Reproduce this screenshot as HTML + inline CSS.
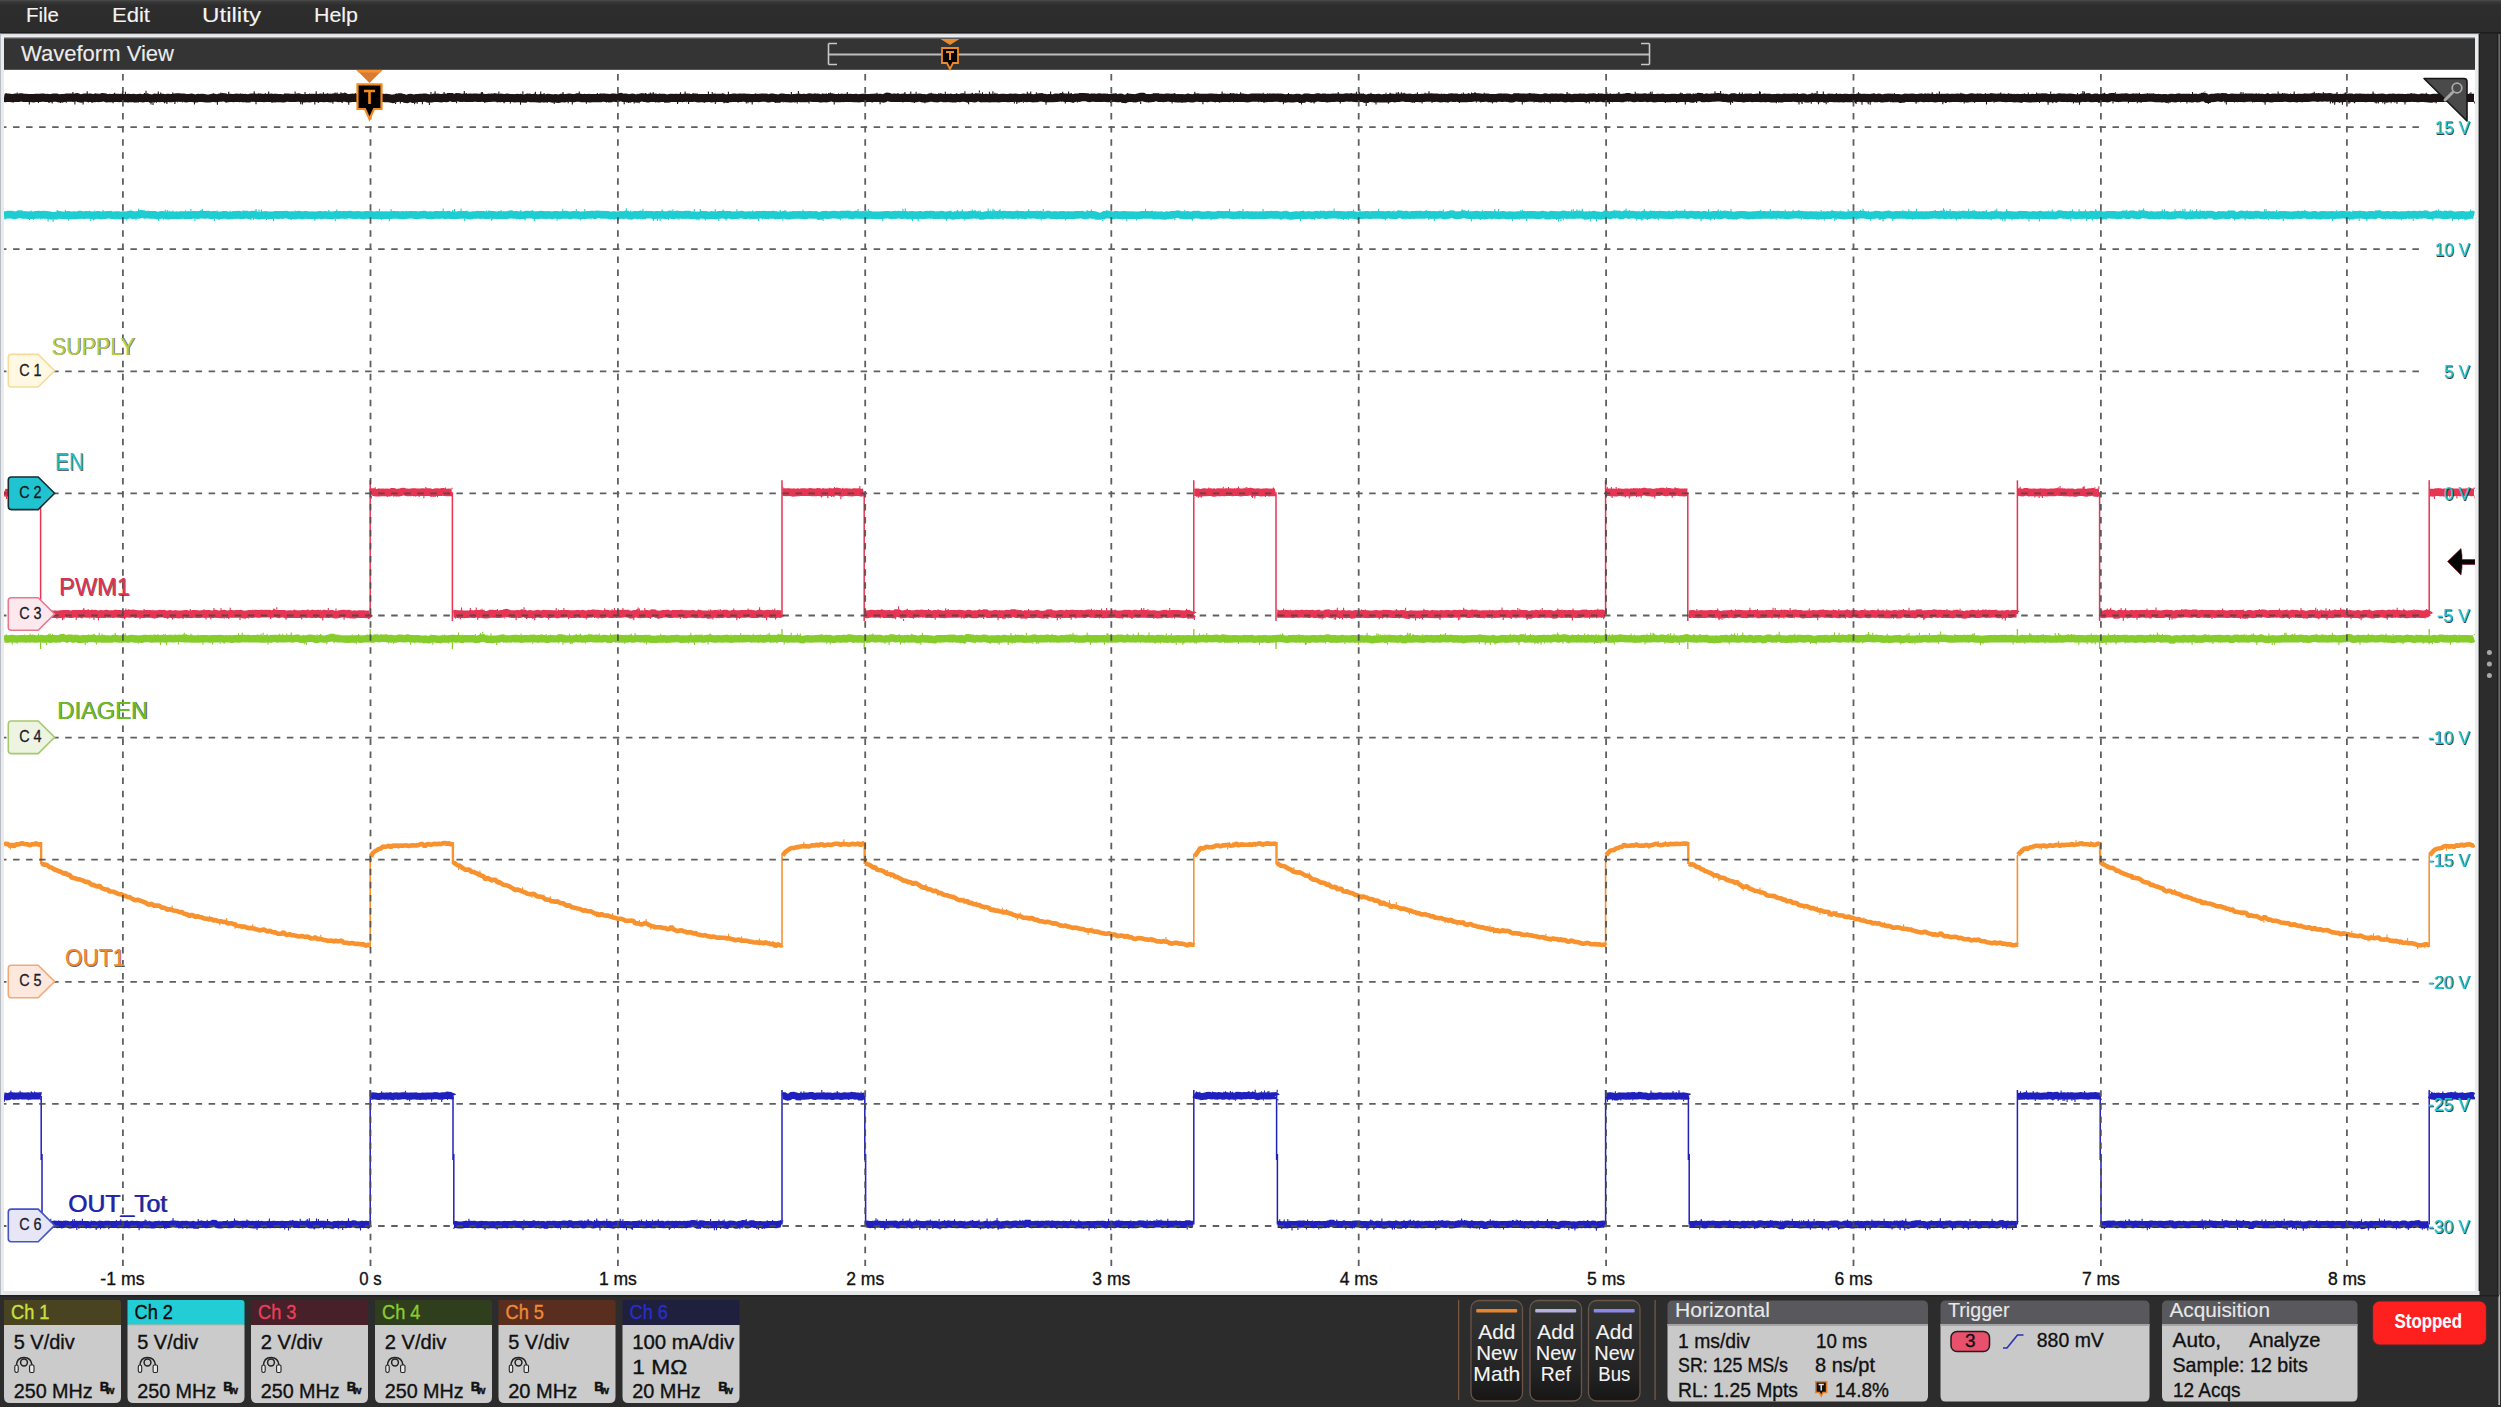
<!DOCTYPE html>
<html><head><meta charset="utf-8"><title>Waveform View</title>
<style>
*{margin:0;padding:0}
html,body{width:2501px;height:1407px;overflow:hidden;background:#2c2c2c}
svg{position:absolute;left:0;top:0;display:block}
</style></head><body>
<svg width="2501" height="1407" viewBox="0 0 2501 1407" font-family="'Liberation Sans', sans-serif">
<defs><clipPath id="pc"><rect x="4" y="70" width="2471" height="1221"/></clipPath></defs>
<defs><linearGradient id="mg" x1="0" y1="0" x2="0" y2="1"><stop offset="0" stop-color="#525252"/><stop offset="0.03" stop-color="#3c3c3c"/><stop offset="0.16" stop-color="#2d2d2d"/><stop offset="1" stop-color="#2c2c2c"/></linearGradient><linearGradient id="lg" x1="0" y1="0" x2="0" y2="1"><stop offset="0" stop-color="#d6d9dc"/><stop offset="1" stop-color="#f6f7fa"/></linearGradient></defs><rect x="0" y="0" width="2501" height="34" fill="url(#mg)"/><rect x="0" y="32" width="2501" height="1.6" fill="#1e1e1e"/><text x="26" y="22" font-size="20.9" fill="#f4f4f4" textLength="33" lengthAdjust="spacingAndGlyphs" stroke="#f4f4f4" stroke-width="0.12">File</text><text x="112" y="22" font-size="20.9" fill="#f4f4f4" textLength="38" lengthAdjust="spacingAndGlyphs" stroke="#f4f4f4" stroke-width="0.12">Edit</text><text x="202" y="22" font-size="20.9" fill="#f4f4f4" textLength="59" lengthAdjust="spacingAndGlyphs" stroke="#f4f4f4" stroke-width="0.12">Utility</text><text x="314" y="22" font-size="20.9" fill="#f4f4f4" textLength="44" lengthAdjust="spacingAndGlyphs" stroke="#f4f4f4" stroke-width="0.12">Help</text><rect x="0" y="34" width="2479.5" height="1261" fill="#e9ebed"/><rect x="0" y="34" width="1" height="1261" fill="#b8bcc4"/><rect x="0" y="33.6" width="2479.5" height="4" fill="url(#lg)"/><rect x="0" y="33.6" width="1" height="1261.4" fill="#b8bcc4"/><rect x="4" y="37.6" width="2471" height="1" fill="#262626"/><rect x="4" y="38.6" width="2471" height="31.2" fill="#343434"/><text x="21" y="60.6" font-size="22.2" fill="#ececec" textLength="153" lengthAdjust="spacingAndGlyphs" stroke="#ececec" stroke-width="0.12">Waveform View</text><rect x="4" y="70" width="2471" height="1221" fill="#ffffff"/><rect x="2478.6" y="34" width="1.4" height="1261" fill="#1e1e1e"/><rect x="2497.2" y="34" width="1.3" height="1261" fill="#202020"/><rect x="2498.5" y="34" width="1.3" height="1261" fill="#7a7c80"/><rect x="2498.5" y="1295" width="1.3" height="110" fill="#d8d8d0"/><circle cx="2489.4" cy="652.6" r="2.5" fill="#a8a8a8"/><circle cx="2489.4" cy="664" r="2.5" fill="#a8a8a8"/><circle cx="2489.4" cy="675.5" r="2.5" fill="#a8a8a8"/><path d="M828.5 43.5 V64.5 M828.5 43.5 H837 M828.5 64.5 H837 M1649.5 43.5 V64.5 M1649.5 43.5 H1641 M1649.5 64.5 H1641" stroke="#c8c8c8" stroke-width="1.6" fill="none"/><path d="M829 54.5 H1649" stroke="#bdbdbd" stroke-width="2" fill="none"/><path d="M940.5 39 H959.5 L950 45 Z" fill="#e88a2e"/><path d="M942 48 H958 V63 H953 L950 69 L947 63 H942 Z" fill="#050505" stroke="#f08a22" stroke-width="1.8"/><path d="M946 52 H954 M950 52 V60" stroke="#f08a22" stroke-width="2" fill="none"/><rect x="4" y="1291" width="2475.5" height="4" fill="#e4e6e8"/><rect x="0" y="1295" width="2499" height="1.5" fill="#202020"/>
<g clip-path="url(#pc)">
<path d="M4 97.8L6 98.1L8 97.6L10 97.8L12 98.2L14 98L16 97.4L18 98.2L20 97.4L22 97.4L24 98L26 97.9L28 98L30 98L32 98.1L34 98.3L36 97.8L38 97.9L40 97.8L42 97.6L44 97.7L46 98L48 97.9L50 98.3L52 97.9L54 97.7L56 97.5L58 98.1L60 98.3L62 98L64 98.1L66 97.7L68 97.6L70 97.7L72 97.5L74 98L76 97.3L78 97.1L80 99.1L82 98.2L84 97.6L86 97.7L88 97.9L90 97.6L92 98.1L94 98.2L96 97.6L98 98.1L100 97.8L102 97.6L104 96.7L106 98.3L108 98.2L110 97.9L112 98.3L114 97.8L116 97.9L118 97.8L120 98.3L122 97.5L124 98.2L126 98.2L128 97.9L130 98.1L132 98.1L134 97.9L136 98.5L138 98L140 97.9L142 98.2L144 98.5L146 97.1L148 98L150 98L152 99.5L154 97.7L156 97.8L158 97.9L160 98.2L162 97.5L164 98.2L166 98.3L168 97.8L170 98.1L172 98.2L174 97.5L176 98L178 96.8L180 98L182 97.6L184 97.6L186 98.4L188 98L190 97.9L192 97.7L194 98.2L196 98.6L198 97.9L200 98L202 97.8L204 98.1L206 98.5L208 98.5L210 98.3L212 97.9L214 97.8L216 98.3L218 98L220 97.6L222 97.6L224 96.6L226 98.2L228 98.2L230 97.8L232 98L234 98.1L236 97.7L238 97.8L240 98.1L242 97.7L244 98.2L246 97.7L248 99L250 97.8L252 97.5L254 97.6L256 97.8L258 97.8L260 97.6L262 97.8L264 98.1L266 98L268 97.8L270 97.9L272 97.5L274 98.6L276 97.8L278 98.3L280 97.9L282 98.3L284 98.5L286 97.6L288 97.6L290 98L292 97.7L294 98L296 98L298 97.2L300 97.9L302 98.1L304 98.4L306 98.2L308 98L310 98.4L312 97.7L314 98L316 97.7L318 98.2L320 97.7L322 97.9L324 98.1L326 97.8L328 97.8L330 98.5L332 98.1L334 97.4L336 97.6L338 98.1L340 97.8L342 98.1L344 96.6L346 97.8L348 98.4L350 98.2L352 97.6L354 98L356 97.9L358 98.1L360 98L362 98L364 97.8L366 98.1L368 97.7L370 99.4L372 98L374 97.9L376 97.7L378 97.9L380 97.6L382 97.5L384 98.2L386 97.9L388 98.1L390 98.5L392 98.7L394 99.3L396 97.8L398 97.9L400 97.1L402 97.9L404 98.1L406 99.5L408 98.7L410 97.7L412 98.2L414 99.3L416 98.1L418 98L420 97.9L422 97.8L424 97.6L426 97.7L428 98.6L430 98.3L432 98.3L434 97.6L436 97.8L438 97.6L440 98.2L442 98.3L444 97.5L446 98.1L448 97.9L450 96L452 98L454 97.9L456 97.7L458 96.6L460 97.9L462 97.9L464 97.5L466 97.9L468 97.9L470 97.7L472 97.9L474 97.7L476 97.6L478 97.9L480 97.9L482 97.5L484 98L486 98.1L488 97.9L490 97.9L492 97.7L494 97.5L496 97.6L498 97.9L500 98.1L502 97.8L504 98.2L506 97.9L508 97.7L510 98L512 98L514 98.3L516 98.1L518 97.9L520 98.3L522 97.6L524 99.3L526 97.9L528 97.5L530 98.2L532 98.1L534 98.1L536 97.3L538 99.8L540 97.9L542 98L544 98.5L546 98.2L548 97.9L550 98L552 98.4L554 98.5L556 98L558 98.9L560 98.5L562 97.5L564 98.4L566 98L568 97.7L570 97.7L572 98.1L574 98.1L576 97.8L578 97.1L580 97.8L582 98.3L584 98L586 98.1L588 98L590 98.5L592 98L594 98.1L596 98.1L598 98L600 98.3L602 97.6L604 97.6L606 97.9L608 97.8L610 98.7L612 97.5L614 97.5L616 97.9L618 98.2L620 96.8L622 97.4L624 97.9L626 97.4L628 98.5L630 98.2L632 97.6L634 98L636 98.4L638 98.6L640 97.7L642 97.3L644 97.9L646 97.9L648 98.4L650 98L652 97.6L654 97.8L656 97.7L658 98.6L660 97.9L662 97.9L664 97.9L666 98.2L668 99L670 97.8L672 97.9L674 98L676 97.7L678 98L680 97.9L682 98L684 97.8L686 97.7L688 97.7L690 97.9L692 98L694 97.7L696 97.7L698 98.6L700 98L702 98.2L704 98.1L706 98.1L708 98L710 98L712 98.4L714 97.5L716 98.1L718 97.8L720 97.9L722 97.8L724 97.7L726 99.6L728 98.2L730 98.1L732 97.9L734 97.6L736 97.9L738 97.8L740 97.6L742 97.8L744 97.5L746 98L748 97.7L750 98.1L752 98.1L754 98L756 97.7L758 98.1L760 97.9L762 97.4L764 97.8L766 97.5L768 98.4L770 98.1L772 97.4L774 98L776 98L778 99.3L780 98.1L782 97.4L784 97.8L786 98.2L788 98.1L790 98.4L792 98.3L794 98L796 98.6L798 97.3L800 98.2L802 98.1L804 97.9L806 98.2L808 97.9L810 97.3L812 98L814 97.7L816 97.9L818 97.7L820 98.3L822 98.4L824 97.2L826 98.5L828 98.1L830 97.5L832 97.4L834 98L836 98.1L838 98L840 98.3L842 97.8L844 98.1L846 97.7L848 98L850 97.9L852 98L854 98.2L856 97.9L858 98.3L860 98.2L862 97.9L864 97.8L866 98.1L868 98L870 98L872 97.8L874 97.8L876 97.7L878 98L880 97.8L882 98.3L884 98.6L886 97.1L888 96.4L890 97.7L892 98L894 97.6L896 97.9L898 97.9L900 98L902 97.8L904 97.7L906 97.9L908 98L910 97.8L912 98.1L914 97.9L916 98.2L918 97.8L920 97.4L922 98.3L924 98.2L926 98.3L928 98.2L930 97.4L932 97.6L934 98.1L936 97.9L938 98.4L940 97.4L942 97.7L944 98.2L946 98.2L948 97.8L950 98.2L952 97.7L954 99.1L956 97.6L958 98L960 98.2L962 97.4L964 97.7L966 98.1L968 97.9L970 97.8L972 97.7L974 98.3L976 98.2L978 96.1L980 98.4L982 97.9L984 98.2L986 97.9L988 98.2L990 98.4L992 97.6L994 98.3L996 97.8L998 98.4L1000 98.1L1002 97.8L1004 97.9L1006 98L1008 98.3L1010 97.7L1012 97.9L1014 97.8L1016 97.5L1018 98.4L1020 98L1022 97.8L1024 97.5L1026 98.2L1028 97.6L1030 97.8L1032 98.1L1034 98.3L1036 97.9L1038 98.3L1040 96.3L1042 97.7L1044 97.8L1046 98.3L1048 98.2L1050 98L1052 98.3L1054 98L1056 97.6L1058 97.8L1060 97.5L1062 96.8L1064 97.8L1066 97.6L1068 97.8L1070 97.7L1072 98.4L1074 98.1L1076 97.5L1078 97.7L1080 97.9L1082 96.4L1084 97.9L1086 96.5L1088 98L1090 98.1L1092 97.6L1094 97.5L1096 97.9L1098 98L1100 97.9L1102 97.9L1104 97.4L1106 98L1108 98.1L1110 98L1112 97.9L1114 97.4L1116 97.9L1118 98.3L1120 97.7L1122 97.9L1124 99.5L1126 98.5L1128 98L1130 97.7L1132 98L1134 98.2L1136 98.3L1138 97.4L1140 97.6L1142 96.3L1144 97.5L1146 98.1L1148 98L1150 98.3L1152 97.9L1154 98L1156 96.3L1158 98L1160 97.8L1162 97.8L1164 98.2L1166 97.5L1168 97.5L1170 97.8L1172 97.8L1174 97.6L1176 98.6L1178 98.1L1180 98.3L1182 98.2L1184 98.3L1186 98.3L1188 97.8L1190 98.1L1192 98.4L1194 98.1L1196 97.6L1198 97.7L1200 97.9L1202 97.8L1204 97.8L1206 97.9L1208 98.1L1210 97.6L1212 97.7L1214 97.9L1216 97.8L1218 98L1220 98.3L1222 97.8L1224 97.7L1226 97.8L1228 97.9L1230 98.1L1232 97L1234 98L1236 97.8L1238 98L1240 97.9L1242 97.6L1244 97.8L1246 98.2L1248 98.3L1250 97.9L1252 97.5L1254 97.6L1256 97.6L1258 97.7L1260 97.6L1262 97.8L1264 97.9L1266 98.1L1268 97.8L1270 97.6L1272 98.1L1274 97.5L1276 97.8L1278 97.5L1280 98.1L1282 97.8L1284 98.1L1286 98.3L1288 98.1L1290 98.1L1292 98.4L1294 98.3L1296 97.9L1298 97.9L1300 98L1302 100.2L1304 97.7L1306 97.7L1308 97.5L1310 98.1L1312 98L1314 98.4L1316 97.7L1318 97.3L1320 97.7L1322 98L1324 97.4L1326 98.2L1328 97.9L1330 98.2L1332 97.5L1334 98.1L1336 97.6L1338 97.5L1340 98L1342 97.9L1344 98L1346 97.2L1348 97.6L1350 97.7L1352 97.5L1354 97.5L1356 98.1L1358 97.8L1360 97.9L1362 97.7L1364 98.1L1366 99.5L1368 98.3L1370 97.7L1372 98.1L1374 98.1L1376 98.8L1378 97.7L1380 98.3L1382 98.5L1384 98.1L1386 98.3L1388 98.2L1390 98.3L1392 97L1394 98.4L1396 98L1398 97.6L1400 97.8L1402 97.5L1404 97.4L1406 98L1408 97.8L1410 97.7L1412 98.4L1414 98.2L1416 97.8L1418 98L1420 98.2L1422 97.8L1424 97.8L1426 97.7L1428 97.6L1430 97.7L1432 97.4L1434 98.1L1436 97.5L1438 97.8L1440 98.4L1442 98.2L1444 97.8L1446 98.2L1448 98.1L1450 97.5L1452 97.4L1454 98.2L1456 97.3L1458 98L1460 98.1L1462 98.2L1464 97.7L1466 98.3L1468 97.6L1470 98L1472 98L1474 96.7L1476 97.6L1478 97.3L1480 97.6L1482 97.9L1484 97.8L1486 97.5L1488 97.7L1490 98.2L1492 98L1494 98.2L1496 98L1498 97.7L1500 97.7L1502 97.9L1504 97.6L1506 97.5L1508 97.8L1510 98.3L1512 98.4L1514 98L1516 96.6L1518 98L1520 97.4L1522 98L1524 97.6L1526 97.8L1528 97.7L1530 97.3L1532 97.6L1534 97.6L1536 98.1L1538 97.7L1540 98.5L1542 98L1544 97.8L1546 97.3L1548 98.3L1550 97.9L1552 97.5L1554 97.9L1556 97.5L1558 98.1L1560 97.7L1562 97.5L1564 98.2L1566 98.3L1568 97.3L1570 98L1572 98.3L1574 97.9L1576 97.9L1578 98L1580 97.6L1582 97.8L1584 97.6L1586 98.3L1588 97.9L1590 97.7L1592 97.6L1594 97.3L1596 98L1598 97.9L1600 97.7L1602 97.7L1604 98.4L1606 97.8L1608 98.4L1610 97.7L1612 98L1614 97.9L1616 98L1618 97.6L1620 97.8L1622 98.4L1624 97.6L1626 97.6L1628 96.7L1630 97.5L1632 97.8L1634 98.2L1636 97.7L1638 97.5L1640 97.9L1642 97.9L1644 97.4L1646 97.6L1648 98.2L1650 97.4L1652 97.8L1654 98.5L1656 98.1L1658 97.8L1660 98L1662 97.7L1664 97.9L1666 98.3L1668 98L1670 98.1L1672 97.8L1674 97.9L1676 97.9L1678 98.3L1680 97.6L1682 97.9L1684 98L1686 98.1L1688 97.6L1690 97.8L1692 98.9L1694 98.2L1696 97.5L1698 97.5L1700 96.2L1702 98.2L1704 98.2L1706 97.6L1708 98.1L1710 97.8L1712 97.6L1714 97.7L1716 97.4L1718 97.2L1720 97.3L1722 97.7L1724 98L1726 97.8L1728 98.5L1730 98.4L1732 97.4L1734 97.3L1736 97.7L1738 98L1740 97.9L1742 98L1744 98.4L1746 97.5L1748 98L1750 97.4L1752 98.1L1754 98L1756 97.8L1758 97.7L1760 98.1L1762 98.1L1764 97.7L1766 97.9L1768 97.9L1770 97.9L1772 98.6L1774 98.1L1776 98.3L1778 97.4L1780 98.5L1782 98.3L1784 97.6L1786 98L1788 97.8L1790 97.8L1792 97.8L1794 97.5L1796 97.9L1798 98.2L1800 98L1802 97.7L1804 97.6L1806 98.5L1808 98.5L1810 98.1L1812 97.7L1814 97.9L1816 97.3L1818 98.6L1820 98.1L1822 98L1824 97.9L1826 99.2L1828 97.6L1830 97.9L1832 97.8L1834 98.2L1836 97.9L1838 98.1L1840 97.9L1842 98.1L1844 98.3L1846 97.6L1848 98.2L1850 98.2L1852 97.9L1854 97.9L1856 98.3L1858 97.3L1860 97.8L1862 98.3L1864 97.5L1866 98.2L1868 97.9L1870 98.3L1872 97.8L1874 97.5L1876 98.6L1878 97.6L1880 97.9L1882 98.5L1884 98.2L1886 97.6L1888 98.3L1890 96.7L1892 98.7L1894 98L1896 98.1L1898 98L1900 98.3L1902 99.7L1904 97.4L1906 97.8L1908 97.9L1910 97.8L1912 97.7L1914 97.9L1916 98.2L1918 98.2L1920 97.5L1922 97.7L1924 98.2L1926 97.8L1928 97.6L1930 97.9L1932 97.8L1934 98.1L1936 98.4L1938 97.8L1940 98L1942 97.8L1944 98.1L1946 97.8L1948 97.7L1950 98.2L1952 97.8L1954 97.9L1956 98L1958 97.2L1960 98.4L1962 97.5L1964 97.9L1966 98.3L1968 98.3L1970 97.7L1972 97.2L1974 98.2L1976 97.8L1978 97.8L1980 97.7L1982 97.9L1984 98L1986 98L1988 97.7L1990 98L1992 97.4L1994 97.7L1996 97.8L1998 97.7L2000 97.5L2002 97.8L2004 97.9L2006 98.1L2008 97.9L2010 97.9L2012 97.9L2014 98.3L2016 98.2L2018 97.9L2020 98.5L2022 98.1L2024 97.7L2026 98.1L2028 98L2030 98.6L2032 97.8L2034 98.1L2036 98.2L2038 97.4L2040 97.9L2042 97.4L2044 97.7L2046 97.3L2048 98.4L2050 97.9L2052 98.3L2054 97.8L2056 98.2L2058 97.6L2060 97.4L2062 98L2064 97.6L2066 97.8L2068 98.1L2070 97.6L2072 97.8L2074 98.1L2076 98.5L2078 98.3L2080 98.3L2082 97.3L2084 97.9L2086 97.9L2088 97.2L2090 97.9L2092 98.3L2094 97.9L2096 97.7L2098 98.1L2100 98.3L2102 97.8L2104 97.7L2106 98.1L2108 98.5L2110 97.4L2112 97.2L2114 97.2L2116 98L2118 97.7L2120 98.1L2122 97.6L2124 97.7L2126 97.4L2128 97.7L2130 98L2132 97.7L2134 97.9L2136 97.7L2138 97.7L2140 98.2L2142 98L2144 97.9L2146 97.9L2148 97.5L2150 97.7L2152 97.7L2154 97.8L2156 98.3L2158 97.9L2160 98.2L2162 98.3L2164 98.1L2166 98.2L2168 99.4L2170 97.8L2172 97.9L2174 98.1L2176 98.4L2178 97.3L2180 97.9L2182 97.9L2184 97.9L2186 97.8L2188 97.9L2190 98.1L2192 98.5L2194 97.9L2196 97.9L2198 98.5L2200 97.7L2202 97.5L2204 96L2206 98.2L2208 99.5L2210 98.2L2212 97.7L2214 98.1L2216 97.5L2218 97.3L2220 97.6L2222 97.8L2224 96.2L2226 98L2228 98L2230 98L2232 97.6L2234 97.8L2236 97.8L2238 98.1L2240 97.7L2242 97.8L2244 98.2L2246 97.6L2248 97.6L2250 97.7L2252 97.6L2254 98.1L2256 97.8L2258 97.8L2260 97.9L2262 97.8L2264 98.4L2266 97.9L2268 97.9L2270 98.1L2272 98.4L2274 97.6L2276 97.9L2278 97.8L2280 97.7L2282 98.1L2284 97.6L2286 97.6L2288 98L2290 98.2L2292 98L2294 97.9L2296 98.2L2298 97.9L2300 97.8L2302 98.1L2304 97.8L2306 97.6L2308 97.9L2310 97.7L2312 97.4L2314 97.4L2316 97.5L2318 97.9L2320 97.3L2322 97.6L2324 97.5L2326 97.4L2328 97.6L2330 97.1L2332 97.7L2334 98.4L2336 97.5L2338 98.1L2340 98L2342 98.3L2344 97.6L2346 98L2348 98.1L2350 97.5L2352 98L2354 98.3L2356 97.7L2358 97.9L2360 97.7L2362 97.8L2364 97.9L2366 98.1L2368 97.8L2370 98L2372 97.8L2374 97.6L2376 98.4L2378 97.9L2380 97.8L2382 97.7L2384 97.9L2386 98.3L2388 98.3L2390 97.7L2392 98.1L2394 97.6L2396 98.2L2398 97.9L2400 97.9L2402 98L2404 98.1L2406 98.2L2408 97.8L2410 97.9L2412 97.4L2414 97.9L2416 97.9L2418 98.3L2420 98L2422 97.6L2424 97.8L2426 98.3L2428 97.8L2430 99.3L2432 98L2434 97.7L2436 98.3L2438 97.3L2440 98.1L2442 97.5L2444 98L2446 97.7L2448 97.5L2450 98.3L2452 97.5L2454 97.7L2456 98.5L2458 97.5L2460 98L2462 98.1L2464 97.8L2466 97.7L2468 98L2470 97.9L2472 97.9L2474 97.9" fill="none" stroke="#1c1414" stroke-width="8.2" stroke-linejoin="bevel" /><path d="M6.1 94.5v-1.4M13.2 101.8v0.6M17.2 93.8v-1.4M29.3 101.6v2.8M38.4 101.5v1.4M49 101.5v1.4M52.2 101.5v2M60.6 101.9v1M62.3 101.6v1M66.3 101.3v1.4M72.9 93.9v-2M74.9 101.6v2.8M83.1 101.8v2.8M87.2 94.1v-2.8M88.3 101.5v1M92.1 101.7v1.4M95.1 94.6v-1.4M101.3 94.2v-1M113.1 101.9v1.4M114.6 94.2v-1.4M122.5 93.9v-2.8M125.4 94.6v-2.8M128 101.5v1M132.1 94.5v-0.6M134.4 101.5v1M138.4 101.6v1M144.5 94.9v-2M146 93.5v-2.8M151 101.6v2.8M153 103.1v2M154.9 101.3v1M156.5 101.4v1.4M158.3 94.3v-2.8M160.7 94.6v-2M164.5 101.8v1.4M166.9 101.9v2M172.8 94.6v-2M174.9 101.1v2.8M177.4 101.6v0.6M178.9 100.4v1M182.4 101.2v1.4M187.1 94.8v-0.6M194.5 101.8v2.8M213.3 94.3v-1M217.4 101.9v2.8M220.9 94v-1.4M226.1 101.8v1M228.7 94.6v-2.8M240.4 94.5v-1M242.4 101.3v1M244.3 94.6v-0.6M252.9 101.1v0.6M254.2 94v-2.8M256 101.4v2.8M258.5 94.2v-0.6M265.3 94.5v-1.4M268.7 94.2v-2.8M272 101.1v2M274.9 95v-1.4M278.3 94.7v-0.6M284.8 94.9v-1.4M295.1 94.4v-2.8M300.7 101.5v2.8M302.4 101.7v2.8M305 94.8v-2.8M309.5 94.4v-1M314.8 101.6v2.8M316.2 94.1v-2.8M318.5 101.8v1M323.4 94.3v-2M327.4 94.2v-1M329 94.2v-0.6M330.8 94.9v-1.4M332.9 101.7v2M335.1 93.8v-1.4M337.1 94v-1.4M340.9 94.2v-2M342.2 101.7v1.4M344.7 93v-0.6M348.7 102v2.8M355.2 94.4v-1.4M357.5 101.5v2M358.2 101.7v0.6M363.1 94.4v-1.4M364.6 94.2v-1M367.5 101.7v2M368.9 94.1v-1M370.3 103v1M372.1 101.6v0.6M376.7 94.1v-0.6M378.3 94.3v-2M395.5 102.9v1M396.3 94.2v-0.6M398.3 101.5v0.6M400.4 100.7v2.8M402.8 101.5v0.6M414.6 102.9v1.4M417.2 101.7v2M422.4 101.4v2.8M427 101.3v1M429.4 102.2v2.8M431 94.7v-2.8M435.1 94v-2.8M444.1 93.9v-2M449.2 94.3v-1.4M456.5 101.3v2M464.3 93.9v-2.8M466.3 94.3v-1.4M481.3 94.3v-2M482.4 93.9v-2M484.8 101.6v1.4M486.4 94.5v-0.6M488.7 94.3v-0.6M494.8 93.9v-1M497.2 101.2v1.4M498.9 94.3v-2.8M500.8 94.5v-1M504.1 101.8v1.4M510.4 101.6v2M518.4 101.5v0.6M520.5 101.9v2.8M522.9 94v-2.8M530.1 94.6v-1M535.4 94.5v-2.8M540.7 94.3v-2.8M544.1 94.9v-2M547.2 101.8v1M552.4 102v0.6M554.2 102.1v2M556 101.6v0.6M563 93.9v-2M568.2 101.3v2M570.2 101.3v0.6M572.3 101.7v2.8M579.3 93.5v-2M584.4 94.4v-0.6M586.4 101.7v2M589 94.4v-0.6M597.4 94.5v-1.4M600.1 94.7v-1.4M606.4 101.5v1M618.7 94.6v-1M622.7 101v0.6M624.2 101.5v2.8M626.8 101v1.4M628.7 102.1v1M630.6 101.8v0.6M634.2 101.6v2M637.3 94.8v-1M639.2 102.2v1M645.3 94.3v-1.4M646 94.3v-1M648.8 94.8v-1.4M650.3 94.4v-2M653.2 94v-2M655.4 101.4v1M659.2 95v-1.4M664.9 101.5v1.4M669.2 95.4v-1M677.5 101.3v2.8M678.1 101.6v1M680.5 94.3v-2M682.4 101.6v0.6M685.1 94.2v-2.8M686.7 101.3v1M688.6 101.3v2.8M693.1 94.4v-1.4M697.3 94.1v-0.6M702.4 94.6v-0.6M704.2 101.7v1.4M708.4 94.4v-2.8M712.2 94.8v-2.8M715.3 101.1v2.8M717.2 94.5v-0.6M722.4 94.2v-1M724.2 101.3v2M728.4 94.6v-2.8M738.1 101.4v1.4M746.3 101.6v2M748 101.3v2M752.2 101.7v2.8M755.4 94.4v-1M760.7 101.5v0.6M773.2 101v0.6M775.2 101.6v1.4M783.1 101v1.4M791.4 94.8v-2.8M797.3 102.2v1.4M798.4 93.7v-2.8M809 101.5v2M815 94.1v-0.6M822.7 94.8v-1.4M824.7 100.8v0.6M826.5 94.9v-1.4M828.7 94.5v-1.4M830.4 93.9v-1.4M834.2 101.6v2.8M838.5 94.4v-1M841.3 94.7v-1M847.3 94.1v-2M856.3 94.3v-0.6M865.5 101.4v1.4M872.1 101.4v1.4M877 94.1v-1.4M880.1 101.4v2.8M888.7 100v0.6M898 94.3v-1.4M902.9 101.4v1M904.9 94.1v-2M910.8 94.2v-2.8M913 101.7v0.6M914.4 101.5v1.4M916.1 94.6v-2.8M923.1 94.7v-0.6M924.9 101.8v1.4M931.3 93.8v-1M938.5 94.8v-1.4M945.3 94.6v-2.8M950.8 94.6v-1M956.5 94v-0.6M963.2 93.8v-0.6M964.9 94.1v-2.8M967.3 101.7v1M968.6 101.5v2.8M972.3 94.1v-1.4M979.4 92.5v-2M982.5 94.3v-2M989.4 94.6v-2.8M990.1 94.8v-1M992.9 94v-2.8M994.9 94.7v-2M997 94.2v-1M1014.4 101.4v2M1016.8 101.1v2.8M1023.5 101.4v1.4M1027.3 94.6v-2.8M1029.1 94v-0.6M1030.7 94.2v-2.8M1036.3 94.3v-2M1040.3 99.9v1.4M1046 101.9v2.8M1050.6 94.4v-2.8M1054.6 101.6v0.6M1061.4 101.1v0.6M1062.7 93.2v-1.4M1065.3 101.4v2M1068.6 94.2v-2.8M1071.3 94.1v-1M1073.1 102v1M1077.4 101.1v1.4M1085.3 94.3v-1M1098.1 94.4v-1.4M1100 94.3v-1.4M1107.3 94.4v-1M1110.7 101.6v1.4M1114.4 101v0.6M1116 94.3v-1.4M1127.3 94.9v-2M1128.3 94.4v-1M1133.5 101.6v0.6M1134.9 94.6v-0.6M1140.7 101.2v2.8M1144.5 93.9v-1M1148.7 101.6v1M1166.7 101.1v1M1172.1 101.4v2M1174.8 94v-1M1179.4 94.5v-0.6M1180.1 94.7v-0.6M1182.1 101.8v1M1188 94.2v-0.6M1193.2 94.8v-0.6M1194.8 94.5v-2.8M1198 94.1v-0.6M1202.9 101.4v2.8M1206.9 101.5v0.6M1215.2 101.5v1M1219.5 101.6v1M1222.1 94.2v-2.8M1230.5 94.5v-1.4M1233.5 100.6v2M1237 94.2v-0.6M1240.6 94.3v-2M1258.6 101.3v1M1263.1 94.2v-1.4M1264 101.5v1.4M1267.5 94.5v-1M1280.8 94.5v-1M1283.4 101.4v2.8M1285.2 101.7v1M1288.5 94.5v-1.4M1290.2 101.7v0.6M1301.5 101.6v2.8M1303.1 96.6v-1M1308.3 101.1v0.6M1311.1 101.7v1M1314.1 102v1.4M1327 101.8v0.6M1328.8 101.5v0.6M1330.2 94.6v-0.6M1338.2 93.9v-2M1340.3 101.6v2M1351.2 94.1v-1M1353 101.1v1M1354.1 101.1v0.6M1356.4 94.5v-2.8M1359.5 94.2v-2M1360.3 101.5v0.6M1363.4 94.1v-0.6M1366.2 103.1v2.8M1371 94.1v-1.4M1376 102.4v2M1386 94.7v-2M1388.4 101.8v2M1390.2 94.7v-2M1396.3 94.4v-2M1398.3 94v-2M1401.4 94.2v-2M1404.3 93.8v-1M1412.8 102v0.6M1414.5 101.8v1M1417.4 94.2v-2M1422.1 101.4v2M1425.1 94.2v-1.4M1429 94v-2.8M1432 101v2M1441.2 94.8v-1.4M1448 101.7v1M1455.5 94.6v-0.6M1459.4 101.6v1.4M1461.4 94.5v-1M1463.3 94.6v-2M1468.7 94v-1M1471.5 94.4v-2M1475 93.1v-1M1476.4 101.2v1.4M1480.7 101.2v1.4M1484.2 94.2v-1.4M1488.2 101.3v1M1490.6 94.6v-0.6M1492.4 101.6v2M1496.4 101.6v1M1501.2 94.1v-0.6M1506.6 101.1v1M1518.8 94.4v-1M1522.3 101.6v2.8M1524.3 101.2v1.4M1529.4 94.1v-1M1530.1 100.9v0.6M1534 101.2v1.4M1544.3 101.4v1.4M1546.6 100.9v1M1549.1 94.7v-1M1550.2 101.5v2M1552.2 101.1v1M1567.1 94.7v-2.8M1569 100.9v1M1575.2 101.5v0.6M1586.2 101.9v1.4M1589.3 101.5v2M1592.6 101.2v0.6M1596.1 101.6v0.6M1598.4 94.3v-1M1604.1 94.8v-0.6M1606.8 94.2v-2M1609.3 102v2M1610.4 94.1v-0.6M1612.4 101.6v0.6M1618.9 94v-2M1628.3 100.3v1.4M1635.2 94.6v-2.8M1648.9 94.6v-0.6M1650.4 93.8v-2M1652.1 94.2v-2.8M1654.4 94.9v-0.6M1665.3 101.5v1.4M1667.2 94.7v-0.6M1676.5 101.5v1.4M1680.8 94v-1.4M1682.3 94.3v-1M1685.3 101.6v2.8M1690.1 94.2v-0.6M1693.2 95.3v-2M1696.6 101.1v2M1706.7 94v-0.6M1711.4 101.4v0.6M1715 94.1v-2.8M1720.6 93.7v-2.8M1723.4 94.1v-0.6M1730.6 102v2.8M1732.6 101v2M1734.7 100.9v0.6M1739.4 94.4v-2M1742.3 94.4v-2M1759.5 94.1v-2.8M1760.3 94.5v-2.8M1764.1 101.3v1M1766 101.5v1M1776.4 101.9v1.4M1778.6 101v1.4M1781 94.9v-1M1795.2 101.1v1M1797.3 94.3v-1.4M1799 101.8v2.8M1801.3 101.6v1M1802.1 101.3v2.8M1811.3 101.7v2M1812.1 94.1v-1.4M1814 101.5v0.6M1817.1 93.7v-2.8M1818.5 102.2v2M1823.3 94.4v-2.8M1826.2 102.8v1.4M1836.5 94.3v-1M1838.9 101.7v0.6M1844.1 94.7v-1M1852.9 101.5v1M1855.5 101.5v1.4M1856.1 101.9v2M1858.5 93.7v-1.4M1862 101.9v2.8M1868.2 101.5v2.8M1870.2 101.9v2.8M1874 93.9v-0.6M1890.6 100.3v2M1894.3 94.4v-1.4M1899.4 101.6v0.6M1900.3 101.9v1M1904.3 101v1M1916.1 101.8v2M1921.3 101.1v0.6M1925 94.6v-1.4M1928.3 101.2v1M1932.2 94.2v-2M1934.9 94.5v-0.6M1936.7 94.8v-1.4M1939.4 94.2v-2.8M1942.8 101.4v2.8M1945.5 101.7v1.4M1946.5 101.4v1.4M1960.9 94.8v-2M1964.2 101.5v2M1971 101.3v1M1973 100.8v1.4M1974.6 101.8v1M1977.4 94.2v-0.6M1985.3 94.4v-1.4M1986.5 101.6v2.8M1990.9 94.4v-1.4M1994.1 101.3v1.4M2000.7 93.9v-1.4M2004.1 94.3v-0.6M2008.7 94.3v-1M2010.8 101.5v0.6M2014.3 94.7v-1M2021.1 102.1v0.6M2022.1 101.7v1M2024.5 94.1v-0.6M2028.3 94.4v-2M2036.6 94.6v-2M2039.5 101v2M2043.2 101v1M2048.1 102v2.8M2050.7 94.3v-2.8M2052.8 101.9v1.4M2054.8 101.4v0.6M2056.2 101.8v1M2071.1 101.2v1M2073.4 101.4v2M2077.5 94.9v-2M2079.5 101.9v2.8M2082.9 93.7v-2.8M2084.4 94.3v-2.8M2089.1 93.6v-0.6M2097.2 94.1v-0.6M2098.9 101.7v1.4M2100.7 94.7v-1.4M2103.1 94.2v-0.6M2104.6 94.1v-1.4M2113 100.8v2.8M2115.4 93.6v-1.4M2118.4 101.3v1M2128.4 101.3v2M2133.3 94.1v-0.6M2137.3 101.3v2M2139.4 94.1v-1.4M2141.1 101.8v1M2147.4 94.3v-1M2153.4 94.1v-0.6M2166.7 94.6v-0.6M2168.3 103v0.6M2178.6 100.9v0.6M2180.7 101.5v1M2186.9 101.4v2M2189.4 94.3v-0.6M2192.5 94.9v-2.8M2196.7 94.3v-0.6M2203.4 93.9v-1.4M2204.9 92.4v-1M2206.9 101.8v1M2208.3 103.1v1M2213 101.3v1M2222.1 101.4v0.6M2224.8 99.8v2.8M2226.3 101.6v2.8M2234.4 101.4v1M2241 94.1v-2M2243.1 94.2v-2M2245.3 94.6v-1M2247.5 101.2v0.6M2252.5 101.2v1.4M2256.2 94.2v-1M2258.8 94.2v-0.6M2265.1 102v2.8M2267.1 94.3v-1M2268.1 94.3v-1.4M2272.1 94.8v-1.4M2278.1 94.2v-2.8M2282.5 94.5v-1.4M2284.5 94v-0.6M2290.6 94.6v-1M2294.2 94.3v-2.8M2297.1 101.8v0.6M2304.2 94.2v-0.6M2313 93.8v-1M2314.3 93.8v-2M2316.8 93.9v-1M2318.4 94.3v-1.4M2323.3 94v-2M2324.8 93.9v-0.6M2330.4 100.7v2.8M2332.7 101.3v2M2334.7 102v2.8M2337 93.9v-2M2339.5 101.7v1M2340.5 94.4v-0.6M2342.4 101.9v2.8M2345.2 94v-1.4M2346 94.4v-2M2349 101.7v2M2350.2 101.1v1.4M2352.1 94.4v-1M2354.5 101.9v1.4M2373.1 94.2v-2.8M2374.9 101.2v1.4M2376.2 102v1.4M2378.3 101.5v2M2382.8 101.3v2M2384.8 101.5v2.8M2386.7 101.9v0.6M2391.1 101.3v2M2394.3 101.2v1.4M2397 101.8v2M2402.6 94.4v-0.6M2405 101.7v2.8M2411.1 94.3v-1.4M2414.4 94.3v-0.6M2426.2 94.7v-2M2433.3 101.6v0.6M2434.6 101.3v1M2436.2 101.9v1.4M2438.9 93.7v-2.8M2440.3 94.5v-0.6M2447 94.1v-1.4M2450.9 101.9v0.6M2453.3 93.9v-0.6M2457.3 102.1v2.8M2459 93.9v-2.8M2465.5 94.2v-1M2469.5 94.4v-1M2470.9 94.3v-2M2472.8 101.5v0.6M2474.7 101.5v2" stroke="#1c1414" stroke-width="1.1" fill="none"/><path d="M4 215.1L6 215L8 214.6L10 214.6L12 214.6L14 215.4L16 215L18 214.7L20 213.3L22 215L24 215L26 215L28 215.2L30 214.9L32 215.3L34 215.2L36 214.8L38 214.9L40 214.7L42 214.8L44 214.6L46 214.7L48 215.4L50 215L52 216.6L54 215.1L56 216.1L58 215L60 214.9L62 215.2L64 215.3L66 215.6L68 214.6L70 215.4L72 215.4L74 215.1L76 215.2L78 215.1L80 214.5L82 215L84 215.2L86 214.8L88 215L90 214.9L92 215.2L94 215.8L96 215.2L98 214.6L100 215.4L102 215.4L104 215.1L106 215.1L108 214.7L110 214.7L112 215.3L114 215.4L116 215.1L118 215L120 215.5L122 215.3L124 215.1L126 215.2L128 215.2L130 213.7L132 215.4L134 215.1L136 215L138 214.9L140 214.4L142 213L144 215L146 214.8L148 214.6L150 214.9L152 214.9L154 214.7L156 215.2L158 215.7L160 215.1L162 214.8L164 215L166 215.2L168 216.1L170 215L172 215.2L174 215.3L176 215.3L178 215.4L180 215.2L182 215L184 215L186 215.4L188 214.9L190 215.1L192 215.1L194 214.8L196 214.8L198 215.5L200 214.4L202 214.8L204 214.9L206 214.9L208 214.4L210 215.1L212 215.1L214 214.9L216 214.8L218 215.4L220 215.4L222 215.3L224 214.8L226 214.9L228 215.7L230 215.5L232 215.3L234 214.7L236 215.5L238 214.3L240 215.2L242 214.9L244 215.3L246 214.2L248 215L250 215.5L252 214.4L254 214.7L256 215L258 215.6L260 215.7L262 215L264 215.2L266 214.8L268 215.4L270 215.3L272 215.2L274 215L276 214.7L278 215.3L280 214.6L282 215.2L284 214.8L286 214.6L288 214.9L290 215.6L292 215L294 215.1L296 215.8L298 214.4L300 214.7L302 215.9L304 214.7L306 214.7L308 215.2L310 215.2L312 215.1L314 215.4L316 215.3L318 215L320 214.9L322 215.1L324 215.1L326 214.8L328 215.4L330 215.3L332 215.5L334 215.1L336 214.7L338 215.2L340 214.7L342 215L344 214.8L346 215.1L348 214.7L350 214.5L352 215L354 215.1L356 215.1L358 214.9L360 215L362 215.2L364 215.6L366 214.8L368 214.9L370 215L372 214.9L374 215.4L376 215.1L378 214.9L380 215.3L382 215L384 215.2L386 215L388 215.2L390 215.1L392 215.1L394 214.7L396 215L398 214.9L400 215.3L402 214.9L404 215.1L406 215.1L408 215L410 214.8L412 214.8L414 215.1L416 214.9L418 215.4L420 214.8L422 215L424 214.5L426 215L428 215.2L430 214.9L432 215.7L434 215L436 214.8L438 214.9L440 215.1L442 214.6L444 215.1L446 215.2L448 214.5L450 215.1L452 215.3L454 215.2L456 215.2L458 215.1L460 214.7L462 215.1L464 214.8L466 214.8L468 215.3L470 215.7L472 215.3L474 215L476 215L478 214.5L480 215.2L482 214.8L484 214.9L486 215.3L488 215.3L490 214.6L492 214.8L494 214.9L496 215.3L498 215.4L500 214.7L502 215.5L504 215L506 215L508 215.6L510 213.5L512 214.8L514 215.1L516 214.6L518 215.2L520 215L522 215.1L524 215.3L526 214.6L528 214.5L530 214.7L532 214.5L534 215.4L536 215.1L538 215.1L540 214.9L542 214.8L544 214.9L546 215.4L548 214.9L550 215L552 215.2L554 214.9L556 214.7L558 215L560 215.4L562 214.8L564 215L566 214.5L568 215.1L570 215.4L572 215L574 214.7L576 215L578 214.9L580 215.6L582 215.1L584 215.2L586 215.1L588 214.8L590 215.1L592 214.1L594 215.2L596 215.2L598 213.5L600 215.3L602 214.5L604 214.7L606 215L608 214.7L610 215.7L612 215.3L614 214.9L616 215.4L618 215.3L620 214.9L622 215L624 215.1L626 214.4L628 214.6L630 216.7L632 215.2L634 214.9L636 214.9L638 215.5L640 214.3L642 214.8L644 215.6L646 214.6L648 214.7L650 214.7L652 214.8L654 215.6L656 214.9L658 214.9L660 215L662 214.8L664 215L666 215.5L668 214.8L670 214.2L672 215.3L674 215.4L676 214.4L678 215.2L680 214.5L682 215.2L684 214.7L686 215.3L688 213.9L690 215.4L692 215.3L694 215.1L696 215.6L698 215.2L700 215L702 214.7L704 215.1L706 214.9L708 215.6L710 215.2L712 215.1L714 215.3L716 215.8L718 214.9L720 214.9L722 214.7L724 214.5L726 215.2L728 214.8L730 214.8L732 215.6L734 215.1L736 215.3L738 215L740 214.8L742 214.5L744 215.3L746 215.2L748 215L750 215L752 215.2L754 215.2L756 214.9L758 214.9L760 214.7L762 214.8L764 214.6L766 215.4L768 214.8L770 215.1L772 214.8L774 215.1L776 214.9L778 215.4L780 215.3L782 215.1L784 214.8L786 215.1L788 216.3L790 215L792 215.3L794 214.9L796 215L798 214.9L800 214.9L802 215.1L804 214.9L806 215.6L808 214.7L810 214.7L812 214.9L814 215L816 214.9L818 215.4L820 216.7L822 214.8L824 214.9L826 214.6L828 215.3L830 215L832 214.8L834 214.6L836 214.8L838 215.1L840 215L842 214.5L844 214.6L846 214.8L848 214.1L850 215L852 215.5L854 215L856 214.6L858 215L860 215L862 215.1L864 214.8L866 215.6L868 215L870 214.8L872 215.2L874 215.3L876 215.2L878 215.2L880 215.2L882 215.1L884 215L886 214.7L888 214.8L890 215L892 215.4L894 214.7L896 215.2L898 214.5L900 214.8L902 215.2L904 214.7L906 214.9L908 215.5L910 215L912 214.8L914 215.3L916 215.1L918 215.4L920 214.7L922 215.4L924 215.3L926 214.7L928 214.9L930 214.6L932 214.6L934 215.2L936 215.3L938 215L940 215.1L942 214.5L944 215.3L946 215.4L948 215.1L950 214.8L952 215.7L954 216L956 214.7L958 215.4L960 215L962 214.9L964 215.2L966 215.1L968 215.5L970 214.5L972 214.9L974 214.6L976 215L978 215L980 215.1L982 216.8L984 214.9L986 215.4L988 214.7L990 215.3L992 214.9L994 215.1L996 214.8L998 215.3L1000 214.6L1002 215.2L1004 214.3L1006 215L1008 214.9L1010 214.8L1012 215.1L1014 215.3L1016 214.4L1018 215L1020 214.9L1022 214.8L1024 215.3L1026 215.1L1028 214.6L1030 215L1032 214.8L1034 214.7L1036 214.9L1038 215.4L1040 214.5L1042 215.1L1044 215.3L1046 215L1048 214.2L1050 215L1052 215.2L1054 215L1056 215.1L1058 215.2L1060 214.9L1062 215.1L1064 214.9L1066 215.4L1068 215L1070 215.3L1072 215.1L1074 215.2L1076 214.8L1078 214.9L1080 214.8L1082 214.7L1084 215.3L1086 215.3L1088 214.9L1090 214.8L1092 214.7L1094 214.9L1096 215.2L1098 217.1L1100 215.2L1102 216.7L1104 214.9L1106 214.7L1108 214.5L1110 214.7L1112 215.3L1114 215.4L1116 214.5L1118 215.3L1120 215L1122 215.1L1124 214.9L1126 215.1L1128 215.1L1130 215.3L1132 215L1134 215.2L1136 215.3L1138 215.2L1140 215.1L1142 214.9L1144 214.9L1146 214.9L1148 214.9L1150 215L1152 214.7L1154 215.6L1156 215.4L1158 215.3L1160 215.4L1162 214.9L1164 216.7L1166 215.1L1168 215.2L1170 215.2L1172 214.7L1174 214.9L1176 214.4L1178 214.1L1180 214.7L1182 215.2L1184 215L1186 215.1L1188 214.9L1190 215.3L1192 215.4L1194 214.6L1196 214.8L1198 214.5L1200 215.1L1202 215.5L1204 215.3L1206 215.3L1208 214.8L1210 215L1212 215.5L1214 215.2L1216 215.5L1218 214.6L1220 214.7L1222 214.8L1224 215L1226 214.8L1228 214.8L1230 214.9L1232 215.2L1234 215.4L1236 215.3L1238 214.9L1240 214.6L1242 215.2L1244 215.2L1246 215L1248 214.9L1250 215.4L1252 215L1254 215.4L1256 215.1L1258 215.2L1260 215.1L1262 215.2L1264 214.9L1266 215.3L1268 214.7L1270 215L1272 214.4L1274 215.3L1276 214.6L1278 214.9L1280 215.4L1282 215.5L1284 214.6L1286 215.1L1288 214.8L1290 216.9L1292 215.3L1294 215.7L1296 214.9L1298 215.3L1300 215.2L1302 214.5L1304 215.5L1306 215.2L1308 214.9L1310 215L1312 215.4L1314 215.2L1316 214.6L1318 215L1320 215.1L1322 214.8L1324 214.6L1326 215.3L1328 214.9L1330 214.5L1332 214.6L1334 214.7L1336 214.8L1338 214.9L1340 214.7L1342 215.3L1344 214.9L1346 215.4L1348 214.8L1350 215L1352 214.9L1354 215L1356 215.5L1358 215.6L1360 215.1L1362 215.2L1364 215L1366 214.9L1368 214.8L1370 215.5L1372 214.8L1374 215L1376 214.8L1378 214.9L1380 214.8L1382 215.1L1384 214.9L1386 215.2L1388 214.6L1390 214.9L1392 215.4L1394 215.3L1396 215.3L1398 214.7L1400 213.2L1402 215.5L1404 214.9L1406 214.5L1408 214.9L1410 215.2L1412 214.8L1414 215.2L1416 214.5L1418 215.1L1420 214.5L1422 215L1424 214.9L1426 214.7L1428 214.7L1430 214.9L1432 215.1L1434 214.8L1436 215.1L1438 215L1440 214.6L1442 214.9L1444 215.6L1446 215.4L1448 214.8L1450 214.6L1452 213.6L1454 215L1456 215.3L1458 214.9L1460 215.4L1462 214.5L1464 214L1466 214.9L1468 214.8L1470 215.5L1472 214.6L1474 215.5L1476 214.5L1478 214.8L1480 215.6L1482 215L1484 215.1L1486 214.9L1488 215.1L1490 214.7L1492 215.1L1494 215L1496 214.9L1498 215.2L1500 215.5L1502 214.7L1504 214.9L1506 215.4L1508 215.5L1510 214.9L1512 215.2L1514 215.2L1516 215.6L1518 215L1520 215L1522 215.1L1524 214.8L1526 215L1528 214.8L1530 214.9L1532 214.9L1534 214.7L1536 215.3L1538 215.1L1540 215.4L1542 214.5L1544 214.8L1546 215L1548 216.6L1550 215L1552 214.6L1554 215.3L1556 214.8L1558 215.4L1560 215L1562 214.9L1564 214.2L1566 215.2L1568 215L1570 215L1572 215L1574 215.3L1576 214.5L1578 214.9L1580 214.6L1582 214.8L1584 215.4L1586 216.2L1588 215L1590 215.3L1592 214.9L1594 214.6L1596 215.4L1598 215.2L1600 215.9L1602 215.5L1604 215.2L1606 214.2L1608 214.9L1610 215.4L1612 214.7L1614 214.5L1616 215.1L1618 213.3L1620 215.4L1622 215.5L1624 214.7L1626 213.7L1628 215.2L1630 214.7L1632 214.6L1634 214.8L1636 215.1L1638 215L1640 215.2L1642 215.1L1644 214.3L1646 215.2L1648 215L1650 215.1L1652 214.1L1654 215.4L1656 214.8L1658 215L1660 214.6L1662 214.9L1664 214.9L1666 215L1668 215.1L1670 214.9L1672 215.3L1674 215L1676 214.3L1678 215L1680 214.5L1682 214.6L1684 214.5L1686 214.7L1688 215.2L1690 214.5L1692 214.5L1694 214.9L1696 215.1L1698 214.8L1700 215.1L1702 215.3L1704 214.7L1706 215.1L1708 215.3L1710 215.8L1712 215L1714 214.7L1716 214.9L1718 214.8L1720 215.6L1722 214.6L1724 215.1L1726 213.4L1728 215.8L1730 215.1L1732 215L1734 216.2L1736 215.1L1738 215.1L1740 214.8L1742 214.8L1744 214.9L1746 215L1748 215.8L1750 215.3L1752 215.3L1754 215L1756 215.2L1758 214.5L1760 215.1L1762 215L1764 214.8L1766 215L1768 215L1770 215L1772 215.1L1774 214.5L1776 215.1L1778 214.3L1780 215L1782 214.8L1784 215.1L1786 215L1788 215.4L1790 215L1792 215L1794 214.7L1796 214.8L1798 214.4L1800 215L1802 214.6L1804 215.1L1806 215.1L1808 215.5L1810 215.1L1812 215.1L1814 215.5L1816 215.1L1818 215.4L1820 215.4L1822 215.5L1824 215.1L1826 215.2L1828 214.9L1830 215.4L1832 214.6L1834 214.8L1836 215L1838 215L1840 215.1L1842 215.1L1844 215L1846 216.5L1848 214.6L1850 215.4L1852 214.8L1854 214.5L1856 214.9L1858 215.1L1860 214.6L1862 214.8L1864 214.6L1866 215.1L1868 215.5L1870 215.5L1872 215.2L1874 215L1876 214.6L1878 214.7L1880 215.1L1882 215.4L1884 215.1L1886 214.9L1888 214.3L1890 214.7L1892 215L1894 215.2L1896 214.8L1898 215.1L1900 214.8L1902 215L1904 214.9L1906 214.9L1908 215.3L1910 215L1912 215.1L1914 215.3L1916 214.8L1918 215.4L1920 215.1L1922 215L1924 215.5L1926 214.9L1928 215.3L1930 214.9L1932 215L1934 214.6L1936 214.9L1938 214.8L1940 215.2L1942 214.3L1944 215.1L1946 215.2L1948 214.7L1950 215.1L1952 215.1L1954 214.7L1956 215.3L1958 214.9L1960 215.3L1962 214.7L1964 214.6L1966 215L1968 214.9L1970 215.3L1972 214.3L1974 215.3L1976 214.8L1978 215.4L1980 215.2L1982 215.1L1984 214.9L1986 215.3L1988 215.5L1990 215.6L1992 214.9L1994 215.1L1996 214.9L1998 215L2000 215L2002 215.5L2004 215.4L2006 215L2008 214.7L2010 215.2L2012 215.1L2014 215.3L2016 215.2L2018 215.4L2020 214.4L2022 215.1L2024 214.9L2026 214.8L2028 215.3L2030 215.2L2032 215.2L2034 214.8L2036 215.4L2038 215.4L2040 214.6L2042 215L2044 215.3L2046 215L2048 215.1L2050 215.6L2052 214.8L2054 215.6L2056 215.4L2058 214.8L2060 213.7L2062 215L2064 214.7L2066 214.9L2068 215.8L2070 214.6L2072 214.8L2074 215.1L2076 215.2L2078 215.3L2080 214.9L2082 215L2084 215L2086 214.8L2088 215.4L2090 215L2092 214.4L2094 215.3L2096 215L2098 215.1L2100 214.4L2102 215.5L2104 215.4L2106 215.1L2108 214.7L2110 214.8L2112 214.9L2114 214.9L2116 215L2118 215.4L2120 215.1L2122 214.9L2124 214L2126 215.2L2128 215L2130 215.2L2132 213.5L2134 215L2136 214.9L2138 215.6L2140 215.3L2142 213.3L2144 214.6L2146 214.7L2148 215.1L2150 215.4L2152 215L2154 215.5L2156 215.4L2158 214.9L2160 215.2L2162 214.8L2164 215.4L2166 215L2168 214.9L2170 216.8L2172 214.8L2174 215.4L2176 214.8L2178 214.8L2180 214.8L2182 215L2184 214.9L2186 215.2L2188 215.2L2190 214.9L2192 215.6L2194 215.1L2196 214.6L2198 215.2L2200 215.1L2202 214.6L2204 215L2206 215.2L2208 214.4L2210 214.7L2212 214.6L2214 215.1L2216 216.8L2218 214.9L2220 215.1L2222 215L2224 215L2226 215.2L2228 214.9L2230 215.1L2232 213.2L2234 215.2L2236 215.5L2238 215.5L2240 214.8L2242 214.3L2244 215L2246 214.9L2248 214.9L2250 215.1L2252 215.1L2254 215L2256 214.5L2258 214.6L2260 215.1L2262 215.2L2264 215.4L2266 215.1L2268 215L2270 214.9L2272 215.3L2274 214.9L2276 215.4L2278 215.8L2280 214.7L2282 215L2284 214.8L2286 215.1L2288 215L2290 215.2L2292 215.2L2294 215.1L2296 215L2298 214.7L2300 215.4L2302 214.6L2304 214.8L2306 214.8L2308 215.2L2310 215.4L2312 215.2L2314 214.7L2316 214.7L2318 216.5L2320 214.8L2322 215.2L2324 214.8L2326 215.3L2328 215.1L2330 215.1L2332 214.8L2334 215.5L2336 215L2338 215L2340 215L2342 214.6L2344 214.7L2346 215L2348 215.1L2350 215.1L2352 216.5L2354 214.9L2356 214.9L2358 215L2360 214.2L2362 215L2364 214.9L2366 215.7L2368 215.1L2370 214.9L2372 214.8L2374 215.2L2376 215.4L2378 213L2380 214.8L2382 215L2384 215.1L2386 215L2388 214.8L2390 215.3L2392 215.2L2394 214.8L2396 214.9L2398 215.2L2400 215.5L2402 214.9L2404 215.3L2406 215.1L2408 214.6L2410 215L2412 214.9L2414 214.6L2416 214.9L2418 215.1L2420 214.5L2422 214.8L2424 214.6L2426 213.9L2428 215.3L2430 215.2L2432 215.5L2434 214.7L2436 214.4L2438 214.8L2440 214.5L2442 215.1L2444 215.1L2446 214.9L2448 215.1L2450 214.3L2452 214.7L2454 215.5L2456 215.2L2458 214.9L2460 215.3L2462 214.8L2464 215.1L2466 215.4L2468 215.3L2470 214.9L2472 214.8L2474 215.3" fill="none" stroke="#1ecdd2" stroke-width="7.6" stroke-linejoin="bevel" /><path d="M5.3 218.4v1M14.6 218.7v0.6M20.7 216.6v0.6M25.2 211.7v-0.6M29.5 218.5v1.4M31.3 211.6v-1M33.3 218.6v1.4M38.6 211.6v-1M40.7 218v1.4M42.7 218.1v1M44.9 217.9v1.4M48.1 218.7v2.8M50.5 218.3v1M53.1 219.9v2M57.2 212.8v-2.8M58.1 211.7v-1M65.5 212v-2M68.6 217.9v2.8M75 218.4v1M80.2 217.8v1M89.4 211.7v-1M90.8 218.2v2.8M93.5 218.5v2M94.2 212.5v-2M103 212.1v-2M111.3 211.4v-0.6M119.4 218.3v0.6M121.3 218.8v0.6M126.8 218.5v2M130.9 210.4v-0.6M134.3 218.4v0.6M136 218.3v2M138.6 211.6v-2.8M140.2 217.7v1M150.8 218.2v0.6M158.7 219v2M163.5 218.1v1.4M165.3 211.7v-2M167.3 211.9v-2M169 212.8v-2M172.8 211.9v-1.4M176.5 212v-0.6M180.4 211.9v-1M185.5 211.7v-1.4M190.9 211.8v-2.8M194.9 218.1v2.8M201.1 211.1v-1M202.4 211.5v-2.8M214.4 218.2v2.8M217.3 211.5v-1M219.1 218.7v1.4M229.1 212.4v-0.6M230.2 212.2v-1.4M232.2 218.6v0.6M235.4 211.4v-0.6M238.8 217.6v0.6M243.1 211.6v-1.4M245.2 212v-0.6M250.9 218.8v1.4M253.4 217.7v2M255.1 211.4v-1M256.1 211.7v-2.8M259.1 212.3v-2.8M261.4 212.4v-2.8M266.5 218.1v2M273.5 218.5v2.8M291.3 218.9v1M293.3 218.3v0.6M295.2 211.8v-1.4M314.8 218.7v2M321 218.2v1.4M328.7 212.1v-2M330.4 212v-0.6M335.3 218.4v2.8M336.7 211.4v-2M344.6 218.1v0.6M347 218.4v1M361 218.3v0.6M363.2 218.5v1M364.4 212.3v-1M369 211.6v-0.6M371.1 211.7v-1M379.5 211.6v-2.8M381.3 218.6v1.4M389.3 218.5v2.8M391.1 211.8v-2.8M393.3 211.8v-0.6M398.9 218.2v1M403 218.2v1.4M406.5 211.8v-1M416.3 218.2v0.6M435.3 218.3v0.6M443.2 211.3v-2.8M444.5 211.8v-0.6M446.6 218.5v0.6M452.7 212v-2M454.5 211.9v-2.8M461.1 211.4v-2.8M464.7 218.1v2.8M466.8 211.5v-1M486.4 212v-1.4M488.4 212v-1.4M491.4 217.9v2.8M492.6 218.1v1.4M498.9 212.1v-1M501.1 211.4v-1.4M508.1 212.3v-1.4M510.7 216.8v1M516.5 217.9v1.4M519.3 218.5v1M520.6 211.7v-1.4M522.1 218.4v0.6M525.1 218.6v2M532.4 211.2v-1M534.3 218.7v2.8M539.5 211.8v-0.6M540.9 211.6v-1M543.2 218.1v0.6M544.8 211.6v-0.6M547 212.1v-1M552.1 218.5v1M557 218v2.8M558.5 211.7v-0.6M562.8 211.5v-2.8M576.3 211.7v-2.8M580.3 218.9v1.4M584.8 211.9v-2.8M591.1 218.4v1M594.3 211.9v-0.6M598.9 216.8v1M602.9 217.8v1M605.2 211.4v-0.6M614.1 218.2v2M618.1 218.6v1.4M620.1 218.2v0.6M626.3 211.1v-2.8M628.2 217.9v1M630.6 213.4v-2.8M636.2 211.6v-0.6M640.5 217.6v1.4M643 211.5v-2.8M645.1 218.9v0.6M653.4 218.1v2.8M657.4 218.2v2.8M658.4 218.2v0.6M660.1 218.3v2.8M662.2 211.5v-2M668.6 218.1v2M672.9 212v-2.8M677.3 211.1v-0.6M678.9 218.5v1.4M685.2 211.4v-0.6M690.6 212.1v-0.6M694.3 211.8v-2.8M697 218.9v1.4M698.9 218.5v2M700.3 211.7v-2.8M705.3 218.4v2M711.3 211.9v-1M713.4 211.8v-0.6M715.3 212v-2.8M718.8 218.2v2.8M723.1 211.4v-2M724.8 217.8v1.4M726.1 218.5v2M736.9 212v-2.8M738 218.3v1.4M746.6 218.5v0.6M750.3 218.3v1.4M752.7 211.9v-1.4M757 218.2v1M758.6 218.2v2.8M762.3 218.1v1.4M766.6 212.1v-1M768.5 218.1v1.4M773 211.5v-1M775.3 218.4v1M780.3 212v-2M782.9 218.4v2M785.1 211.5v-1.4M790.3 218.3v1M792.7 212v-1M799 211.6v-0.6M802.9 211.8v-2M805 218.2v0.6M816.5 211.6v-0.6M823.1 218.1v2.8M826.4 217.9v0.6M830.4 211.7v-0.6M840.3 218.3v2M842.4 217.8v0.6M846.4 211.5v-0.6M849.1 217.4v2M850.2 211.7v-1M858.1 211.7v-2.8M866.2 212.3v-2M868.3 211.7v-2.8M882.8 218.4v2.8M895.4 211.4v-0.6M902.9 211.9v-2.8M905.3 211.4v-2.8M911.4 218.3v1.4M912.6 218.1v2.8M918.2 218.7v2.8M927 211.4v-0.6M930.7 217.9v1M933.4 217.9v1M934.4 211.9v-1M946.5 218.7v2M949 211.8v-0.6M950.7 211.5v-1M954.3 212.7v-1M957.4 211.4v-1.4M958.1 212.1v-1.4M962.3 211.6v-2M964.9 218.5v2M972.2 211.6v-2M975.1 211.3v-1.4M978.2 211.7v-1M980.2 211.8v-1.4M988.2 211.4v-2.8M990.4 212v-1.4M992.9 211.6v-2.8M994.3 211.8v-2M999.2 212v-2M1000.1 211.3v-2M1003.1 218.5v1.4M1012.5 211.8v-0.6M1017.4 211.1v-0.6M1018 218.3v1.4M1022.9 211.5v-0.6M1028.7 211.3v-2M1037 211.6v-1M1038.5 212.1v-0.6M1041.1 217.8v2.8M1043.3 211.8v-2.8M1054.8 211.7v-0.6M1056.7 218.4v1M1065.5 218.2v2M1068.9 211.7v-0.6M1075.2 211.9v-1M1082 211.4v-0.6M1085.3 218.6v1M1087.1 212v-2M1091.4 211.5v-2M1092.1 218v1M1102.6 220v1M1106.8 211.4v-1.4M1120.5 218.3v0.6M1122.3 218.4v1.4M1126.8 218.4v2.8M1136.6 218.6v2M1145.5 211.6v-2.8M1152.1 211.4v-1M1155.3 212.3v-1.4M1160.5 218.7v0.6M1164.7 213.4v-0.6M1166.5 211.8v-0.6M1168.2 218.5v1M1171.3 218.5v0.6M1174.8 218.2v2M1180.8 218v1.4M1184.6 211.7v-1.4M1187.1 218.4v1.4M1191.2 218.6v0.6M1192.4 218.7v2M1211.1 218.3v2M1229.5 211.5v-2.8M1237.4 218.6v0.6M1239.4 218.2v1.4M1243 211.9v-2.8M1248.5 218.2v0.6M1263 211.9v-2.8M1266.2 212v-1M1281 218.7v1.4M1283.3 212.2v-0.6M1286 211.8v-1.4M1290 220.2v0.6M1300.5 218.5v2.8M1303.3 211.2v-0.6M1314.7 218.5v1.4M1320.4 211.8v-1.4M1327.5 212v-1M1330.4 217.8v0.6M1334.1 211.4v-2.8M1338.4 218.2v1M1343.4 218.6v1.4M1347 218.7v0.6M1348.3 218.1v2M1351.3 211.7v-0.6M1353.5 211.6v-2M1357.4 218.8v1M1360 211.8v-2.8M1377.3 211.5v-0.6M1378.7 211.6v-2.8M1385.4 218.2v2M1392.6 212.1v-1M1394 212v-1.4M1396.8 212v-0.6M1405.1 218.2v0.6M1406.2 217.8v2M1426.2 211.4v-1.4M1428.8 218v2M1433.4 211.8v-0.6M1434.3 218.1v2.8M1443.3 211.6v-2M1448.8 218.1v0.6M1462.1 211.2v-2M1468.4 211.5v-1.4M1471.3 218.8v2.8M1476.7 217.8v1M1479.1 218.1v0.6M1480.9 218.9v1M1482.6 211.7v-1.4M1484.3 218.4v1.4M1491.4 218v1.4M1494.8 211.7v-2.8M1498.6 211.9v-2.8M1512.4 218.5v2.8M1519.3 218.3v1.4M1520.5 211.7v-1.4M1522.3 211.8v-2M1524.3 218.1v1M1526.7 218.3v2.8M1544.6 218.1v0.6M1556.4 218.1v2M1558.5 218.7v2.8M1560.9 218.3v2.8M1563.4 218.2v2M1565.3 217.5v0.6M1566.5 211.9v-0.6M1568.3 211.7v-0.6M1571.5 211.7v-2M1573.3 211.7v-2.8M1576.9 211.2v-2M1579.1 211.6v-1.4M1582.3 211.5v-2.8M1586.1 212.9v-2M1589.4 211.7v-1M1590.3 218.6v2.8M1594.5 217.9v1.4M1596.5 218.7v2.8M1604.5 211.9v-1.4M1614.1 211.2v-1.4M1619.1 216.6v2.8M1622.3 212.2v-0.6M1626 210.4v-2M1629.3 211.9v-2M1636.7 218.4v2M1638.9 211.7v-1M1641.3 218.5v2M1642.9 218.4v2M1644.3 211v-2M1647.4 218.5v1.4M1648.9 218.3v0.6M1650.6 211.8v-1.4M1654.5 212.1v-1.4M1658.2 218.3v2M1663 211.6v-0.6M1664.5 218.2v0.6M1668.9 211.8v-1.4M1672.5 212v-1M1676.7 211v-1M1684.8 211.2v-2M1697.1 211.8v-0.6M1701 218.4v2.8M1707 218.4v0.6M1708.6 212v-2.8M1710.7 219.1v1.4M1714.6 218v2M1718.2 211.5v-2M1720.7 212.3v-2M1722.7 217.9v0.6M1731 211.8v-2.8M1736.7 218.4v1.4M1738.4 218.4v0.6M1744.1 218.2v0.6M1752.5 218.6v0.6M1759 217.8v0.6M1760.7 211.8v-2M1769.1 211.7v-1M1770.4 211.7v-2.8M1776.3 218.4v1.4M1780.6 218.3v0.6M1785.2 211.8v-2M1788.2 212.1v-1M1793.1 211.7v-2M1798.9 211.1v-1M1801.4 218.3v1.4M1811.1 211.8v-0.6M1816.6 218.4v1.4M1818.7 218.7v1.4M1821.2 212.1v-2M1824.3 218.4v2M1827.4 211.9v-1M1831 212.1v-1M1832 211.3v-1.4M1834.8 218.1v2.8M1836.4 218.3v1.4M1840.3 211.8v-1.4M1848.2 211.3v-2M1856.2 218.2v2M1860.5 211.3v-1.4M1863.1 211.5v-2.8M1868.5 212.2v-1.4M1870.7 218.8v2M1874.8 218.3v1M1879.3 218v2M1880.5 218.4v1.4M1883.1 218.7v2.8M1892.8 218.3v2.8M1902.8 211.7v-1.4M1906.4 218.2v1M1908.8 212v-2.8M1911 211.7v-1M1912.6 218.4v1.4M1916.5 211.5v-2.8M1920.8 218.4v0.6M1926.6 218.2v1M1935.4 211.3v-1.4M1938.3 218.1v1M1941.1 211.9v-1.4M1943.5 211v-2.8M1944.3 211.8v-2M1946.4 211.9v-1.4M1950.1 211.8v-2.8M1956.3 218.6v2M1959.1 211.6v-1M1962.9 211.4v-0.6M1964.3 217.9v1M1968.7 211.6v-2.8M1970.7 212v-1M1972.4 211v-0.6M1974.2 212v-2M1979.3 212.1v-1M1983.1 218.4v1M1986.3 212v-2M1991.3 218.9v1.4M1995.1 211.8v-2M1996.8 211.6v-2.8M2000.4 218.3v1.4M2002.6 218.8v2M2005 218.7v2.8M2006.7 211.7v-2.8M2010.9 211.9v-0.6M2012.1 218.4v2M2016.6 218.5v0.6M2027.2 218.1v1.4M2028.9 218.6v2.8M2034.2 218.1v1M2039.4 218.7v2.8M2040.9 217.9v0.6M2042.6 218.3v1M2048.8 211.8v-1.4M2052.2 211.5v-2M2063.2 211.7v-0.6M2070.9 217.9v2.8M2072.5 211.5v-2M2074.2 211.8v-0.6M2079.1 212v-2.8M2081.3 218.2v1.4M2082.7 218.3v1M2085.4 211.7v-2M2086.7 218.1v2.8M2091.4 218.3v1M2092.3 217.7v2.8M2095.5 212v-2.8M2096.4 211.7v-1.4M2100.5 217.7v0.6M2102.7 218.8v0.6M2105.4 212.1v-0.6M2106.4 218.4v1.4M2110.2 211.5v-0.6M2117.3 218.3v1M2126.7 211.9v-2M2133.2 216.8v2M2139.1 212.3v-2.8M2141.4 212v-1M2143.5 210v-1.4M2150.9 212.1v-1.4M2159 218.2v1.4M2162.3 211.5v-2M2164.5 212.1v-2.8M2166.6 211.7v-0.6M2175 212.1v-2.8M2180.1 211.5v-1M2182.9 211.7v-2.8M2184.9 211.6v-2.8M2186.2 218.5v1.4M2190.3 211.6v-2M2192.4 212.3v-2M2196.5 211.3v-2M2200.1 211.8v-2M2202.9 217.9v0.6M2204.4 211.7v-1M2211.1 211.4v-0.6M2222.9 211.7v-0.6M2228.4 211.6v-1.4M2234.7 218.5v2M2245.2 218.3v2M2247 211.6v-1.4M2250.7 211.8v-1M2254.1 218.3v1M2256.6 217.8v0.6M2262.8 218.5v0.6M2264.4 212.1v-2.8M2266.1 211.8v-2.8M2268.6 218.3v2M2272.6 212v-0.6M2276.6 212.1v-2M2280.4 218v1M2283.3 218.3v2.8M2292.6 218.5v1M2294.5 211.8v-0.6M2298.2 211.4v-1M2304.8 211.5v-1.4M2306.7 218.1v1.4M2320.4 218.1v1.4M2323.2 211.9v-1M2325.2 218.1v1.4M2332.5 218.1v2.8M2336.4 211.7v-1.4M2346.2 218.3v2M2349.3 218.4v2M2352.9 213.2v-2.8M2356.6 211.6v-0.6M2359.2 218.3v2.8M2366.9 219v2M2376.4 212.1v-1M2382.8 218.3v1M2385.5 218.4v1.4M2394.8 218.1v1.4M2396.8 218.2v1.4M2399.1 218.5v1M2401.4 218.8v1.4M2402.1 211.6v-0.6M2409 217.9v1.4M2413.2 218.2v2.8M2416.5 218.2v0.6M2421.4 217.8v1M2432.9 218.8v2M2436.2 211.1v-1M2438.6 211.5v-2M2444.6 211.8v-1.4M2446.3 211.6v-1M2452.5 218v2.8M2458.7 218.2v2M2462.6 218.1v1M2465 218.4v2M2466.7 218.7v1.4M2470.7 211.6v-2M2473 211.5v-1" stroke="#1ecdd2" stroke-width="1.1" fill="none"/><path d="M4 639.1L6 638.8L8 639L10 638.8L12 638.5L14 638.7L16 639.1L18 638.9L20 638.8L22 638.8L24 638.7L26 639.1L28 638.7L30 639L32 638.5L34 638.7L36 639L38 638.9L40 638.9L42 638.4L44 639.1L46 639L48 638.4L50 639.4L52 638.7L54 638.7L56 639.2L58 638.7L60 638.7L62 637.2L64 638.1L66 638.6L68 639.1L70 637.3L72 639.1L74 639L76 638.5L78 638.4L80 640.3L82 638.4L84 639L86 638.8L88 638.6L90 638.5L92 638.5L94 638.3L96 639.2L98 638.8L100 638.9L102 639L104 638.8L106 639L108 638.9L110 639.1L112 639L114 638.2L116 638.8L118 638.8L120 639.1L122 639.1L124 638.5L126 638.9L128 639.1L130 638.7L132 638.4L134 639L136 638.8L138 639.2L140 638.9L142 639.4L144 638.4L146 638.5L148 638.6L150 638.6L152 639.1L154 638.8L156 638.8L158 638.6L160 638.9L162 638.8L164 638.5L166 639.2L168 638.6L170 638.3L172 638.9L174 638.8L176 638.6L178 638.4L180 638.3L182 638.6L184 638.7L186 638.5L188 638.7L190 638.9L192 639L194 639L196 639L198 639L200 639L202 638.7L204 638.6L206 638.7L208 638.9L210 639.2L212 638.6L214 638.7L216 638.8L218 638.6L220 638.5L222 638.6L224 639.1L226 638.8L228 638.9L230 638.8L232 639.4L234 638.7L236 638.7L238 639.2L240 638.5L242 638.8L244 638.2L246 638.9L248 638.4L250 638.9L252 638.9L254 638.6L256 638.9L258 638.5L260 639L262 638.8L264 639.2L266 638.5L268 639.2L270 638.8L272 638.7L274 638.5L276 638.5L278 638.9L280 638.5L282 638.9L284 638.8L286 638.8L288 638.6L290 638.4L292 639L294 638.7L296 638.3L298 638.3L300 639.1L302 639.4L304 639L306 639L308 638.5L310 638.3L312 638.4L314 638.7L316 639.5L318 639.1L320 638.7L322 638.9L324 639.1L326 639L328 638.4L330 638.1L332 637.1L334 638.1L336 638.3L338 638.8L340 638.9L342 638.9L344 639.1L346 638.8L348 639.3L350 638.9L352 639.1L354 639L356 639L358 638.7L360 639.2L362 639L364 638.9L366 638.7L368 638.5L370 638.9L372 639L374 639L376 637.3L378 638.6L380 638.7L382 638.4L384 638.2L386 638.3L388 638.8L390 638.5L392 638.5L394 639L396 639.1L398 638.4L400 638.5L402 638.3L404 639L406 638.4L408 638L410 638.7L412 638.7L414 639L416 638.8L418 638.6L420 639.1L422 639.1L424 639.2L426 639L428 640.1L430 639.2L432 638.8L434 638.7L436 639L438 639.4L440 639.2L442 639L444 639L446 638.9L448 639L450 638.8L452 638.5L454 638.5L456 639.1L458 638.6L460 638.8L462 639.6L464 638.7L466 638.8L468 638.8L470 638.9L472 638.8L474 638.6L476 639.6L478 639L480 639.1L482 637L484 638.5L486 639L488 639.2L490 639.2L492 639.7L494 639.1L496 639.1L498 638.8L500 639.2L502 637.5L504 638.7L506 639.1L508 638.9L510 638.9L512 638.6L514 638.4L516 638.8L518 638.8L520 638.8L522 639.3L524 638.7L526 638.6L528 638.9L530 638.8L532 638.5L534 638.3L536 639L538 638.5L540 638.8L542 638.9L544 638.7L546 639.2L548 639.2L550 638.4L552 638.8L554 638.9L556 638.9L558 638.8L560 637.4L562 638.7L564 638.5L566 639.2L568 638.9L570 638.9L572 639L574 638.9L576 638.4L578 638.8L580 638.3L582 639.1L584 638.9L586 638.4L588 639L590 637.8L592 638.3L594 639L596 638.2L598 638.7L600 638.9L602 639L604 638.3L606 638.6L608 638.9L610 639.4L612 638.8L614 638.2L616 638.3L618 639.1L620 638.5L622 638.8L624 638.6L626 639.1L628 638.9L630 638.3L632 639L634 639.1L636 638.4L638 638.6L640 638.8L642 638.8L644 638.7L646 638.4L648 638.8L650 639L652 639.4L654 639.3L656 639.4L658 639L660 638.9L662 639L664 638.7L666 639.2L668 639L670 639.1L672 638.7L674 638.9L676 638.5L678 638.5L680 639L682 639.4L684 638.8L686 639.1L688 638.9L690 638.7L692 638.8L694 639.1L696 638.3L698 639.1L700 638.3L702 639L704 639.1L706 638.5L708 638.6L710 638.1L712 638.7L714 639L716 639L718 638.6L720 638.9L722 639L724 638.5L726 638.9L728 638.6L730 639.1L732 639.2L734 638.6L736 638.7L738 638.8L740 638.9L742 638.6L744 638.5L746 638.7L748 638.4L750 638.6L752 638.9L754 638.6L756 638.9L758 638.5L760 638.8L762 638.8L764 638.8L766 638.8L768 638L770 638.6L772 638.7L774 638.5L776 638.9L778 638.4L780 638.4L782 638.3L784 638.6L786 638.8L788 639L790 638.7L792 638.9L794 639L796 638.7L798 638.6L800 638.8L802 640.4L804 639.1L806 638.9L808 638.7L810 639.1L812 639L814 638.9L816 638.7L818 638.9L820 638.3L822 638.8L824 638.9L826 638.5L828 638.7L830 638.5L832 639.1L834 639.4L836 638.9L838 638.6L840 638.8L842 639.2L844 638.1L846 639.1L848 638.7L850 637.1L852 639L854 638.7L856 638.9L858 639L860 638.6L862 639.1L864 639L866 638.6L868 639.2L870 638.6L872 638.1L874 638.8L876 638.9L878 638.5L880 638.5L882 638.9L884 639.1L886 638.8L888 638.9L890 638.6L892 637.5L894 638.4L896 638.9L898 638.6L900 638.6L902 639L904 639L906 638.6L908 638.5L910 639L912 638.8L914 638.8L916 638.8L918 640.1L920 638.7L922 638.7L924 638.7L926 639.2L928 638.7L930 639.4L932 638.7L934 640.5L936 639.2L938 638.7L940 638.8L942 638.6L944 638.7L946 638.6L948 638.5L950 638.9L952 638.5L954 638.2L956 638.8L958 639.2L960 638.4L962 639.4L964 639.6L966 638.4L968 637.3L970 638.7L972 638.4L974 639.4L976 638.5L978 638.6L980 638.9L982 638.8L984 638.1L986 638.6L988 639.1L990 639.3L992 638.8L994 639.2L996 639L998 638.8L1000 639L1002 639.1L1004 638.3L1006 638.9L1008 638.9L1010 639.1L1012 638.6L1014 639.4L1016 638.7L1018 638.5L1020 638.9L1022 638.4L1024 639.3L1026 638.8L1028 639.1L1030 638.9L1032 639.2L1034 637.7L1036 638.6L1038 638.7L1040 639.1L1042 638.1L1044 639.4L1046 638.2L1048 638.2L1050 638.8L1052 638.7L1054 638.8L1056 638.8L1058 639.1L1060 638.9L1062 638.6L1064 638.9L1066 638.6L1068 638.7L1070 637.7L1072 638.7L1074 638.4L1076 638.7L1078 638.9L1080 639.2L1082 638.9L1084 639L1086 638.6L1088 638.4L1090 638.8L1092 638.9L1094 638.6L1096 638.8L1098 638.7L1100 638.9L1102 638.7L1104 638.8L1106 638.9L1108 639L1110 638.6L1112 639.2L1114 638.7L1116 639L1118 638.3L1120 638.5L1122 638.3L1124 639.2L1126 638.9L1128 638.4L1130 638.9L1132 638.9L1134 638.6L1136 639.1L1138 638.4L1140 638.6L1142 638.5L1144 638.9L1146 639.1L1148 638.6L1150 639.2L1152 638.5L1154 639.1L1156 638.9L1158 638.5L1160 638.9L1162 638.4L1164 639.2L1166 638.8L1168 639.3L1170 638.6L1172 639.4L1174 638.9L1176 639.1L1178 638.4L1180 639.2L1182 638.8L1184 639L1186 638.9L1188 638.7L1190 638.9L1192 638.9L1194 638.6L1196 639.1L1198 638.8L1200 638.7L1202 638.6L1204 638.4L1206 639.1L1208 638.5L1210 638.6L1212 638.7L1214 638.6L1216 638.3L1218 638.5L1220 639.2L1222 638.5L1224 637.3L1226 639.4L1228 638.8L1230 639L1232 639L1234 638.7L1236 638.7L1238 638.9L1240 638.9L1242 639L1244 638.5L1246 638.8L1248 638.7L1250 638.9L1252 638.5L1254 639.2L1256 639.1L1258 638.9L1260 638.8L1262 639.1L1264 638.6L1266 638.8L1268 639.3L1270 638.8L1272 639.2L1274 638.6L1276 638.7L1278 638.5L1280 638.4L1282 638.5L1284 638.9L1286 639.2L1288 639.2L1290 638.6L1292 638.8L1294 638.5L1296 639.2L1298 638.5L1300 639.1L1302 638.5L1304 639.1L1306 639L1308 638.9L1310 639.4L1312 638.6L1314 638.7L1316 639L1318 639L1320 638.5L1322 638.8L1324 639L1326 638.4L1328 637.5L1330 638.8L1332 639.3L1334 638L1336 639.3L1338 638.9L1340 639.2L1342 638.5L1344 638.9L1346 638.9L1348 638.9L1350 639.1L1352 638.7L1354 638.6L1356 639L1358 638.7L1360 639L1362 638.7L1364 639.3L1366 638.7L1368 639L1370 639L1372 640L1374 639.3L1376 639.3L1378 639L1380 639.1L1382 638.8L1384 638.9L1386 639.3L1388 638.5L1390 638.4L1392 638.8L1394 638.7L1396 639.1L1398 639L1400 638.5L1402 638.7L1404 640.7L1406 638.8L1408 638.6L1410 639.1L1412 639.1L1414 638.6L1416 638.7L1418 638.8L1420 639.1L1422 638.8L1424 639.3L1426 638.4L1428 638.7L1430 638.8L1432 638.5L1434 639L1436 638.7L1438 638.7L1440 639.1L1442 638.5L1444 638.3L1446 638.9L1448 638.8L1450 638.4L1452 638.5L1454 639.2L1456 638.6L1458 639L1460 638.9L1462 639.2L1464 640.1L1466 638.5L1468 639L1470 638.9L1472 638.8L1474 638.7L1476 638.8L1478 638.8L1480 638.1L1482 638.8L1484 638.7L1486 639L1488 639L1490 639.1L1492 638.8L1494 638.5L1496 640.4L1498 639.1L1500 639.1L1502 638.5L1504 638.8L1506 638.8L1508 639L1510 638.7L1512 639L1514 638.4L1516 638.7L1518 639L1520 638.7L1522 637.5L1524 638.6L1526 639.2L1528 638.9L1530 638.6L1532 639.2L1534 638.7L1536 639.3L1538 638.8L1540 638.7L1542 638.8L1544 638.2L1546 638.8L1548 638.5L1550 638.8L1552 638.6L1554 637.9L1556 638.4L1558 639.1L1560 638.5L1562 638.5L1564 637.8L1566 638.1L1568 639.2L1570 639L1572 638.9L1574 638.6L1576 638.8L1578 638.7L1580 638.7L1582 638.9L1584 638.6L1586 639.4L1588 638.4L1590 638.8L1592 638.5L1594 638.7L1596 639.3L1598 638.8L1600 639L1602 638.9L1604 638.7L1606 638.1L1608 639.1L1610 638.9L1612 639.1L1614 638.6L1616 638.5L1618 638.8L1620 638L1622 638.4L1624 638.5L1626 638.7L1628 638.9L1630 638.7L1632 638.9L1634 639.2L1636 639L1638 639L1640 639.1L1642 638.7L1644 638.4L1646 639L1648 638.7L1650 638.7L1652 638.7L1654 638.4L1656 638.6L1658 638.9L1660 638.6L1662 638L1664 638.6L1666 638.8L1668 639L1670 639L1672 639.4L1674 638.9L1676 638.9L1678 639.1L1680 638.9L1682 638.7L1684 639L1686 637.6L1688 638.2L1690 638.6L1692 638.9L1694 638.7L1696 639L1698 638.9L1700 638.9L1702 638.7L1704 638.6L1706 638.5L1708 638.9L1710 639.7L1712 638.8L1714 639.8L1716 638.9L1718 639.4L1720 639.2L1722 638.5L1724 639L1726 638.4L1728 639L1730 638.9L1732 638.7L1734 638.5L1736 638.8L1738 639.1L1740 639.1L1742 638.4L1744 638.6L1746 639.1L1748 639.1L1750 638.3L1752 638.9L1754 639.3L1756 639.1L1758 638.7L1760 638.7L1762 639.1L1764 640.2L1766 638.4L1768 638.4L1770 638.3L1772 639.1L1774 638.9L1776 638.7L1778 637.7L1780 638.7L1782 639L1784 638.9L1786 639.3L1788 639.3L1790 638.4L1792 638.8L1794 638.4L1796 639.5L1798 638.5L1800 638.5L1802 638.7L1804 638.7L1806 638.7L1808 638.3L1810 638.7L1812 639.2L1814 639.4L1816 639.2L1818 638.9L1820 638.6L1822 639L1824 638.5L1826 638.8L1828 638.9L1830 639L1832 638.5L1834 638.4L1836 638.6L1838 638.7L1840 639.2L1842 638.2L1844 638.6L1846 638.7L1848 638.7L1850 637.6L1852 639L1854 638.9L1856 638.6L1858 639L1860 638.6L1862 638.6L1864 638.9L1866 638.4L1868 638L1870 638.2L1872 638.8L1874 638.9L1876 638.3L1878 638.6L1880 638.6L1882 639.1L1884 639.3L1886 638.9L1888 639L1890 639.4L1892 639.1L1894 638.9L1896 638.8L1898 638.7L1900 638.5L1902 640.1L1904 638.9L1906 638.9L1908 639L1910 639.3L1912 639.1L1914 639.1L1916 639L1918 638.8L1920 639.2L1922 638.8L1924 638.6L1926 638.4L1928 639.1L1930 638.9L1932 638.8L1934 638.6L1936 638.7L1938 638.9L1940 637.4L1942 638.9L1944 638.1L1946 638.5L1948 638.7L1950 639.2L1952 638.8L1954 639.1L1956 638.6L1958 638.7L1960 638.8L1962 638.8L1964 638.4L1966 638.9L1968 638.5L1970 638.6L1972 638.3L1974 638.9L1976 639L1978 638.9L1980 639.2L1982 639.4L1984 639.1L1986 638.9L1988 639.1L1990 638.5L1992 639L1994 638.5L1996 638.8L1998 638.7L2000 638.7L2002 638.5L2004 638.7L2006 638.8L2008 638.6L2010 638.7L2012 638.5L2014 638.9L2016 638.9L2018 639.2L2020 638.9L2022 638.5L2024 638.9L2026 638.7L2028 639.2L2030 638.3L2032 639.1L2034 638.7L2036 639.3L2038 638.5L2040 639L2042 638.4L2044 639L2046 638.6L2048 638.9L2050 639L2052 639.1L2054 639.1L2056 638.9L2058 639L2060 638.5L2062 639.1L2064 638.9L2066 638.6L2068 638.4L2070 638.7L2072 638.5L2074 638.3L2076 639L2078 638.7L2080 638.8L2082 638.8L2084 638.9L2086 639.1L2088 638.4L2090 638.7L2092 639.2L2094 638.5L2096 638.8L2098 638.9L2100 638.6L2102 639.4L2104 638.9L2106 639L2108 638.9L2110 638.6L2112 638.7L2114 638.7L2116 639L2118 638.8L2120 638.7L2122 638.6L2124 638.3L2126 638.8L2128 639L2130 638.9L2132 638.8L2134 638.9L2136 639.3L2138 638.4L2140 638.9L2142 638.2L2144 639.3L2146 638.8L2148 638.9L2150 638.5L2152 638.8L2154 638.8L2156 638.6L2158 638.2L2160 638.7L2162 638.7L2164 638.8L2166 638.5L2168 638.7L2170 639L2172 640.8L2174 639.2L2176 638.8L2178 638.9L2180 639.1L2182 638.8L2184 638.5L2186 638.9L2188 639L2190 638.6L2192 638.7L2194 638.1L2196 639.3L2198 639L2200 638.9L2202 639.3L2204 638.5L2206 638.3L2208 638.6L2210 638.9L2212 638.9L2214 638.6L2216 638.6L2218 638.5L2220 638.5L2222 638.8L2224 638.9L2226 638.8L2228 638.2L2230 639.2L2232 639.1L2234 639.4L2236 637L2238 639.1L2240 638.7L2242 638.5L2244 638.9L2246 638.9L2248 639L2250 638.6L2252 638.5L2254 638.4L2256 639L2258 638.9L2260 638.4L2262 638.4L2264 639.1L2266 639.2L2268 639.5L2270 639.1L2272 638.9L2274 638.8L2276 639.1L2278 638.9L2280 639.1L2282 638.5L2284 638.7L2286 638.7L2288 638.8L2290 638.9L2292 638.5L2294 638.8L2296 638.6L2298 638.9L2300 638.3L2302 638.4L2304 639.2L2306 638.7L2308 639.2L2310 639.1L2312 638.7L2314 638.4L2316 638.3L2318 638.8L2320 638.9L2322 638.8L2324 638.5L2326 638.7L2328 639.2L2330 638.3L2332 638.8L2334 638.4L2336 638.9L2338 638.9L2340 638.6L2342 638.9L2344 638.5L2346 638.6L2348 638L2350 637.5L2352 639L2354 639.2L2356 639L2358 638.5L2360 638.8L2362 638.9L2364 638.4L2366 639.3L2368 638.4L2370 638.8L2372 638.4L2374 638.7L2376 638.9L2378 638.7L2380 638.6L2382 638L2384 639L2386 638.7L2388 639L2390 638.9L2392 639.3L2394 639.6L2396 638.8L2398 638.7L2400 638.6L2402 639.1L2404 639L2406 638.7L2408 638.4L2410 638.6L2412 638.8L2414 639.3L2416 639.1L2418 638.4L2420 638.9L2422 638.5L2424 639.5L2426 638.6L2428 639L2430 639.2L2432 639.1L2434 638.4L2436 639L2438 639.2L2440 638.1L2442 638.1L2444 639.2L2446 638.3L2448 639.1L2450 638.7L2452 638.8L2454 638.5L2456 638.6L2458 639.1L2460 638.9L2462 638.6L2464 638.7L2466 638.6L2468 638.8L2470 639L2472 639.2L2474 638.5" fill="none" stroke="#86cc2a" stroke-width="7.4" stroke-linejoin="bevel" /><path d="M6.2 635.6v-1.4M12.3 641.7v2.8M14.3 635.5v-0.6M17.2 642.3v1.4M20.6 635.6v-0.6M24.7 635.5v-1M30.2 635.8v-2M32.9 635.3v-0.6M34.3 641.9v0.6M38.5 635.7v-2M42.6 641.6v1M46.6 642.2v2.8M48.8 635.2v-1.4M50.3 636.2v-2.8M52.5 635.5v-1.4M55.2 635.5v-0.6M60.5 641.9v0.6M67.4 641.8v0.6M74.7 635.8v-1.4M77 641.7v0.6M78.4 641.6v1.4M85.3 642.2v2.8M87.4 642v1M88.5 635.4v-1M94.1 635.1v-1.4M96.4 642.4v2M99.3 635.6v-2.8M102.1 635.8v-2M115.2 635v-2M120.7 635.9v-0.6M123.4 635.9v-2.8M125.2 635.3v-2M136.1 635.6v-0.6M138.3 642.4v1.4M150.8 635.4v-1M153.3 635.9v-1.4M155.1 635.6v-1.4M158 635.4v-1.4M160.4 642.1v2.8M163.4 635.6v-1.4M165.3 635.3v-1.4M166.5 642.4v2.8M171.1 641.5v0.6M172.6 635.7v-1M175 635.6v-1.4M178.4 641.6v2.8M182.9 635.4v-1.4M184.3 635.5v-2.8M186.1 635.3v-1.4M190.9 635.7v-2M192 635.8v-1M198.2 635.8v-1.4M202.9 641.9v2.8M208 635.7v-0.6M212.6 641.8v2.8M218 641.8v0.6M220.2 641.7v2M224.2 642.3v1.4M238.5 636v-2.8M240.8 641.7v0.6M242.2 635.6v-2.8M244.5 641.4v0.6M248.9 641.6v0.6M252.2 635.7v-0.6M257.3 635.7v-1M258.8 635.3v-0.6M261.1 635.8v-2M263.2 635.6v-2.8M267.2 635.3v-1.4M268.1 642.4v2M271.1 642v1M277.3 641.7v1M279.3 635.7v-2M282.7 635.7v-2M286.8 635.6v-2M291.3 635.2v-2.8M292.1 635.8v-1M303.1 636.2v-1.4M304.3 642.2v2M306.3 642.2v2.8M317.1 636.3v-2M320.6 635.5v-1.4M326.8 642.2v2M333.4 640.3v1.4M334.1 641.3v2M338 635.6v-1M340.1 635.7v-1M345 642.3v1M350.4 642.1v0.6M352.2 635.9v-1.4M354.1 642.2v1M356.3 642.2v2M358.6 635.5v-1.4M367.3 635.5v-1M374 635.8v-1.4M381 635.5v-1.4M386.8 635.1v-1M388.7 642v1.4M391 641.7v1.4M393.4 641.7v2M397.5 635.9v-1M399 635.2v-1M406.8 641.6v1M410.6 641.9v2.8M414.6 642.2v1M424 642.4v1.4M426.8 642.2v0.6M431 636v-1.4M432.8 642v2.8M441.1 642.4v1.4M442.6 635.8v-1M444.7 635.8v-1.4M448.4 642.2v1.4M451.4 635.6v-0.6M458.6 635.4v-2.8M462.2 636.4v-2M470.1 635.7v-1M472.1 635.6v-0.6M475.4 635.4v-1.4M479.1 642.2v1M480.5 635.9v-2.8M482.7 633.8v-2M487 635.8v-1M488.1 642.4v0.6M491 636v-2.8M496.7 642.3v2.8M503.4 640.7v2M506.6 635.9v-1M511 642.1v0.6M514.4 641.6v1M516.4 635.6v-1M521.1 635.6v-2M522.7 636.1v-1M525.2 635.5v-0.6M530.3 635.6v-1M532.8 641.7v2M538 641.7v1.4M540.8 635.6v-1.4M542.2 635.7v-1.4M546.2 636v-2M549.1 636v-0.6M558.8 642v1.4M563 641.9v2.8M564.9 635.3v-0.6M569.5 635.7v-2M570.4 642.1v2M572 642.2v2M576.2 635.2v-1M580.4 635.1v-1.4M585.4 642.1v1.4M588.8 635.8v-2M590.9 641v1M596.6 641.4v1.4M599.3 635.5v-2M607.2 641.8v1.4M610.6 636.2v-2.8M615.4 641.4v1.4M621.1 641.7v0.6M622.2 642v0.6M624.4 641.8v2M626 635.9v-1.4M631.3 635.1v-1.4M635.1 635.9v-2.8M644.8 641.9v1.4M646.5 641.6v2.8M649.1 635.6v-1M660.7 635.7v-2M663 642.2v0.6M681.2 642.2v1M688.4 642.1v1.4M690.8 635.5v-2.8M694.5 642.3v2.8M702.2 635.8v-1.4M708.1 641.8v2.8M710.2 634.9v-1.4M722.8 642.2v0.6M726.8 635.7v-1.4M731.2 635.9v-1.4M734.9 635.4v-0.6M740.7 635.7v-2.8M742.6 641.8v1M751.5 641.8v1M753.2 635.7v-2M758.4 641.7v1.4M760.3 635.6v-1.4M763.2 642v1M765 642v0.6M769.2 634.8v-2M770.7 641.8v1.4M777 642.1v1.4M778.3 635.2v-1.4M780.2 635.2v-1M784.2 641.8v2.8M789.1 642.2v0.6M791.2 635.5v-2.8M797.4 635.5v-2M800.3 635.6v-2M803.4 637.2v-0.6M821 635.1v-0.6M822.2 635.6v-1.4M826.8 641.7v2M830.3 641.7v2.8M833.2 642.3v0.6M840.1 642v1M853.1 642.2v0.6M854.1 641.9v1M857.1 635.7v-0.6M865.2 635.8v-1M869.5 636v-1.4M872.9 634.9v-1.4M875.4 635.6v-1M885.1 642.3v1.4M886.2 635.6v-0.6M889.1 642.1v2.8M890.2 635.4v-0.6M899.2 635.4v-1.4M900.5 641.8v2.8M904.7 642.2v1M908.1 641.7v1M911.3 635.8v-2M912.8 635.6v-1.4M920.8 641.9v2.8M922.4 635.5v-2.8M932.7 641.9v0.6M940.3 642v1M950.1 635.7v-1.4M952.3 641.7v1.4M954.1 641.4v1M960.2 641.6v2M962.6 636.2v-1.4M964.9 642.8v1.4M969 640.5v1.4M971 635.5v-1M973.2 635.2v-1M974.8 642.6v1M987.3 635.4v-0.6M990.2 642.5v1.4M997.3 642.2v1.4M999.2 642v2.8M1008.2 642.1v2.8M1010.9 635.9v-2.8M1012.2 641.8v2M1015.4 636.2v-2M1026.4 635.6v-2.8M1030.3 635.7v-0.6M1032.8 642.4v1.4M1036.3 641.8v2M1038.1 641.9v2M1044.2 636.2v-0.6M1047.1 641.4v1.4M1050.1 642v0.6M1052 635.5v-1.4M1066.3 635.4v-1M1069.2 641.9v1M1070.8 640.9v1M1073 635.5v-2.8M1075.1 641.6v2M1077.1 635.5v-1M1078.4 642.1v0.6M1087.1 635.4v-2.8M1090.5 642v2.8M1092 642.1v0.6M1094.6 641.8v0.6M1096.1 642v1M1104.4 642v2.8M1107 635.7v-2.8M1108 635.8v-2M1116.7 635.8v-1M1118.1 641.5v1M1125.2 636v-1M1127.3 635.7v-2M1133.3 635.7v-2M1138.4 635.2v-2.8M1140.4 641.8v1.4M1149 635.4v-2.8M1155.1 642.3v1.4M1156.2 642.1v1M1158.6 641.7v1M1160.4 642.1v1.4M1166.4 635.6v-2M1168.8 636.1v-0.6M1171.4 635.4v-2M1176.2 642.3v2.8M1181 642.4v0.6M1182.8 642v2.8M1184 642.2v1.4M1190.2 642.1v1M1194.4 641.8v1.4M1196.3 642.3v1.4M1199.5 635.6v-2M1203.4 635.4v-1M1204.5 641.6v0.6M1206.7 635.9v-2.8M1214.2 635.4v-1M1224.3 640.5v2.8M1238.5 642.1v2M1247.2 642v0.6M1259.4 642.1v2.8M1262.3 642.3v0.6M1280.5 635.2v-0.6M1282.7 635.3v-2M1288.6 636v-1M1299 635.3v-1.4M1305.4 642.3v2.8M1306.5 642.2v2M1315.5 641.9v0.6M1325.5 642.2v1.4M1344.9 642.1v2M1354.5 641.8v0.6M1358.4 641.9v2.8M1367.1 635.5v-2.8M1368.4 642.2v0.6M1371.2 642.2v1.4M1376.9 636.1v-2.8M1378.6 635.8v-2M1380.5 635.9v-1.4M1385 635.7v-1.4M1387.5 642.5v2M1390.4 641.6v1M1398.2 642.2v1.4M1407.4 635.6v-2.8M1409 635.4v-2M1410.3 635.9v-2.8M1413.1 635.9v-2M1422.7 635.6v-1.4M1428.9 635.5v-0.6M1430.3 635.6v-0.6M1433.2 641.7v1.4M1436.5 635.5v-0.6M1440.5 635.9v-2M1445.4 635.1v-2M1446.8 635.7v-0.6M1455.2 636v-0.6M1461.4 635.7v-0.6M1462.6 636v-1M1464.9 636.9v-0.6M1469.5 635.8v-0.6M1479.4 642v2M1480 641.3v0.6M1485.3 641.9v2.8M1490.4 642.3v2.8M1495.1 641.7v2.8M1505.1 642v1.4M1507.1 642v1M1510.3 635.5v-1.4M1514.3 635.2v-0.6M1519 642.2v2.8M1520.2 635.5v-0.6M1525.4 635.4v-2M1527.4 636v-0.6M1530.5 635.4v-1.4M1534.8 641.9v2M1538 642v2M1541 641.9v2.8M1544.5 641.4v2M1550.9 642v1.4M1553.2 641.8v0.6M1554.9 641.1v1M1557.4 635.2v-2.8M1558.4 635.9v-2M1563 641.7v2M1564.7 634.6v-0.6M1568.1 642.4v1M1572.3 635.7v-1.4M1577 642v0.6M1578.3 635.5v-1.4M1580.6 641.9v0.6M1584.6 635.4v-2M1588.2 635.2v-1M1594.4 641.9v2M1596.1 636.1v-2M1598.5 635.6v-1M1600.6 642.2v1.4M1605.4 635.5v-2M1609.5 635.9v-1.4M1612.3 635.9v-2M1614.3 641.8v2.8M1620 641.2v0.6M1631.1 635.5v-2M1634.4 636v-1.4M1636.3 642.2v0.6M1645 641.6v2.8M1646.9 635.8v-2M1650.8 635.5v-2.8M1653.1 635.5v-2.8M1654.2 635.2v-1.4M1656.3 635.4v-0.6M1664.9 641.8v2M1667.4 635.6v-1.4M1668.8 635.8v-2M1670.7 635.8v-2.8M1674.2 635.7v-2M1679.4 642.3v2.8M1694 635.5v-1.4M1697 642.2v0.6M1699.4 635.7v-1.4M1700.2 635.7v-1.4M1705.1 641.8v1M1707.3 635.3v-0.6M1714 643v0.6M1729.3 642.2v2M1731.4 635.7v-2M1734.5 635.3v-2M1737.5 635.6v-2M1742.7 635.2v-2.8M1755.3 636.1v-1M1768 635.2v-1M1776.2 641.9v1M1779.2 634.5v-2.8M1781.4 641.9v1M1791.1 641.6v2M1792.4 642v0.6M1794.8 635.2v-1.4M1797.2 636.3v-0.6M1798.2 635.3v-0.6M1804.2 641.9v1M1810.5 641.9v2M1816.1 642.4v2M1823.4 635.8v-0.6M1824 641.7v1.4M1827.1 635.6v-1M1828.3 642.1v0.6M1834.5 635.2v-2.8M1839.1 635.5v-2.8M1840.7 642.4v0.6M1843.1 641.4v0.6M1848.8 641.9v1M1854.1 635.7v-2M1862.6 641.8v1.4M1868.6 634.8v-2.8M1872.8 635.6v-2.8M1876.8 635.1v-0.6M1882.4 635.9v-1M1887.3 635.7v-2M1893.5 642.3v0.6M1900.8 641.7v2.8M1906.9 635.7v-2M1909 635.8v-2.8M1912.1 642.3v1.4M1914.9 642.3v2M1919.4 635.6v-2.8M1921.2 642.4v0.6M1929.4 635.9v-2.8M1938.7 642.1v2M1940.6 634.2v-2.8M1951.2 636v-0.6M1954.9 635.9v-2M1969 641.7v1.4M1972.8 635.1v-1.4M1974.3 635.7v-2.8M1980.5 642.4v2.8M1982.9 642.6v1.4M2005.2 635.5v-1M2013.1 641.7v2.8M2016.7 642.1v1M2020.3 642.1v1M2022.8 641.7v1M2024.9 642.1v2M2029.4 636v-2.8M2030.9 635.1v-1.4M2038.2 641.7v1.4M2043.5 635.2v-1M2045.2 642.2v1.4M2049.3 635.7v-1M2050.1 642.2v0.6M2055.2 635.9v-2.8M2058.6 635.8v-2.8M2060.1 635.3v-1M2063.1 635.9v-1M2066.9 635.4v-0.6M2068.4 635.2v-1M2071.3 635.5v-1.4M2074.9 641.5v1M2078.8 641.9v2.8M2083.1 635.6v-0.6M2087.2 642.3v2M2088.8 641.6v1M2091.2 635.5v-2M2092.2 642.4v1.4M2095.2 641.7v2.8M2096.2 635.6v-1M2099.3 635.7v-0.6M2100.3 641.8v1M2106.1 642.2v2.8M2108.4 635.7v-2M2110.6 641.8v1M2114.7 635.5v-1.4M2116.1 642.2v2M2118.4 635.6v-0.6M2125.2 641.5v2M2126.9 635.6v-1M2150.6 635.3v-1M2153.5 635.6v-1.4M2154.2 642v1M2157.4 635.4v-2.8M2161 641.9v1M2162.5 635.5v-1.4M2183 642v1.4M2192.1 641.9v2.8M2202.5 636.1v-0.6M2204.9 635.3v-1M2206.8 641.5v0.6M2208.6 635.4v-1M2212.9 642.1v2M2218.6 641.7v1M2220.7 641.7v1M2237.2 640.2v2M2244.2 635.7v-1.4M2246.2 635.7v-1.4M2251.3 635.4v-1M2253.3 635.3v-2M2256.8 642.2v2.8M2260.4 635.2v-1M2262.1 635.2v-1M2268.9 636.3v-2.8M2272.2 642.1v2.8M2274.4 642v2.8M2284.7 635.5v-2.8M2286.1 635.5v-2.8M2291.5 635.7v-1M2292.7 635.3v-1.4M2294.8 635.6v-2M2306.9 641.9v1M2311 635.9v-1M2312.7 635.5v-0.6M2316.8 635.1v-1.4M2321.1 635.7v-1M2322.3 635.6v-1.4M2332.4 635.6v-2.8M2338.9 642.1v2.8M2340.8 641.8v1M2348 641.2v0.6M2351.4 640.7v0.6M2357.3 635.8v-1M2360 642v2.8M2368.3 635.2v-1.4M2382.5 641.2v1M2386 635.5v-2M2393.1 636.1v-2M2401 641.8v0.6M2403 642.3v2M2406.7 635.5v-1M2416.1 635.9v-1.4M2423.1 641.7v2M2429.2 642.2v2M2432.4 642.3v2M2435.1 641.6v1.4M2447.2 641.5v0.6M2450.5 641.9v2.8M2455.1 635.3v-0.6M2459.2 635.9v-1.4M2474.2 635.3v-1.4" stroke="#86cc2a" stroke-width="1.1" fill="none"/><path d="M4 492L6 493L8 492.7L10 492.2L12 492.1L14 492.4L16 493L18 492L20 492.8L22 492.3L24 491.7L26 492.1L28 492.1L30 492.4L32 492.1L34 492L36 492.1L38 490.4L40 492.4L40.6 492.3" fill="none" stroke="#e63452" stroke-width="7.6" stroke-linejoin="bevel" /><path d="M6.5 496.3v2.8M9.3 489.4v-1M12.9 495.4v1M17 489.7v-1M28.9 488.8v-1M30.5 489.1v-2.8M34.8 495.3v2M37.3 488.8v-0.6M38.6 493.7v1M40.8 495.7v2.8" stroke="#e63452" stroke-width="1.1" fill="none"/><path d="M41.6 613.9L43.6 613.9L45.6 614.3L47.6 614L49.6 613.4L51.6 614.2L53.6 614.2L55.6 614.2L57.6 614.5L59.6 614.3L61.6 614.1L63.6 613.9L65.6 613.8L67.6 613.8L69.6 614.1L71.6 614.2L73.6 613.8L75.6 613.8L77.6 613.9L79.6 613.8L81.6 614.2L83.6 613.3L85.6 614L87.6 613.8L89.6 614.1L91.6 613.7L93.6 614L95.6 613.6L97.6 614.3L99.6 614.3L101.6 613.4L103.6 614.7L105.6 613.5L107.6 613.8L109.6 614L111.6 614L113.6 614.1L115.6 613.5L117.6 613.9L119.6 613.8L121.6 614.3L123.6 614.5L125.6 613.8L127.6 613.6L129.6 614L131.6 613.6L133.6 613.4L135.6 613.7L137.6 614L139.6 614L141.6 614.1L143.6 614.3L145.6 613.7L147.6 613.9L149.6 613.8L151.6 614L153.6 614.4L155.6 614L157.6 614.1L159.6 613.6L161.6 613.7L163.6 613.7L165.6 614.2L167.6 614.4L169.6 613.8L171.6 614.2L173.6 614.6L175.6 614L177.6 614.4L179.6 614.4L181.6 614.3L183.6 614.1L185.6 613.6L187.6 614.2L189.6 614.2L191.6 614.3L193.6 613.8L195.6 613.9L197.6 614.3L199.6 614.2L201.6 614L203.6 613.9L205.6 614.1L207.6 613.7L209.6 613.9L211.6 614.2L213.6 614.1L215.6 613.5L217.6 614.3L219.6 614.2L221.6 614.5L223.6 613.5L225.6 614L227.6 614.3L229.6 613.9L231.6 613.9L233.6 614L235.6 613.9L237.6 613.7L239.6 613.9L241.6 613.5L243.6 615.3L245.6 614.2L247.6 614.1L249.6 613.8L251.6 614.1L253.6 613.9L255.6 613.6L257.6 613.9L259.6 613.9L261.6 613.5L263.6 613.7L265.6 613.6L267.6 613.8L269.6 613.6L271.6 614.1L273.6 613.7L275.6 612.5L277.6 614.7L279.6 613.9L281.6 613.7L283.6 613.7L285.6 614.4L287.6 614.3L289.6 613.9L291.6 614.3L293.6 614.1L295.6 613.9L297.6 614.2L299.6 613.9L301.6 614.2L303.6 613.6L305.6 614.1L307.6 613.9L309.6 614L311.6 614.2L313.6 613.7L315.6 614.3L317.6 613.6L319.6 614L321.6 614.5L323.6 613.6L325.6 613.9L327.6 614.1L329.6 614.1L331.6 613.8L333.6 614.3L335.6 614.7L337.6 614.4L339.6 614L341.6 613.7L343.6 613.6L345.6 614L347.6 614L349.6 613.6L351.6 615.5L353.6 614.1L355.6 614.5L357.6 614.3L359.6 614.1L361.6 614.2L363.6 614.2L365.6 614.2L367.6 614.6L369.6 614.2L369.7 614" fill="none" stroke="#e63452" stroke-width="7.6" stroke-linejoin="bevel" /><path d="M44.8 610.6v-1M56.8 617.5v1M59.9 611v-0.6M62.5 617.4v2.8M63.9 617.2v2M67 617.1v1M68.6 610.5v-0.6M76.2 617.1v2.8M81.9 617.5v1M83.8 610v-2M88.1 610.5v-1.4M89.7 617.4v1M92 610.4v-1M94 617.3v2.8M98.4 617.6v2.8M107.9 617.1v0.6M121.7 611v-0.6M124.6 617.8v1.4M125.8 610.5v-2M128.9 610.3v-1.4M134.8 616.7v1.4M135.9 617v1M140 617.3v2M144.1 611v-2M148.7 617.2v0.6M153 610.7v-1M154.9 617.7v1M164.2 610.4v-0.6M167.8 617.7v1.4M172.4 617.5v2M174.8 611.3v-1M179 617.7v0.6M183 617.6v1.4M186.4 616.9v1.4M190.3 610.9v-2M197.9 611v-1M204.1 610.6v-1.4M206 617.4v2M210.8 617.2v2M213.9 610.8v-2.8M215.9 616.8v1M221 610.9v-2.8M221.8 611.2v-1M224.1 616.8v2M226.3 617.3v1M228.8 617.6v1.4M230.2 610.6v-2.8M240 617.2v2.8M248.5 617.4v1M252.7 610.8v-1M258.9 617.2v0.6M270.6 616.9v2M273.9 610.4v-2M276.8 609.2v-2M280.2 610.6v-0.6M286 617.7v2M290.6 617.2v0.6M294.3 610.8v-1.4M296.1 610.6v-0.6M301.8 617.5v2M307.9 610.6v-1.4M311 610.7v-0.6M312.2 610.9v-1.4M320.6 610.7v-1M322.8 617.8v2.8M324 610.3v-0.6M328.3 610.8v-2.8M336 611.4v-2.8M344.1 616.9v2.8M346.8 610.7v-1M347.9 617.3v1M354.7 617.4v1M361.8 610.9v-0.6M363.7 610.9v-0.6M368.7 617.9v1M369.8 617.5v1" stroke="#e63452" stroke-width="1.1" fill="none"/><path d="M370.7 492.7L372.7 491.6L374.7 492.5L376.7 492.7L378.7 492.4L380.7 492.6L382.7 492.3L384.7 492.5L386.7 492.4L388.7 492.6L390.7 492.4L392.7 491.5L394.7 492.2L396.7 493L398.7 492.2L400.7 492.4L402.7 491.3L404.7 491.9L406.7 492.4L408.7 492.5L410.7 492.4L412.7 492.1L414.7 492.1L416.7 492.3L418.7 492.2L420.7 492.3L422.7 492.1L424.7 492.2L426.7 492.1L428.7 492L430.7 492.3L432.7 493.9L434.7 492.2L436.7 491.9L438.7 492.3L440.7 492.3L442.7 491.8L444.7 492.3L446.7 492.5L448.7 492.4L450.7 492.5L451.9 492.3" fill="none" stroke="#e63452" stroke-width="7.6" stroke-linejoin="bevel" /><path d="M371.2 496v2.8M375.2 489.2v-2M378.8 489.1v-0.6M387.3 495.7v1.4M391.1 489.1v-1M393.8 494.8v2M399.1 495.5v1M413.9 495.4v1M415.8 495.4v1.4M419.1 495.5v1.4M423.9 495.4v2.8M425.8 488.9v-2M435.5 495.5v1M437.5 495.2v2M445.4 489v-1.4M452 489.2v-1.4" stroke="#e63452" stroke-width="1.1" fill="none"/><path d="M453.4 614L455.4 613.8L457.4 614L459.4 614.6L461.4 613.7L463.4 614.5L465.4 614.3L467.4 614.2L469.4 614L471.4 613.7L473.4 614.6L475.4 613.7L477.4 613.8L479.4 614.3L481.4 613.5L483.4 614.5L485.4 614.7L487.4 614.5L489.4 614.2L491.4 612.9L493.4 614.3L495.4 613.7L497.4 614.2L499.4 614.2L501.4 613.7L503.4 614.1L505.4 612.4L507.4 613L509.4 613.8L511.4 614.1L513.4 614.1L515.4 614.2L517.4 613.8L519.4 614.2L521.4 613.8L523.4 612.5L525.4 614.3L527.4 614.4L529.4 613.8L531.4 614.3L533.4 614.2L535.4 614.2L537.4 613.6L539.4 614L541.4 614.3L543.4 613.6L545.4 613.7L547.4 614.1L549.4 613.9L551.4 614.1L553.4 614L555.4 614L557.4 614.7L559.4 614L561.4 613.8L563.4 614.1L565.4 613.7L567.4 613.7L569.4 614L571.4 614.1L573.4 614L575.4 614.2L577.4 613.5L579.4 614.3L581.4 613.9L583.4 613.5L585.4 614.9L587.4 614L589.4 613.8L591.4 613.9L593.4 613.2L595.4 613.8L597.4 613.5L599.4 613.9L601.4 614.1L603.4 614.3L605.4 613.8L607.4 613.6L609.4 614.1L611.4 614L613.4 614.1L615.4 613.8L617.4 614.5L619.4 613.4L621.4 614L623.4 613.5L625.4 613.5L627.4 613.8L629.4 614L631.4 615.3L633.4 614.1L635.4 613.7L637.4 613.7L639.4 614.7L641.4 614L643.4 614.2L645.4 613.9L647.4 613.8L649.4 614.4L651.4 613.7L653.4 612.6L655.4 613.9L657.4 614.4L659.4 614.6L661.4 614.2L663.4 613.8L665.4 613.7L667.4 613.4L669.4 614.2L671.4 614.3L673.4 613.7L675.4 613.9L677.4 613.9L679.4 613.7L681.4 613.6L683.4 613.9L685.4 614.7L687.4 614L689.4 614L691.4 614L693.4 613.7L695.4 614.5L697.4 614.3L699.4 613.6L701.4 614.2L703.4 614.4L705.4 614.3L707.4 614.2L709.4 615.5L711.4 614.1L713.4 614.2L715.4 613.6L717.4 614.3L719.4 614.4L721.4 613.9L723.4 614.2L725.4 613.2L727.4 614.2L729.4 614.2L731.4 614L733.4 613.7L735.4 614.1L737.4 614L739.4 614.1L741.4 613.9L743.4 613.7L745.4 613.9L747.4 613.8L749.4 613.4L751.4 614.1L753.4 613.9L755.4 614.2L757.4 614.2L759.4 613.4L761.4 613.8L763.4 614L765.4 614.2L767.4 613.5L769.4 613.7L771.4 614.3L773.4 613.7L775.4 614.3L777.4 613.9L779.4 614L781.4 614.3L781.5 614" fill="none" stroke="#e63452" stroke-width="7.6" stroke-linejoin="bevel" /><path d="M455.5 617.1v1.4M460.4 617.9v1.4M461.5 610.4v-2.8M467.9 617.5v0.6M470.3 610.7v-2.8M476.2 610.4v-2.8M477.7 617.1v2.8M480.3 611v-1.4M482 610.2v-1.4M484 611.2v-1.4M497.4 610.9v-2M504.4 617.4v1M506 615.7v2M516.1 617.5v2.8M524 609.2v-2M526.5 617.6v1.4M532.8 617.6v1.4M534.7 617.5v2.8M546.4 617v0.6M548.5 617.4v2M556.2 610.7v-2.8M558.4 611.4v-2M563.9 610.8v-2.8M568.5 617v2M586.2 618.2v1.4M588.6 610.7v-1M594.6 616.5v1.4M596.7 617.1v0.6M598.1 616.8v2M601.9 617.4v1M604.7 611v-2.8M605.8 617.1v0.6M612.1 610.7v-1.4M614.4 610.8v-2.8M619.9 616.7v1M622.9 610.7v-2.8M628.2 610.5v-1M633.8 617.4v2.8M636.9 610.4v-1.4M638.1 610.4v-2.8M639.4 611.4v-2.8M644.8 610.9v-2.8M650.4 617.7v1M653.7 615.9v0.6M656.2 617.2v0.6M658.2 617.7v1.4M662.4 610.9v-1M668.6 616.7v1M680.3 617v2M685.8 611.4v-1.4M698.4 611v-1.4M708.9 610.9v-1.4M710.6 612.2v-2.8M712.9 617.4v2M716.6 616.9v1.4M718.2 611v-1.4M720.2 611.1v-2M733.7 610.4v-2M736.8 617.4v2.8M739.6 617.4v1.4M748.1 610.5v-2M751.6 610.8v-1M759.6 610.1v-2.8M766.6 617.5v2.8M772.6 611v-1.4M774.8 610.4v-2M775.6 617.6v2" stroke="#e63452" stroke-width="1.1" fill="none"/><path d="M782.5 492.1L784.5 492.1L786.5 492.5L788.5 491.8L790.5 492.4L792.5 492.3L794.5 493.7L796.5 491.6L798.5 492.5L800.5 492.3L802.5 492L804.5 492.1L806.5 492.2L808.5 492.2L810.5 491.8L812.5 492.6L814.5 492.3L816.5 492.4L818.5 491.7L820.5 492.7L822.5 492.4L824.5 492.2L826.5 492.2L828.5 492.4L830.5 491.8L832.5 492.6L834.5 491.8L836.5 492L838.5 490.9L840.5 493.2L842.5 492.4L844.5 492.2L846.5 492.1L848.5 492.4L850.5 492.4L852.5 492.7L854.5 491.9L856.5 492.2L858.5 492L860.5 492.6L862.5 492.6L863.7 492.3" fill="none" stroke="#e63452" stroke-width="7.6" stroke-linejoin="bevel" /><path d="M782.7 488.8v-2M793.9 489v-1M805.8 495.4v0.6M812.6 489.3v-0.6M817.9 489.1v-0.6M821.5 496v1.4M823.1 489.1v-1M827.8 495.5v2.8M829.4 489.1v-1.4M831.6 495.1v2M833.9 495.9v1M834.6 488.5v-1.4M840.8 496.5v2.8M842.7 489.1v-1.4M859.8 488.7v-2.8" stroke="#e63452" stroke-width="1.1" fill="none"/><path d="M865.2 614L867.2 614.5L869.2 613.9L871.2 613.5L873.2 613.8L875.2 614.1L877.2 613.6L879.2 614L881.2 613.6L883.2 613.5L885.2 614.7L887.2 613.6L889.2 614.3L891.2 614.1L893.2 614.5L895.2 613.9L897.2 612.3L899.2 613.8L901.2 614L903.2 615.6L905.2 612.8L907.2 614.1L909.2 613.6L911.2 614.3L913.2 614.1L915.2 614L917.2 613.6L919.2 613.9L921.2 613.3L923.2 613.7L925.2 613.7L927.2 614.4L929.2 613.7L931.2 614.3L933.2 614.1L935.2 613.7L937.2 614L939.2 613.8L941.2 614.3L943.2 614.2L945.2 614.4L947.2 613.7L949.2 614L951.2 613.8L953.2 613.9L955.2 613.9L957.2 614L959.2 613.6L961.2 613.7L963.2 614L965.2 614.3L967.2 613.9L969.2 613.3L971.2 614.3L973.2 614.4L975.2 614L977.2 614.4L979.2 613.5L981.2 613.9L983.2 613.7L985.2 612.5L987.2 614.1L989.2 614.2L991.2 614.2L993.2 614L995.2 613.7L997.2 614.1L999.2 614.2L1001.2 613.9L1003.2 614.5L1005.2 613.9L1007.2 613.6L1009.2 614.3L1011.2 613.8L1013.2 612.2L1015.2 613.9L1017.2 614.2L1019.2 613.8L1021.2 614.1L1023.2 615.5L1025.2 614L1027.2 614.4L1029.2 613.8L1031.2 614.5L1033.2 614.4L1035.2 614L1037.2 613.7L1039.2 614.3L1041.2 614.5L1043.2 614.7L1045.2 614.3L1047.2 614.1L1049.2 612.1L1051.2 613.9L1053.2 614L1055.2 614.3L1057.2 614.3L1059.2 613.9L1061.2 613.9L1063.2 614.1L1065.2 614.3L1067.2 613.6L1069.2 614.3L1071.2 613.6L1073.2 613.6L1075.2 614.2L1077.2 613.8L1079.2 614.1L1081.2 613.8L1083.2 614.1L1085.2 614.1L1087.2 613.5L1089.2 613.4L1091.2 614L1093.2 613.9L1095.2 614.4L1097.2 613.7L1099.2 613.9L1101.2 613.9L1103.2 614.5L1105.2 614.1L1107.2 614.1L1109.2 614.1L1111.2 614.2L1113.2 614L1115.2 613.9L1117.2 614.2L1119.2 614.4L1121.2 614.4L1123.2 613.9L1125.2 613.6L1127.2 614L1129.2 613.4L1131.2 614.4L1133.2 614.1L1135.2 613.5L1137.2 613.9L1139.2 614.3L1141.2 613.4L1143.2 614.2L1145.2 613.5L1147.2 614.4L1149.2 613.9L1151.2 614.3L1153.2 614L1155.2 614.1L1157.2 614.6L1159.2 614.5L1161.2 614.4L1163.2 613.8L1165.2 613.6L1167.2 614.3L1169.2 614L1171.2 613.9L1173.2 613.7L1175.2 613.7L1177.2 613.7L1179.2 613.9L1181.2 614L1183.2 614.3L1185.2 614.1L1187.2 613.8L1189.2 613.9L1191.2 615.7L1193.2 613.8L1193.3 614" fill="none" stroke="#e63452" stroke-width="7.6" stroke-linejoin="bevel" /><path d="M880.5 617.3v1M881.7 610.3v-1M884 616.8v1M889.6 611v-1M894.4 611.2v-1.4M895.4 617.2v2M898.6 609v-2.8M903.6 618.9v2M906.4 616.1v1.4M907.3 610.8v-2M913.3 617.4v1.4M922.5 616.6v1M928.5 611.1v-2M935.2 617v2.8M938.1 610.7v-1.4M945.7 611.1v-2.8M948.2 610.4v-1.4M961.3 617v1.4M964 617.3v1.4M975.7 617.3v1M979.2 610.2v-1M983.7 617v2M987.7 617.4v0.6M998 617.4v2.8M999.4 610.9v-1M1002.5 617.2v1.4M1004 617.8v1.4M1005.6 617.2v1.4M1008.3 616.9v1.4M1011.3 617.1v1M1017.2 610.9v-1.4M1021.3 617.4v1M1024.5 612.2v-2M1026.1 617.3v2M1028.5 611.1v-2M1030.1 617.1v1M1031.7 611.2v-0.6M1046.6 617.6v1M1047.9 617.4v1.4M1057.3 617.6v2.8M1060.3 617.2v2M1066.2 611v-1.4M1071.2 616.9v2.8M1075.8 617.5v1M1077.7 610.5v-0.6M1090.5 616.7v0.6M1091.4 610.7v-2M1094.3 610.6v-1M1096.4 611.1v-1.4M1098.5 617v0.6M1099.6 617.2v1.4M1101.6 610.6v-2M1106.6 610.8v-2.8M1111.6 610.9v-2M1115.2 610.6v-1M1122.7 617.7v1M1131.9 617.7v1.4M1136.1 616.8v0.6M1141.5 610.1v-2M1143.8 610.9v-2.8M1147.9 611.1v-2M1153.7 617.3v1.4M1156 617.4v0.6M1166.6 610.3v-0.6M1169.7 610.7v-2.8M1172 617.2v1M1174.6 617v1.4M1183.6 617.6v0.6M1186.6 610.8v-2M1187.9 617.1v2M1194.4 617.1v2.8" stroke="#e63452" stroke-width="1.1" fill="none"/><path d="M1194.3 492.2L1196.3 492.2L1198.3 492.4L1200.3 493L1202.3 492.5L1204.3 492L1206.3 492.6L1208.3 492.1L1210.3 492.1L1212.3 492.5L1214.3 492.9L1216.3 492.6L1218.3 492L1220.3 492.5L1222.3 492.1L1224.3 492.6L1226.3 491.9L1228.3 492.2L1230.3 492.1L1232.3 492.4L1234.3 492.2L1236.3 492.2L1238.3 491.8L1240.3 492.6L1242.3 492.4L1244.3 491.9L1246.3 492.3L1248.3 491.9L1250.3 491.5L1252.3 492L1254.3 492.5L1256.3 492.3L1258.3 492.1L1260.3 492.7L1262.3 492.4L1264.3 492.4L1266.3 492.1L1268.3 492.2L1270.3 492.5L1272.3 492.3L1274.3 492.5L1275.5 492.3" fill="none" stroke="#e63452" stroke-width="7.6" stroke-linejoin="bevel" /><path d="M1196.9 495.5v1.4M1198.4 495.7v2M1201.3 496.3v1.4M1208.8 488.8v-1.4M1213.5 489.2v-0.6M1214.4 489.6v-1.4M1223.3 488.8v-2M1228.5 488.9v-2M1234.6 488.9v-0.6M1238.5 488.5v-2M1245.2 488.6v-1M1246.8 489v-2M1251.6 494.8v2M1252.6 495.3v2.8M1254.9 495.8v2.8M1265.5 495.7v1.4M1268.9 495.5v1M1273.4 489v-1.4" stroke="#e63452" stroke-width="1.1" fill="none"/><path d="M1277 613.8L1279 614L1281 614L1283 613.9L1285 614L1287 613.7L1289 614L1291 614L1293 614.1L1295 614L1297 613.8L1299 614.1L1301 613.6L1303 613.9L1305 614L1307 613.6L1309 614.3L1311 613.7L1313 613.6L1315 614.5L1317 613.8L1319 613.6L1321 615.5L1323 613.9L1325 614.4L1327 612.4L1329 613.8L1331 614.4L1333 614.1L1335 613.6L1337 613.8L1339 614.2L1341 614.2L1343 613.8L1345 614.3L1347 614.3L1349 613.9L1351 614.5L1353 615.1L1355 613.8L1357 614L1359 614.3L1361 614.1L1363 613.8L1365 614.2L1367 613.9L1369 614.3L1371 614.2L1373 614.3L1375 614L1377 613.9L1379 614.2L1381 614.1L1383 614.1L1385 613.6L1387 613.9L1389 613.7L1391 614L1393 614.3L1395 614.2L1397 613.8L1399 614.5L1401 613.7L1403 614.2L1405 613.8L1407 616.1L1409 614.4L1411 614.1L1413 614.4L1415 614.3L1417 614.6L1419 614.2L1421 614.3L1423 614.1L1425 613.9L1427 614L1429 614.2L1431 614.1L1433 613.9L1435 614.5L1437 614.1L1439 614.7L1441 613.9L1443 614L1445 614L1447 613.9L1449 613.9L1451 614.3L1453 613.9L1455 613.6L1457 614.2L1459 613.5L1461 613.8L1463 613.8L1465 612.8L1467 613.9L1469 614.1L1471 613.9L1473 613.9L1475 613.3L1477 614L1479 614.3L1481 614.3L1483 614.1L1485 614L1487 614L1489 614.1L1491 614L1493 613.9L1495 614.3L1497 614L1499 613.9L1501 613.7L1503 613.8L1505 614.1L1507 613.8L1509 614L1511 614.3L1513 613.5L1515 613.9L1517 614L1519 614L1521 613.8L1523 613.7L1525 614L1527 613.8L1529 615.9L1531 614L1533 614.1L1535 614L1537 613.8L1539 614.2L1541 614L1543 614L1545 613.9L1547 614L1549 613.8L1551 614.1L1553 614.3L1555 615.4L1557 613.7L1559 613.5L1561 614.3L1563 613.9L1565 613.9L1567 614.1L1569 613.6L1571 614.3L1573 613.8L1575 614.1L1577 614L1579 614.1L1581 614.1L1583 613.1L1585 613.9L1587 613.8L1589 614.1L1591 613.6L1593 614.2L1595 613.6L1597 613.5L1599 614.4L1601 612.6L1603 613.9L1605 614L1605.1 614" fill="none" stroke="#e63452" stroke-width="7.6" stroke-linejoin="bevel" /><path d="M1277.8 610.5v-1M1283.6 610.6v-2M1285.4 610.7v-1M1290.4 610.7v-1M1295.4 610.7v-1M1302 610.3v-0.6M1309.7 611v-1M1319.5 610.3v-0.6M1322.2 618.8v0.6M1325.5 617.7v0.6M1328.4 615.7v1M1331.3 611.1v-1M1334.2 617.4v2M1335.6 616.9v2.8M1337.3 610.5v-2.8M1339.7 617.5v1.4M1342.4 617.5v2M1343.6 610.5v-2.8M1346.4 617.6v1M1349.7 617.2v0.6M1361.4 610.8v-1.4M1365.3 610.9v-1.4M1368.1 617.2v1M1374.4 611v-0.6M1379.2 617.5v2M1382.5 617.4v1M1383.4 610.8v-1M1387.3 617.2v1M1396.3 610.9v-2M1399.3 617.8v0.6M1405.6 610.5v-2.8M1415.5 617.6v2.8M1419.8 617.5v1.4M1422.4 617.6v2M1423.9 610.8v-2M1425.8 617.2v0.6M1427.5 610.7v-0.6M1437.5 610.8v-0.6M1440 618v2M1441.8 617.2v0.6M1445.7 610.7v-0.6M1458.4 617.5v2.8M1459.8 616.8v2.8M1463.7 610.5v-2.8M1465.7 616.1v1.4M1472.1 610.6v-1.4M1477 610.7v-1M1479.2 611v-0.6M1484.3 617.4v1M1489.6 610.8v-1M1491.8 617.3v1.4M1493.5 617.2v0.6M1499.7 610.6v-0.6M1502 610.4v-2.8M1503.2 617.1v2.8M1510.1 617.3v0.6M1511.2 617.6v1.4M1516.1 617.2v1.4M1517.8 610.7v-2.8M1519.8 610.7v-2M1523.6 617v0.6M1527.2 617.1v2.8M1535.8 610.7v-1M1540.3 610.9v-1.4M1542.2 610.7v-2.8M1545.2 617.2v1M1551.4 610.8v-0.6M1555.7 612.1v-1M1557.8 610.4v-2M1561.9 611v-1.4M1572.4 617.6v2.8M1573 610.5v-2M1586.2 610.6v-1.4M1587.2 610.5v-0.6M1589.5 617.4v1.4M1596.4 616.9v1.4M1597.8 610.2v-1.4M1599 611.1v-0.6M1601.2 615.9v2M1603.7 617.2v2" stroke="#e63452" stroke-width="1.1" fill="none"/><path d="M1606.1 492.4L1608.1 492.2L1610.1 492.2L1612.1 492.7L1614.1 492.1L1616.1 493L1618.1 492.2L1620.1 492.3L1622.1 492.5L1624.1 492.7L1626.1 492.2L1628.1 492.4L1630.1 492.7L1632.1 492.2L1634.1 492.5L1636.1 491.7L1638.1 492.6L1640.1 492.5L1642.1 491.9L1644.1 491.6L1646.1 492L1648.1 492.5L1650.1 492.1L1652.1 492.9L1654.1 492.5L1656.1 492.3L1658.1 492.1L1660.1 492.2L1662.1 491.1L1664.1 492L1666.1 492.6L1668.1 491.9L1670.1 491.9L1672.1 492.4L1674.1 492.5L1676.1 491.6L1678.1 492.1L1680.1 492.5L1682.1 492.3L1684.1 492.7L1686.1 492.2L1687.3 492.3" fill="none" stroke="#e63452" stroke-width="7.6" stroke-linejoin="bevel" /><path d="M1607.3 489.1v-2M1611.4 488.9v-2M1612.1 496v2M1616.2 489.7v-2.8M1618.6 488.9v-0.6M1625.4 496v1.4M1629.3 495.7v2.8M1630.7 489.4v-1M1633.6 488.9v-1M1636.5 495v2M1639.3 489.3v-1.4M1641.2 495.8v2M1645 488.3v-0.6M1654.8 495.8v2.8M1656.3 489v-0.6M1666.7 489.3v-2M1672.2 495.7v2M1675.1 489.2v-2M1684.6 489.4v-0.6M1687.6 495.5v1M1687.6 495.6v1" stroke="#e63452" stroke-width="1.1" fill="none"/><path d="M1688.8 614.1L1690.8 614.1L1692.8 613.7L1694.8 614.3L1696.8 614.2L1698.8 614.5L1700.8 613.7L1702.8 614.2L1704.8 614.3L1706.8 614L1708.8 613.9L1710.8 613.7L1712.8 614.3L1714.8 613.9L1716.8 613.8L1718.8 614.2L1720.8 615.8L1722.8 614L1724.8 614.4L1726.8 614.1L1728.8 614L1730.8 613.7L1732.8 614.1L1734.8 614.6L1736.8 613.7L1738.8 613.6L1740.8 613.7L1742.8 614.2L1744.8 614L1746.8 614.4L1748.8 613.8L1750.8 613.9L1752.8 614L1754.8 613.7L1756.8 613.8L1758.8 614.6L1760.8 614L1762.8 614.2L1764.8 614.1L1766.8 613.9L1768.8 613.9L1770.8 613.8L1772.8 613.9L1774.8 614L1776.8 613.9L1778.8 614L1780.8 613.8L1782.8 614.1L1784.8 613.4L1786.8 613.7L1788.8 614L1790.8 614.1L1792.8 614.3L1794.8 613L1796.8 613.8L1798.8 613.8L1800.8 613.9L1802.8 614.7L1804.8 614.3L1806.8 614.2L1808.8 613.9L1810.8 614.4L1812.8 613.8L1814.8 614L1816.8 614.1L1818.8 614L1820.8 613.5L1822.8 613.5L1824.8 613.9L1826.8 613.9L1828.8 614L1830.8 614.1L1832.8 614.1L1834.8 613.8L1836.8 614.2L1838.8 614.4L1840.8 614L1842.8 614L1844.8 614.1L1846.8 613.6L1848.8 613.8L1850.8 614.5L1852.8 613.7L1854.8 613.7L1856.8 614.1L1858.8 614.2L1860.8 614.4L1862.8 613.7L1864.8 614L1866.8 614.1L1868.8 614.5L1870.8 614.1L1872.8 613.8L1874.8 614.1L1876.8 614L1878.8 613.9L1880.8 614.4L1882.8 614L1884.8 614.4L1886.8 614.5L1888.8 614L1890.8 614.6L1892.8 614.1L1894.8 613.9L1896.8 614L1898.8 615.6L1900.8 613.4L1902.8 613.8L1904.8 613.7L1906.8 614.3L1908.8 613.9L1910.8 614.3L1912.8 614.1L1914.8 614.2L1916.8 614.2L1918.8 612.1L1920.8 614L1922.8 614.2L1924.8 614L1926.8 614.1L1928.8 613.8L1930.8 614.3L1932.8 613.6L1934.8 613L1936.8 614.3L1938.8 613.6L1940.8 613.6L1942.8 614.3L1944.8 613.6L1946.8 614.3L1948.8 613.9L1950.8 614.2L1952.8 614.4L1954.8 614.1L1956.8 613.5L1958.8 614.1L1960.8 614.3L1962.8 614.6L1964.8 615.2L1966.8 614.1L1968.8 614.2L1970.8 614L1972.8 613.4L1974.8 614.3L1976.8 614L1978.8 614.1L1980.8 614L1982.8 613.8L1984.8 613.6L1986.8 614.3L1988.8 613.5L1990.8 614L1992.8 613.8L1994.8 613.7L1996.8 614L1998.8 614.4L2000.8 614.2L2002.8 614.1L2004.8 614.6L2006.8 613.7L2008.8 614.1L2010.8 614.2L2012.8 613.7L2014.8 613.7L2016.8 613.9L2016.9 614" fill="none" stroke="#e63452" stroke-width="7.6" stroke-linejoin="bevel" /><path d="M1696.9 610.9v-2M1704.1 610.9v-0.6M1713.1 611v-0.6M1715.5 617.2v1M1717.7 610.5v-2M1719.1 617.5v2.8M1722.1 619.1v0.6M1728.8 617.3v1M1731.3 610.4v-1M1735.4 611.3v-2M1749.9 610.5v-2.8M1754 610.7v-0.6M1755.5 610.4v-0.6M1757.5 610.5v-1.4M1762.9 610.9v-1M1769 617.2v0.6M1771.9 617.1v1.4M1773.1 610.6v-2.8M1775.2 610.7v-2.8M1778.9 617.3v1.4M1781.6 610.5v-1M1783.9 617.4v1M1790.1 610.7v-2.8M1794.3 617.6v0.6M1801.7 610.6v-0.6M1809.3 610.6v-2M1817.7 617.4v2.8M1823.3 610.2v-0.6M1824.9 617.2v0.6M1831.2 617.4v0.6M1833.3 610.8v-1.4M1838.8 611.1v-2M1845.4 617.4v1.4M1847.1 610.3v-1M1860.3 610.9v-0.6M1864.9 610.7v-2M1878 610.7v-2M1879.6 617.2v1M1883 610.7v-1M1886.8 611.2v-2M1893.6 617.4v1.4M1899 612.3v-2.8M1903.5 610.5v-1.4M1909 610.6v-2.8M1913.5 610.8v-0.6M1914.9 617.5v1M1923.8 617.5v2.8M1924.9 617.3v1.4M1931.5 617.6v0.6M1934.8 616.3v0.6M1947 611v-2M1949.4 610.6v-0.6M1953.8 611.1v-1.4M1960.1 610.8v-2M1978.3 610.7v-1.4M1983 610.5v-1M1986 610.3v-1M1989.3 616.8v1M1996 610.4v-1M1998 617.3v0.6M2002.3 617.5v2M2005.3 617.9v2.8M2008 610.4v-0.6" stroke="#e63452" stroke-width="1.1" fill="none"/><path d="M2017.9 492.1L2019.9 492L2021.9 492.9L2023.9 492.3L2025.9 491.4L2027.9 492.5L2029.9 492.4L2031.9 492.5L2033.9 492.2L2035.9 492.5L2037.9 492.6L2039.9 492.3L2041.9 492.7L2043.9 492L2045.9 492.7L2047.9 492.5L2049.9 492.4L2051.9 492.2L2053.9 492.6L2055.9 492L2057.9 491.9L2059.9 492.2L2061.9 492L2063.9 492.4L2065.9 492.5L2067.9 492.3L2069.9 492.7L2071.9 492.2L2073.9 492.7L2075.9 493.1L2077.9 492.2L2079.9 492.2L2081.9 492.3L2083.9 492.2L2085.9 493.1L2087.9 492.4L2089.9 492.4L2091.9 491.8L2093.9 491.9L2095.9 493.8L2097.9 492.4L2099.1 492.3" fill="none" stroke="#e63452" stroke-width="7.6" stroke-linejoin="bevel" /><path d="M2020.2 488.7v-2M2028.8 495.8v0.6M2034.9 495.5v2M2039.1 495.9v2M2040.5 489v-0.6M2042.4 496v2M2058.3 488.6v-1.4M2060 488.9v-2.8M2064.3 489.1v-0.6M2075.1 496v0.6M2083 489v-2M2084.1 488.9v-2.8M2089.2 489.1v-0.6M2094.9 488.6v-1.4M2098.9 489.1v-2.8" stroke="#e63452" stroke-width="1.1" fill="none"/><path d="M2100.6 614L2102.6 614.2L2104.6 614.5L2106.6 613.3L2108.6 613.7L2110.6 613.8L2112.6 613.5L2114.6 614.2L2116.6 616L2118.6 613.7L2120.6 613.4L2122.6 614.6L2124.6 613.6L2126.6 613.9L2128.6 614.2L2130.6 613.9L2132.6 613.9L2134.6 614.2L2136.6 613.6L2138.6 614.2L2140.6 613.7L2142.6 613.8L2144.6 613.9L2146.6 613.8L2148.6 614.1L2150.6 613.9L2152.6 613.8L2154.6 613.7L2156.6 614.2L2158.6 614.1L2160.6 614.3L2162.6 614.1L2164.6 613.9L2166.6 613.4L2168.6 613.9L2170.6 613.7L2172.6 614.2L2174.6 614.8L2176.6 613.7L2178.6 614.1L2180.6 613.6L2182.6 614.2L2184.6 612.8L2186.6 613.7L2188.6 613.5L2190.6 613.9L2192.6 614L2194.6 612.4L2196.6 614L2198.6 614.3L2200.6 613.8L2202.6 613.6L2204.6 614.1L2206.6 613.6L2208.6 614.4L2210.6 613.7L2212.6 613.8L2214.6 614.1L2216.6 614L2218.6 613.7L2220.6 614L2222.6 613.9L2224.6 614L2226.6 614.2L2228.6 614.1L2230.6 613.8L2232.6 613.9L2234.6 614.4L2236.6 613.7L2238.6 614.2L2240.6 613.7L2242.6 613.9L2244.6 615.2L2246.6 614.6L2248.6 613.8L2250.6 613.9L2252.6 614.3L2254.6 614.2L2256.6 613.8L2258.6 613.8L2260.6 613.8L2262.6 613.2L2264.6 613.6L2266.6 614L2268.6 614.2L2270.6 613.8L2272.6 613.9L2274.6 613.7L2276.6 613.8L2278.6 613.7L2280.6 614.1L2282.6 614.5L2284.6 613.7L2286.6 613.8L2288.6 614.4L2290.6 614.1L2292.6 613.4L2294.6 613.9L2296.6 613.8L2298.6 614.2L2300.6 614.1L2302.6 613.9L2304.6 614.5L2306.6 614.7L2308.6 614L2310.6 614.2L2312.6 613.8L2314.6 613.8L2316.6 614.5L2318.6 614.6L2320.6 614.2L2322.6 614.1L2324.6 614.3L2326.6 614.5L2328.6 614.2L2330.6 614.1L2332.6 614.7L2334.6 613.5L2336.6 614L2338.6 613.7L2340.6 613.9L2342.6 613.1L2344.6 613.7L2346.6 614L2348.6 614L2350.6 613.9L2352.6 614.3L2354.6 614.3L2356.6 614.2L2358.6 613.8L2360.6 615L2362.6 614.3L2364.6 613.7L2366.6 613.7L2368.6 613.9L2370.6 614.1L2372.6 615L2374.6 614.2L2376.6 613.9L2378.6 614.1L2380.6 613.7L2382.6 613.5L2384.6 614.2L2386.6 614.4L2388.6 613.6L2390.6 613.8L2392.6 614.2L2394.6 613.4L2396.6 613.8L2398.6 613.9L2400.6 614.1L2402.6 614L2404.6 613.9L2406.6 614.7L2408.6 614.1L2410.6 614L2412.6 613.9L2414.6 614.3L2416.6 613.6L2418.6 613.9L2420.6 614.1L2422.6 614.3L2424.6 614.1L2426.6 613.8L2428.6 612.3L2428.7 614" fill="none" stroke="#e63452" stroke-width="7.6" stroke-linejoin="bevel" /><path d="M2107.3 610v-1.4M2110 610.4v-1.4M2110.7 610.5v-2.8M2121.1 610.1v-2M2123.3 617.9v2.8M2125.6 610.3v-2M2127.3 617.2v1.4M2132.1 610.6v-0.6M2137 616.9v2.8M2139 617.5v0.6M2145.6 617.2v1M2147 610.5v-2M2150 617.4v1.4M2151.4 617.2v1M2156 610.4v-2.8M2169.6 617.2v2.8M2172 617v2.8M2175.9 611.5v-1.4M2181.8 610.3v-1.4M2183.9 610.9v-0.6M2186.8 610.4v-0.6M2189.5 616.8v0.6M2205.3 617.4v0.6M2211.9 617v2M2222.6 610.6v-2M2232 610.5v-0.6M2233.2 617.2v0.6M2240.7 617v2M2243.3 610.6v-1M2247.4 617.9v0.6M2253.2 617.6v0.6M2259.3 610.5v-1.4M2261.1 617.1v1M2271.6 610.5v-0.6M2276.7 617.1v0.6M2279.4 610.4v-2M2281.2 617.4v0.6M2284.7 617v1M2287.1 610.5v-1M2289.3 617.7v1.4M2293.3 616.7v0.6M2295.7 617.2v0.6M2301 610.8v-2.8M2303.7 617.2v1.4M2307.5 618v0.6M2309.7 610.7v-0.6M2310.8 610.9v-1M2314 617.1v0.6M2315.7 610.5v-2.8M2317.4 611.2v-2M2318.8 617.9v1.4M2321 610.9v-1.4M2326 611v-2.8M2327 617.8v2M2329.4 610.9v-2M2334.9 610.2v-0.6M2340.7 610.6v-2.8M2343 616.4v0.6M2344.9 617v0.6M2349.4 610.7v-1M2351 617.2v2M2357.9 610.9v-0.6M2359.3 617.1v1.4M2361.1 618.3v2M2362.6 611v-0.6M2369.2 610.6v-1.4M2385 610.9v-0.6M2387.2 617.7v2M2389.1 610.3v-0.6M2392.9 610.9v-1.4M2395.3 616.7v1.4M2397.2 610.5v-2.8M2403.8 610.7v-2M2405 617.2v0.6M2414.1 610.6v-1.4M2425.2 617.4v1M2426.7 610.5v-1.4" stroke="#e63452" stroke-width="1.1" fill="none"/><path d="M2429.7 492.6L2431.7 492.5L2433.7 492.9L2435.7 492L2437.7 492.3L2439.7 492.1L2441.7 492.5L2443.7 492.4L2445.7 492.2L2447.7 492.3L2449.7 492.1L2451.7 491.9L2453.7 492.5L2455.7 492.3L2457.7 492.3L2459.7 492.5L2461.7 492.5L2463.7 492.2L2465.7 492.4L2467.7 491.9L2469.7 492L2471.7 492.4L2473.7 492.3L2474 492.3" fill="none" stroke="#e63452" stroke-width="7.6" stroke-linejoin="bevel" /><path d="M2434.5 496.2v2.8M2438.1 489v-1M2440 495.4v1M2444.1 495.7v1M2447 495.5v2M2449.8 495.4v2M2456.9 495.6v2.8M2465.9 495.7v2M2474.2 489v-1.4M2475.1 495.6v2.8" stroke="#e63452" stroke-width="1.1" fill="none"/><path d="M40.6 492.3 V621" stroke="#e63452" stroke-width="1.5" fill="none"/><path d="M452.4 492.3 V621" stroke="#e63452" stroke-width="1.5" fill="none"/><path d="M864.2 492.3 V621" stroke="#e63452" stroke-width="1.5" fill="none"/><path d="M1276 492.3 V621" stroke="#e63452" stroke-width="1.5" fill="none"/><path d="M1687.8 492.3 V621" stroke="#e63452" stroke-width="1.5" fill="none"/><path d="M2099.6 492.3 V621" stroke="#e63452" stroke-width="1.5" fill="none"/><path d="M370.2 614 V480.3" stroke="#e63452" stroke-width="1.5" fill="none"/><path d="M782 614 V480.3" stroke="#e63452" stroke-width="1.5" fill="none"/><path d="M1193.8 614 V480.3" stroke="#e63452" stroke-width="1.5" fill="none"/><path d="M1605.6 614 V480.3" stroke="#e63452" stroke-width="1.5" fill="none"/><path d="M2017.4 614 V480.3" stroke="#e63452" stroke-width="1.5" fill="none"/><path d="M2429.2 614 V480.3" stroke="#e63452" stroke-width="1.5" fill="none"/><path d="M370.2 629 V640" stroke="#86cc2a" stroke-width="1.3"/><path d="M782 629 V640" stroke="#86cc2a" stroke-width="1.3"/><path d="M1193.8 629 V640" stroke="#86cc2a" stroke-width="1.3"/><path d="M1605.6 629 V640" stroke="#86cc2a" stroke-width="1.3"/><path d="M2017.4 629 V640" stroke="#86cc2a" stroke-width="1.3"/><path d="M2429.2 629 V640" stroke="#86cc2a" stroke-width="1.3"/><path d="M40.6 638 V649" stroke="#86cc2a" stroke-width="1.3"/><path d="M452.4 638 V649" stroke="#86cc2a" stroke-width="1.3"/><path d="M864.2 638 V649" stroke="#86cc2a" stroke-width="1.3"/><path d="M1276 638 V649" stroke="#86cc2a" stroke-width="1.3"/><path d="M1687.8 638 V649" stroke="#86cc2a" stroke-width="1.3"/><path d="M2099.6 638 V649" stroke="#86cc2a" stroke-width="1.3"/><path d="M4 844.3L6 843.8L8 844.1L10 846.2L12 844.5L14 846.5L16 844.3L18 844.5L20 844.1L22 843.1L24 843.9L26 844.2L28 844.4L30 845.4L32 844.1L34 844.4L36 843.1L38 844.5L40 844.5L40.6 844.3" fill="none" stroke="#f7922e" stroke-width="4.6" stroke-linejoin="bevel" /><path d="M10.4 848v1.4M35.4 846.2v0.6M39.2 846.3v1" stroke="#f7922e" stroke-width="1.1" fill="none"/><path d="M41.6 863.2L43.6 864.7L45.6 864.5L47.6 865.4L49.6 867.3L51.6 867.5L53.6 869L55.6 869.8L57.6 870.7L59.6 871.6L61.6 872.1L63.6 873.9L65.6 872.8L67.6 874.8L69.6 874.9L71.6 877.8L73.6 877.9L75.6 878.5L77.6 879.2L79.6 879.4L81.6 880.1L83.6 880.8L85.6 882L87.6 881.9L89.6 882.9L91.6 884.9L93.6 884.8L95.6 886L97.6 886.6L99.6 885.6L101.6 888.1L103.6 888.8L105.6 889.5L107.6 889.5L109.6 891.5L111.6 891.5L113.6 891.7L115.6 892.7L117.6 893.6L119.6 894.3L121.6 894.4L123.6 895.7L125.6 895.9L127.6 897.1L129.6 897L131.6 898.5L133.6 899.5L135.6 900.3L137.6 899.6L139.6 900.4L141.6 901.1L143.6 902L145.6 902.7L147.6 904.2L149.6 904.6L151.6 903.7L153.6 905.7L155.6 905.6L157.6 905.6L159.6 905.8L161.6 907.7L163.6 907.6L165.6 908.3L167.6 909.9L169.6 909.1L171.6 910L173.6 910.4L175.6 910.7L177.6 911.2L179.6 912.2L181.6 911.9L183.6 913.5L185.6 914.1L187.6 914.6L189.6 916.1L191.6 914.8L193.6 915.7L195.6 917L197.6 916.1L199.6 917L201.6 917.2L203.6 918.3L205.6 918.7L207.6 918.8L209.6 919.5L211.6 918.9L213.6 920.7L215.6 920L217.6 921L219.6 921.4L221.6 921.4L223.6 922L225.6 921.8L227.6 923.5L229.6 923.2L231.6 923.3L233.6 924.1L235.6 924.9L237.6 926L239.6 926L241.6 926.6L243.6 926.6L245.6 927.1L247.6 927.9L249.6 928.1L251.6 928.1L253.6 928.5L255.6 929.2L257.6 929.5L259.6 930.5L261.6 929.9L263.6 929.5L265.6 930.3L267.6 931.7L269.6 930.6L271.6 931.8L273.6 932.4L275.6 932.4L277.6 933.6L279.6 933.8L281.6 933.7L283.6 932.2L285.6 934.5L287.6 934.9L289.6 934.1L291.6 935.2L293.6 935.3L295.6 935.7L297.6 936.3L299.6 936.5L301.6 936.1L303.6 936.6L305.6 937L307.6 936.5L309.6 937.6L311.6 938.6L313.6 938.3L315.6 937.2L317.6 939.4L319.6 938.6L321.6 939.3L323.6 939.9L325.6 940.2L327.6 940.9L329.6 940.8L331.6 940.5L333.6 941.5L335.6 940.7L337.6 941.3L339.6 941.2L341.6 940.5L343.6 942.7L345.6 942.8L347.6 942.9L349.6 943.4L351.6 943.1L353.6 943.3L355.6 944.1L357.6 943.7L359.6 944L361.6 944.4L363.6 944.1L365.6 945.9L367.6 944.8L369.6 945.3L369.9 945.2" fill="none" stroke="#f7922e" stroke-width="4.6" stroke-linejoin="bevel" /><path d="M54.4 870.8v1.4M149 906v0.6M154 907.5v0.6M172.1 908.2v-2.8M186.3 915.9v1M201.9 919v1M209.6 917.7v-2M219.8 923.2v2M226.7 920v-2M235.1 925.9v2.8M236 923.1v-1M252.7 926.3v-2M282.7 935.5v0.6M308.5 938.3v1.4M314.9 936.5v-1.4M318.4 937.6v-0.6M320.8 936.8v-2" stroke="#f7922e" stroke-width="1.1" fill="none"/><path d="M370.8 856L372.8 853.2L374.8 851.3L376.8 850.3L378.8 848.9L380.8 848.5L382.8 846.6L384.8 846.8L386.8 846.4L388.8 845.8L390.8 847.1L392.8 845.6L394.8 845.8L396.8 845.4L398.8 845.9L400.8 845.4L402.8 845.7L404.8 845.4L406.8 845.5L408.8 846.1L410.8 845.5L412.8 845.2L414.8 845.5L416.8 845.4L418.8 844.9L420.8 844.1L422.8 844.1L424.8 846.6L426.8 844.3L428.8 844.1L430.8 844.8L432.8 844.3L434.8 843.7L436.8 844.2L438.8 843.6L440.8 844.3L442.8 843.2L444.8 842.9L446.8 843.8L448.8 843.2L450.8 844.5L452.4 843.5" fill="none" stroke="#f7922e" stroke-width="4.6" stroke-linejoin="bevel" /><path d="M373 855v2.8M395.5 847.6v0.6M398.1 847.2v1.4" stroke="#f7922e" stroke-width="1.1" fill="none"/><path d="M453.4 862.5L455.4 863.7L457.4 865.3L459.4 865.5L461.4 867.1L463.4 868.5L465.4 870L467.4 869.6L469.4 869.6L471.4 872L473.4 871.7L475.4 872.8L477.4 873.7L479.4 874.3L481.4 875.8L483.4 876.1L485.4 879.5L487.4 877.8L489.4 878.9L491.4 880.2L493.4 879.8L495.4 879.7L497.4 882.4L499.4 882.1L501.4 883.6L503.4 884.7L505.4 885.1L507.4 885.5L509.4 886.4L511.4 887.6L513.4 888.9L515.4 890.2L517.4 889.5L519.4 890.2L521.4 891L523.4 891.8L525.4 892.6L527.4 893.7L529.4 894L531.4 894.5L533.4 893.5L535.4 895.1L537.4 896.5L539.4 896.6L541.4 896.8L543.4 897.8L545.4 899.4L547.4 899.6L549.4 900L551.4 901.2L553.4 901.3L555.4 901.9L557.4 901.3L559.4 902.6L561.4 903.2L563.4 903.4L565.4 905L567.4 905.8L569.4 905.3L571.4 907L573.4 907.6L575.4 907.9L577.4 908.5L579.4 908.8L581.4 909.6L583.4 910.9L585.4 910.2L587.4 911.3L589.4 911.2L591.4 911.6L593.4 912.8L595.4 913.8L597.4 913.9L599.4 915.4L601.4 913.7L603.4 915.3L605.4 915.6L607.4 915.5L609.4 916.2L611.4 916.9L613.4 917.5L615.4 918L617.4 918.7L619.4 918.8L621.4 918.8L623.4 919.6L625.4 920.7L627.4 920.9L629.4 920.7L631.4 920.5L633.4 921L635.4 923.6L637.4 923.2L639.4 923.9L641.4 924.5L643.4 923.8L645.4 922.9L647.4 924.1L649.4 925.2L651.4 925.9L653.4 926.4L655.4 927.3L657.4 927.3L659.4 927.3L661.4 927.6L663.4 928L665.4 928L667.4 929.2L669.4 929L671.4 926.6L673.4 929.4L675.4 930.2L677.4 931.2L679.4 930.5L681.4 930.2L683.4 931.3L685.4 931.7L687.4 932.6L689.4 932.2L691.4 932.4L693.4 933.5L695.4 933L697.4 934.4L699.4 934.7L701.4 935.3L703.4 935.5L705.4 935.1L707.4 936.3L709.4 936.4L711.4 936.9L713.4 936.4L715.4 937.1L717.4 937.7L719.4 937.4L721.4 937.7L723.4 937.7L725.4 938L727.4 938.4L729.4 938.4L731.4 939L733.4 939.4L735.4 940.3L737.4 939.8L739.4 939.6L741.4 940.9L743.4 940.5L745.4 940.8L747.4 940.9L749.4 941.6L751.4 941.7L753.4 942.3L755.4 942.6L757.4 942.3L759.4 943.2L761.4 942.4L763.4 943.6L765.4 942.1L767.4 943.3L769.4 943.6L771.4 944.4L773.4 943.7L775.4 946.5L777.4 944L779.4 945.1L781.4 945.5L781.7 945.2" fill="none" stroke="#f7922e" stroke-width="4.6" stroke-linejoin="bevel" /><path d="M455.6 865.5v0.6M458.6 867.1v2.8M471.5 870.2v-1.4M474.7 873.5v0.6M478.1 875.5v2M479.9 872.5v-2M491.7 882v1M522.6 889.2v-2M532.1 896.3v1.4M543.9 896v-1.4M550.3 898.2v-2M568.7 904v-1M596.5 915.6v1.4M612.6 915.1v-2M614 919.3v0.6M639.5 922.1v-2M646.2 921.1v-2M650.8 927v2.8M654.3 928.2v1M660.4 925.5v-0.6M693.9 935.3v1M728.6 936.6v-2.8M741.6 939.1v-2.8M759.4 941.4v-2.8M769.4 941.8v-1M772.8 942.6v-1.4" stroke="#f7922e" stroke-width="1.1" fill="none"/><path d="M782.6 855.5L784.6 852.8L786.6 851.1L788.6 849.7L790.6 848.3L792.6 848L794.6 847.9L796.6 847.1L798.6 847.1L800.6 846.6L802.6 846.3L804.6 846L806.6 846.2L808.6 846.6L810.6 845.9L812.6 845.2L814.6 845.5L816.6 844.7L818.6 845.6L820.6 844.2L822.6 844.5L824.6 845.7L826.6 844.7L828.6 844.6L830.6 845.1L832.6 844.5L834.6 843.8L836.6 843.7L838.6 843.9L840.6 844.8L842.6 843.9L844.6 844.1L846.6 844.3L848.6 844.7L850.6 844.3L852.6 843.6L854.6 844.4L856.6 844L858.6 843.4L860.6 845.4L862.6 843.4L864.2 843.5" fill="none" stroke="#f7922e" stroke-width="4.6" stroke-linejoin="bevel" /><path d="M803.8 844.5v-2.8M805.3 847.8v0.6M843.9 842.1v-2.8" stroke="#f7922e" stroke-width="1.1" fill="none"/><path d="M865.2 863.3L867.2 864.1L869.2 864.7L871.2 866L873.2 867.8L875.2 867L877.2 869.8L879.2 870.1L881.2 870.3L883.2 871.1L885.2 872.5L887.2 873.9L889.2 874L891.2 874.6L893.2 874.7L895.2 876.9L897.2 876.8L899.2 878.2L901.2 879.1L903.2 880.8L905.2 880.6L907.2 881.6L909.2 882L911.2 882.5L913.2 884.2L915.2 882.7L917.2 883.8L919.2 885.2L921.2 886.7L923.2 887.7L925.2 887.2L927.2 889.1L929.2 889.2L931.2 889.8L933.2 891.2L935.2 890.6L937.2 891.7L939.2 893.1L941.2 893.1L943.2 894.5L945.2 895.2L947.2 895.2L949.2 896.3L951.2 896.5L953.2 897.3L955.2 897.7L957.2 899.4L959.2 900.1L961.2 900.1L963.2 900.4L965.2 901.7L967.2 900.7L969.2 903.2L971.2 902.6L973.2 904L975.2 904.3L977.2 904.9L979.2 905L981.2 906.3L983.2 906.9L985.2 907L987.2 907.3L989.2 908.1L991.2 910.3L993.2 909.4L995.2 910.7L997.2 910.4L999.2 911.3L1001.2 911.5L1003.2 912.5L1005.2 912.3L1007.2 912.4L1009.2 913.4L1011.2 913.6L1013.2 914.8L1015.2 915.2L1017.2 916.5L1019.2 915.4L1021.2 916.6L1023.2 917.7L1025.2 917.8L1027.2 917.8L1029.2 918.8L1031.2 917.8L1033.2 918.7L1035.2 920L1037.2 919.8L1039.2 921.1L1041.2 921.3L1043.2 921.6L1045.2 922.3L1047.2 921.8L1049.2 922.1L1051.2 922.8L1053.2 923.7L1055.2 923.2L1057.2 924L1059.2 925.1L1061.2 925.5L1063.2 926.1L1065.2 925.4L1067.2 926.4L1069.2 926.6L1071.2 927.3L1073.2 928.2L1075.2 927.4L1077.2 927.9L1079.2 928.7L1081.2 928.9L1083.2 929L1085.2 930L1087.2 930.4L1089.2 930.6L1091.2 930.2L1093.2 931.2L1095.2 931.8L1097.2 931.5L1099.2 932.3L1101.2 932.9L1103.2 933.2L1105.2 933.7L1107.2 933.8L1109.2 933.2L1111.2 934.3L1113.2 934.5L1115.2 934.6L1117.2 936.1L1119.2 935.9L1121.2 935.4L1123.2 936L1125.2 936.8L1127.2 935.9L1129.2 937.4L1131.2 937L1133.2 938.5L1135.2 939L1137.2 938.3L1139.2 938.1L1141.2 938.3L1143.2 938.7L1145.2 939.4L1147.2 939.5L1149.2 939.9L1151.2 939.3L1153.2 939.8L1155.2 940.6L1157.2 941.5L1159.2 941.3L1161.2 941.9L1163.2 941L1165.2 941.6L1167.2 941.5L1169.2 943L1171.2 943.7L1173.2 943.3L1175.2 942.8L1177.2 942.9L1179.2 943.7L1181.2 943.4L1183.2 943.9L1185.2 944.5L1187.2 945.5L1189.2 944.1L1191.2 944.6L1193.2 944.7L1193.5 945.2" fill="none" stroke="#f7922e" stroke-width="4.6" stroke-linejoin="bevel" /><path d="M866.1 861.5v-2.8M887.6 872.1v-2M890.6 875.8v2M908 883.4v1.4M926 885.4v-1.4M927.9 887.3v-0.6M937.5 893.5v2M954.2 895.5v-1M964.1 898.6v-1M976.5 902.5v-1M984.4 908.7v1M1002.4 909.7v-2M1003.9 910.7v-1.4M1006.5 910.5v-1.4M1017.5 918.3v2M1020.4 913.6v-1M1026.7 919.6v0.6M1059.8 926.9v1M1088.1 932.2v2.8M1091.9 928.4v-1M1108.2 932v-0.6M1112.6 936.1v1.4M1126.6 935v-0.6M1151.8 941.1v1.4M1165.9 939.8v-2.8M1193.8 943.4v-0.6" stroke="#f7922e" stroke-width="1.1" fill="none"/><path d="M1194.4 856.2L1196.4 853.9L1198.4 851L1200.4 847.7L1202.4 848.7L1204.4 848L1206.4 846.7L1208.4 847.1L1210.4 847.3L1212.4 847.2L1214.4 846.3L1216.4 845.5L1218.4 845.5L1220.4 846.6L1222.4 845.4L1224.4 845.4L1226.4 845L1228.4 844.9L1230.4 845.7L1232.4 845.4L1234.4 844.9L1236.4 843.5L1238.4 845.5L1240.4 844.6L1242.4 844.4L1244.4 844.8L1246.4 844.7L1248.4 844.6L1250.4 844.4L1252.4 844.7L1254.4 843.9L1256.4 844.3L1258.4 843.6L1260.4 843.2L1262.4 844.8L1264.4 844L1266.4 843.6L1268.4 843.4L1270.4 844L1272.4 843.7L1274.4 843.6L1276 843.5" fill="none" stroke="#f7922e" stroke-width="4.6" stroke-linejoin="bevel" /><path d="M1222.6 847.2v0.6M1227.7 846.8v2.8M1229.5 843.1v-1M1232.8 843.6v-1.4M1253.2 846.5v0.6M1255.4 845.7v1.4" stroke="#f7922e" stroke-width="1.1" fill="none"/><path d="M1277 862.9L1279 864.5L1281 865.7L1283 866.1L1285 866.5L1287 867.9L1289 868.9L1291 869.7L1293 871.5L1295 872L1297 872.5L1299 872.2L1301 873L1303 874.1L1305 875.4L1307 875.6L1309 876.2L1311 878.3L1313 879.6L1315 879.6L1317 880.3L1319 881.4L1321 882.8L1323 882.6L1325 883.2L1327 885L1329 884.6L1331 886.6L1333 887.2L1335 886.8L1337 888.6L1339 889.4L1341 888.2L1343 891.2L1345 891.6L1347 891.4L1349 892.4L1351 893.1L1353 893.5L1355 894.7L1357 895.3L1359 895.9L1361 897.6L1363 896.3L1365 897.3L1367 897.5L1369 899L1371 899.1L1373 899.5L1375 900.7L1377 900.5L1379 901.3L1381 904.4L1383 902.1L1385 903.9L1387 904.4L1389 904.7L1391 907.2L1393 905.9L1395 906.7L1397 907.1L1399 907.8L1401 909L1403 908.6L1405 909.1L1407 909.7L1409 910.6L1411 910.6L1413 911.8L1415 912.2L1417 913.1L1419 913.1L1421 914.4L1423 914.4L1425 914.1L1427 914.9L1429 915.2L1431 916.6L1433 916L1435 917.6L1437 917.8L1439 918.3L1441 918L1443 918.8L1445 919.5L1447 919.8L1449 920.9L1451 919.4L1453 921.7L1455 921.5L1457 922.6L1459 922.3L1461 922.9L1463 922.2L1465 924.3L1467 924.8L1469 924.2L1471 924L1473 925.5L1475 925.7L1477 926.4L1479 926.8L1481 927.4L1483 927.2L1485 928.4L1487 928.2L1489 929.1L1491 929.7L1493 928.9L1495 931.4L1497 929.8L1499 931.5L1501 931.1L1503 930.2L1505 931.3L1507 930.8L1509 931.2L1511 932.5L1513 933.6L1515 933.1L1517 933.4L1519 933.6L1521 934.1L1523 934.8L1525 935.1L1527 934.5L1529 935.2L1531 935.3L1533 935.8L1535 936.2L1537 936.5L1539 937.2L1541 937.3L1543 936.9L1545 938.3L1547 938.4L1549 938.9L1551 939.1L1553 938.4L1555 939L1557 939L1559 940.2L1561 939.1L1563 940.5L1565 939.6L1567 941.4L1569 941.6L1571 940.6L1573 941.1L1575 941.9L1577 942L1579 942.4L1581 943.3L1583 943.7L1585 943.5L1587 942.8L1589 943.2L1591 944.2L1593 944.3L1595 943.9L1597 944.5L1599 944.2L1601 944.8L1603 944.8L1605 944.6L1605.3 945.2" fill="none" stroke="#f7922e" stroke-width="4.6" stroke-linejoin="bevel" /><path d="M1293.9 869.7v-2.8M1309.3 874.4v-2M1329.3 882.8v-1M1336.2 888.6v2.8M1337.8 886.8v-1.4M1347.7 889.6v-0.6M1352.2 891.3v-0.6M1389.5 902.9v-2.8M1396.3 904.9v-2.8M1409.5 912.4v2M1445.1 921.3v2M1455.7 923.3v1M1457.1 924.4v1.4M1467.6 926.6v0.6M1489.9 927.3v-2M1493.5 930.7v2.8M1521.1 935.9v1.4M1536 934.4v-0.6M1543.8 938.7v1.4M1545.9 936.5v-2.8M1550.4 940.7v0.6M1551 940.9v1M1593.9 942.5v-0.6" stroke="#f7922e" stroke-width="1.1" fill="none"/><path d="M1606.2 855.2L1608.2 852.8L1610.2 850.7L1612.2 850.3L1614.2 849.9L1616.2 848.4L1618.2 848L1620.2 847L1622.2 846.9L1624.2 844.5L1626.2 846L1628.2 845.8L1630.2 845.7L1632.2 845.2L1634.2 845.7L1636.2 844.3L1638.2 845.4L1640.2 845.8L1642.2 845.6L1644.2 845.8L1646.2 844.6L1648.2 845.8L1650.2 845.4L1652.2 845L1654.2 844.3L1656.2 843.8L1658.2 844.8L1660.2 845.1L1662.2 845L1664.2 844.3L1666.2 844.3L1668.2 844.7L1670.2 843.7L1672.2 844L1674.2 844.1L1676.2 843.7L1678.2 843.9L1680.2 844L1682.2 843.8L1684.2 843.6L1686.2 843.6L1687.8 843.5" fill="none" stroke="#f7922e" stroke-width="4.6" stroke-linejoin="bevel" /><path d="M1648.9 847.6v1.4M1658.2 843v-2M1665.4 842.5v-1.4M1676.6 845.5v0.6" stroke="#f7922e" stroke-width="1.1" fill="none"/><path d="M1688.8 863.8L1690.8 864.8L1692.8 864.3L1694.8 865.4L1696.8 867.2L1698.8 866.9L1700.8 869L1702.8 869.4L1704.8 871L1706.8 871.4L1708.8 872.6L1710.8 873L1712.8 874.6L1714.8 875.4L1716.8 875.2L1718.8 876.7L1720.8 877.6L1722.8 877.7L1724.8 878.4L1726.8 879.9L1728.8 880.2L1730.8 881.2L1732.8 881.3L1734.8 882.9L1736.8 881.8L1738.8 884.1L1740.8 885.1L1742.8 887L1744.8 886.9L1746.8 886.2L1748.8 888.1L1750.8 889.1L1752.8 889.7L1754.8 890.9L1756.8 891L1758.8 891.4L1760.8 892.4L1762.8 892.5L1764.8 893.4L1766.8 895.2L1768.8 895.7L1770.8 895.8L1772.8 896.1L1774.8 896.1L1776.8 897.5L1778.8 898.2L1780.8 898.2L1782.8 899.7L1784.8 899.5L1786.8 901.4L1788.8 901.1L1790.8 901.1L1792.8 903L1794.8 902.7L1796.8 903.3L1798.8 905L1800.8 905.5L1802.8 905.8L1804.8 906.2L1806.8 906.1L1808.8 907L1810.8 908.4L1812.8 908L1814.8 908.8L1816.8 909.5L1818.8 910.5L1820.8 910.3L1822.8 911.2L1824.8 911.7L1826.8 911.8L1828.8 912L1830.8 915L1832.8 913.8L1834.8 913.2L1836.8 914.9L1838.8 915.2L1840.8 915.4L1842.8 915.5L1844.8 916.7L1846.8 917.1L1848.8 916.6L1850.8 917.6L1852.8 917.7L1854.8 918.8L1856.8 919.3L1858.8 919L1860.8 920.2L1862.8 920.6L1864.8 920.8L1866.8 921.8L1868.8 922L1870.8 922.1L1872.8 923.7L1874.8 922.9L1876.8 923.7L1878.8 923.2L1880.8 924.4L1882.8 925.2L1884.8 925.3L1886.8 926.2L1888.8 925.8L1890.8 926.7L1892.8 927.6L1894.8 927.8L1896.8 927.2L1898.8 927.5L1900.8 928.2L1902.8 928.8L1904.8 928.8L1906.8 929L1908.8 929.5L1910.8 929.5L1912.8 930.3L1914.8 931L1916.8 931.5L1918.8 932.1L1920.8 932.5L1922.8 932.4L1924.8 931.5L1926.8 932.6L1928.8 933.4L1930.8 933.7L1932.8 934.7L1934.8 934.2L1936.8 935L1938.8 934.7L1940.8 932.9L1942.8 935.2L1944.8 936.4L1946.8 936.1L1948.8 936.5L1950.8 937.1L1952.8 937L1954.8 936.7L1956.8 937.1L1958.8 938.3L1960.8 937.7L1962.8 938.7L1964.8 939.3L1966.8 939.3L1968.8 938.9L1970.8 940.6L1972.8 940.1L1974.8 939.8L1976.8 940.2L1978.8 939.5L1980.8 941L1982.8 941.2L1984.8 941.2L1986.8 942.2L1988.8 942.6L1990.8 942.9L1992.8 943.3L1994.8 942.2L1996.8 943.3L1998.8 942.9L2000.8 942.8L2002.8 944.1L2004.8 943.5L2006.8 944.4L2008.8 944.3L2010.8 944.5L2012.8 945.3L2014.8 945.1L2016.8 944.8L2017.1 945.2" fill="none" stroke="#f7922e" stroke-width="4.6" stroke-linejoin="bevel" /><path d="M1713.4 876.4v2M1718.9 878.5v2.8M1743.1 888.8v2M1749 886.3v-1M1760 889.6v-2M1773.4 894.3v-0.6M1803.9 907.6v2M1807.5 907.9v1M1817.3 907.7v-1.4M1819.9 912.3v2.8M1828 913.6v2.8M1836.9 913.1v-2M1863.8 918.8v-1.4M1884.3 923.4v-1.4M1903.6 927v-2.8M1911.1 931.3v1M1913.6 932.1v0.6M1996.3 944v2" stroke="#f7922e" stroke-width="1.1" fill="none"/><path d="M2018 855L2020 852.4L2022 851L2024 848.7L2026 848.5L2028 848.8L2030 847.4L2032 847.2L2034 846.4L2036 845.8L2038 845.7L2040 846.3L2042 845.7L2044 845.4L2046 846.4L2048 845.9L2050 845.2L2052 845.7L2054 845.6L2056 845.1L2058 844.8L2060 845.9L2062 844.8L2064 845.3L2066 844.8L2068 844.7L2070 844.8L2072 843.9L2074 845L2076 844.6L2078 844.3L2080 843.5L2082 843.3L2084 844.3L2086 844.2L2088 844.3L2090 844.9L2092 844.2L2094 845.1L2096 844.5L2098 843.7L2099.6 843.5" fill="none" stroke="#f7922e" stroke-width="4.6" stroke-linejoin="bevel" /><path d="M2020.7 850.6v-2M2026.5 846.7v-1M2041.4 848.1v1.4M2058.7 843v-2M2076 842.8v-2.8M2082.1 845.1v1.4M2090.9 843.1v-2" stroke="#f7922e" stroke-width="1.1" fill="none"/><path d="M2100.6 862.5L2102.6 864L2104.6 864.9L2106.6 866.1L2108.6 867.1L2110.6 868L2112.6 867.9L2114.6 869.1L2116.6 870.6L2118.6 870.8L2120.6 872.3L2122.6 873.2L2124.6 874L2126.6 874.6L2128.6 875.5L2130.6 875.7L2132.6 877.8L2134.6 877.7L2136.6 878.2L2138.6 878.4L2140.6 879.5L2142.6 881.2L2144.6 882.3L2146.6 882.4L2148.6 882.7L2150.6 884.9L2152.6 884.7L2154.6 885.9L2156.6 886.6L2158.6 887.1L2160.6 887.9L2162.6 888.5L2164.6 890.5L2166.6 891.4L2168.6 890.7L2170.6 891.1L2172.6 892.6L2174.6 892.3L2176.6 893.6L2178.6 894L2180.6 894.7L2182.6 896.2L2184.6 896.5L2186.6 896.6L2188.6 897.6L2190.6 897.9L2192.6 899.2L2194.6 899.5L2196.6 900.5L2198.6 900.9L2200.6 901L2202.6 903.6L2204.6 902.3L2206.6 903.3L2208.6 903.5L2210.6 903.8L2212.6 904.5L2214.6 905.2L2216.6 906.2L2218.6 906.4L2220.6 906.3L2222.6 907.3L2224.6 907.8L2226.6 908.7L2228.6 908.7L2230.6 910.1L2232.6 909.5L2234.6 911.8L2236.6 911.8L2238.6 912.3L2240.6 912.5L2242.6 913L2244.6 912.5L2246.6 913.4L2248.6 916L2250.6 915.3L2252.6 915.8L2254.6 916.2L2256.6 916L2258.6 917.2L2260.6 918.3L2262.6 919L2264.6 916.5L2266.6 918.6L2268.6 919.6L2270.6 919.6L2272.6 920.8L2274.6 920.7L2276.6 920.8L2278.6 921.5L2280.6 922.4L2282.6 922.8L2284.6 922.9L2286.6 923.3L2288.6 923L2290.6 925.1L2292.6 924.6L2294.6 924.4L2296.6 925.3L2298.6 926L2300.6 925.7L2302.6 926.6L2304.6 927.2L2306.6 927.9L2308.6 927.2L2310.6 927.9L2312.6 929.3L2314.6 927.9L2316.6 929.5L2318.6 929.4L2320.6 929.2L2322.6 930.4L2324.6 930.2L2326.6 930.1L2328.6 930.6L2330.6 931.7L2332.6 932.4L2334.6 932.5L2336.6 933L2338.6 932.9L2340.6 934.5L2342.6 933.4L2344.6 933.6L2346.6 934.1L2348.6 934.3L2350.6 935.3L2352.6 935.3L2354.6 935.8L2356.6 935.9L2358.6 936.2L2360.6 935.4L2362.6 936.5L2364.6 937.4L2366.6 937.7L2368.6 938.1L2370.6 937.5L2372.6 937.8L2374.6 938.4L2376.6 937.7L2378.6 937.5L2380.6 939.4L2382.6 939.5L2384.6 939.6L2386.6 939.2L2388.6 939.9L2390.6 940.8L2392.6 940.9L2394.6 941.1L2396.6 940.9L2398.6 941.8L2400.6 941.4L2402.6 942.8L2404.6 942.8L2406.6 942.6L2408.6 943.2L2410.6 943.3L2412.6 943.4L2414.6 943.8L2416.6 944.7L2418.6 945.4L2420.6 945.3L2422.6 944.9L2424.6 944.4L2426.6 944.4L2428.6 945.2L2428.9 945.2" fill="none" stroke="#f7922e" stroke-width="4.6" stroke-linejoin="bevel" /><path d="M2103.6 862.2v-2M2115.6 870.9v2M2132.9 876v-2M2146.1 880.5v-0.6M2174.7 890.5v-1.4M2225.8 906v-0.6M2233 907.7v-1M2247.3 915.2v1.4M2263.9 920.8v2M2314.1 927.5v-1M2319.6 931.2v0.6M2351.8 933.5v-2.8M2353.9 937.1v1M2368.1 939.5v2M2370 939.9v1.4M2371.1 935.7v-1M2373.5 936v-2.8M2387 937.4v-2.8M2399.7 943.6v1.4M2407.6 940.8v-2.8M2417.6 946.5v2.8M2424.8 946.2v2M2429.4 943.4v-0.6" stroke="#f7922e" stroke-width="1.1" fill="none"/><path d="M2429.8 855.3L2431.8 852.7L2433.8 850.4L2435.8 849.2L2437.8 848.6L2439.8 848.3L2441.8 847.9L2443.8 846.4L2445.8 846.1L2447.8 846.2L2449.8 846.6L2451.8 846L2453.8 847.1L2455.8 845.6L2457.8 845.4L2459.8 845.7L2461.8 844.3L2463.8 845.8L2465.8 844.6L2467.8 844.6L2469.8 844.2L2471.8 845.3L2473.8 845.9L2474 844.9" fill="none" stroke="#f7922e" stroke-width="4.6" stroke-linejoin="bevel" /><path d="M2446.5 847.9v2.8M2448.7 848v1" stroke="#f7922e" stroke-width="1.1" fill="none"/><path d="M370.2 947 V855" stroke="#f7922e" stroke-width="1.6" fill="none"/><path d="M782 947 V855" stroke="#f7922e" stroke-width="1.6" fill="none"/><path d="M1193.8 947 V855" stroke="#f7922e" stroke-width="1.6" fill="none"/><path d="M1605.6 947 V855" stroke="#f7922e" stroke-width="1.6" fill="none"/><path d="M2017.4 947 V855" stroke="#f7922e" stroke-width="1.6" fill="none"/><path d="M2429.2 947 V855" stroke="#f7922e" stroke-width="1.6" fill="none"/><path d="M41.1 842 V864" stroke="#f7922e" stroke-width="2.4" fill="none"/><path d="M452.9 842 V864" stroke="#f7922e" stroke-width="2.4" fill="none"/><path d="M864.7 842 V864" stroke="#f7922e" stroke-width="2.4" fill="none"/><path d="M1276.5 842 V864" stroke="#f7922e" stroke-width="2.4" fill="none"/><path d="M1688.3 842 V864" stroke="#f7922e" stroke-width="2.4" fill="none"/><path d="M2100.1 842 V864" stroke="#f7922e" stroke-width="2.4" fill="none"/><path d="M4 1095.9L6 1096.2L8 1097.4L10 1095.6L12 1095.8L14 1096.2L16 1096L18 1096L20 1095.7L22 1095.8L24 1096.1L26 1096L28 1095.8L30 1096.2L32 1096.1L34 1096L36 1095.8L38 1096L40 1095.7L41.1 1096" fill="none" stroke="#2020be" stroke-width="7" stroke-linejoin="bevel" /><path d="M4.4 1098.9v2.8M10.9 1092.6v-2M14.2 1093.2v-0.6M18.2 1099v0.6M20.1 1092.7v-2M22 1098.8v0.6M28.2 1098.8v1.4M31.2 1093.2v-2M32 1093.1v-1M34.5 1093v-1.4M40.8 1098.7v1.4" stroke="#2020be" stroke-width="1.1" fill="none"/><path d="M42.1 1224.5L44.1 1226.3L46.1 1224.8L48.1 1224.9L50.1 1224.6L52.1 1224.6L54.1 1224.1L56.1 1224.2L58.1 1224.8L60.1 1224.1L62.1 1224.8L64.1 1224.3L66.1 1224.1L68.1 1224.5L70.1 1225.1L72.1 1224.4L74.1 1224.8L76.1 1224.1L78.1 1224.4L80.1 1224.2L82.1 1224.5L84.1 1224.4L86.1 1224.4L88.1 1224.6L90.1 1224.9L92.1 1224.6L94.1 1224.3L96.1 1224.9L98.1 1224.7L100.1 1224.2L102.1 1224.5L104.1 1224.8L106.1 1224.2L108.1 1224.2L110.1 1224.5L112.1 1224.5L114.1 1224.4L116.1 1224.4L118.1 1224.8L120.1 1224.2L122.1 1224.5L124.1 1224.8L126.1 1224.2L128.1 1224.7L130.1 1224.7L132.1 1224.2L134.1 1224.4L136.1 1224.4L138.1 1224.4L140.1 1224.8L142.1 1224.8L144.1 1224.4L146.1 1224.7L148.1 1224.7L150.1 1224.6L152.1 1225L154.1 1224.9L156.1 1224.4L158.1 1224.6L160.1 1224.8L162.1 1224.3L164.1 1224.5L166.1 1224.6L168.1 1224.5L170.1 1224.4L172.1 1223.9L174.1 1223.9L176.1 1224.3L178.1 1224.2L180.1 1224.9L182.1 1224.3L184.1 1224.4L186.1 1224.3L188.1 1224.7L190.1 1224.8L192.1 1224.7L194.1 1224.1L196.1 1226.4L198.1 1224.1L200.1 1224.7L202.1 1224.1L204.1 1224.4L206.1 1224.8L208.1 1224.5L210.1 1224.4L212.1 1224L214.1 1222.7L216.1 1224.4L218.1 1225L220.1 1224.7L222.1 1225L224.1 1224.4L226.1 1224.4L228.1 1224.7L230.1 1224.8L232.1 1224.5L234.1 1224.3L236.1 1223.3L238.1 1225L240.1 1224.4L242.1 1224.3L244.1 1224.2L246.1 1224.4L248.1 1223.9L250.1 1224.8L252.1 1224.3L254.1 1225.2L256.1 1224.3L258.1 1224.7L260.1 1224.6L262.1 1224.3L264.1 1224.8L266.1 1224.8L268.1 1224.3L270.1 1224.7L272.1 1224.4L274.1 1224.3L276.1 1224.6L278.1 1224.4L280.1 1224.7L282.1 1224.3L284.1 1224.6L286.1 1224.5L288.1 1224.6L290.1 1224L292.1 1223.9L294.1 1224.4L296.1 1224.2L298.1 1224.7L300.1 1224.5L302.1 1224.2L304.1 1224.6L306.1 1224L308.1 1224.1L310.1 1225.2L312.1 1224.4L314.1 1225.1L316.1 1224.4L318.1 1224.9L320.1 1224.3L322.1 1224.2L324.1 1224.3L326.1 1224.7L328.1 1224.4L330.1 1224.9L332.1 1225.3L334.1 1224.6L336.1 1224.6L338.1 1224.3L340.1 1224.7L342.1 1224.3L344.1 1224.5L346.1 1224.7L348.1 1224.1L350.1 1224.5L352.1 1224.1L354.1 1223.5L356.1 1224.7L358.1 1224.7L360.1 1224.7L362.1 1224.3L364.1 1224.6L366.1 1224.3L368.1 1224.7L369.7 1224.5" fill="none" stroke="#2020be" stroke-width="7" stroke-linejoin="bevel" /><path d="M42.6 1227.5v1M48.3 1221.9v-0.6M50.8 1221.6v-2.8M54.7 1227.1v0.6M58.5 1221.8v-1.4M61.4 1227.1v1.4M63.4 1221.8v-1M71.6 1222.1v-0.6M72.6 1221.4v-2M74.3 1221.8v-2.8M76.8 1227.1v2.8M78.8 1227.4v1.4M82.4 1221.5v-2.8M86.2 1227.4v1.4M91.2 1221.9v-1.4M96.2 1227.9v2M99.5 1221.7v-1M100.6 1227.2v2M108.8 1227.2v2M116.4 1221.4v-1.4M120.8 1221.2v-2M127.2 1221.2v-1M136.8 1221.4v-0.6M139.1 1227.4v2.8M145.1 1221.4v-2M146.3 1221.7v-1.4M149.4 1221.7v-1M157.2 1227.4v0.6M159 1221.6v-1M164.8 1227.5v1.4M166.6 1227.6v1M168.7 1227.5v0.6M173 1220.9v-2.8M178.6 1227.2v1M182.8 1227.3v1.4M186.8 1227.3v1.4M193.6 1221.7v-0.6M197.3 1223.4v-1.4M198.2 1221.1v-2M201.2 1221.7v-1.4M202.5 1227.1v1M207.2 1221.8v-2M208.2 1221.5v-0.6M227.3 1221.4v-1.4M234.5 1221.3v-2.8M242.8 1227.3v1.4M247 1221.4v-2M252.4 1221.3v-0.6M257 1227.3v2.8M258.5 1221.7v-1.4M263.6 1227.3v1M269.4 1221.3v-2.8M274.9 1227.3v1M284.7 1227.6v2M288.5 1227.6v2.8M290.2 1227v1.4M292.7 1220.9v-1M300.2 1221.5v-2.8M307.2 1221v-2M309.3 1221.1v-2.8M314.2 1228.1v1.4M316.5 1221.4v-2.8M318.4 1221.9v-2.8M323.5 1227.2v2M327.5 1221.7v-2.8M333 1228.3v1M335.1 1221.6v-0.6M338.2 1227.3v2M342.7 1227.3v2.8M348.5 1221.1v-2.8M353.2 1221.1v-0.6M360.5 1227.7v2.8M368.3 1227.7v1M370.2 1221.5v-1" stroke="#2020be" stroke-width="1.1" fill="none"/><path d="M370.7 1096.3L372.7 1095.8L374.7 1095.9L376.7 1096.3L378.7 1096.5L380.7 1096.2L382.7 1095.9L384.7 1096.2L386.7 1096L388.7 1095.9L390.7 1096.2L392.7 1096.6L394.7 1095.9L396.7 1095.8L398.7 1096.4L400.7 1096L402.7 1095.8L404.7 1095.8L406.7 1095.9L408.7 1096.2L410.7 1095.9L412.7 1095.9L414.7 1095.9L416.7 1096.2L418.7 1096.3L420.7 1096.4L422.7 1096L424.7 1096.3L426.7 1096.1L428.7 1096L430.7 1095.9L432.7 1096L434.7 1095.6L436.7 1095.7L438.7 1096.2L440.7 1096.2L442.7 1095.7L444.7 1095.8L446.7 1095.6L448.7 1094.5L450.7 1096.3L452.7 1095.6L452.9 1096" fill="none" stroke="#2020be" stroke-width="7" stroke-linejoin="bevel" /><path d="M371.7 1099.3v0.6M379.1 1099.5v0.6M381.6 1093.2v-2M388 1099v1.4M390 1092.9v-0.6M391 1093.2v-1M393.1 1099.6v1M397.6 1098.8v0.6M405.4 1092.8v-2M407.3 1098.9v1.4M409.6 1099.2v2M411.1 1098.9v1M416.1 1092.9v-0.6M426.1 1099.3v1M431.6 1098.9v2.8M441.7 1099.2v2.8M442.8 1098.7v1.4M446.1 1092.8v-1M447.6 1098.6v1.4" stroke="#2020be" stroke-width="1.1" fill="none"/><path d="M453.9 1224.5L455.9 1224.5L457.9 1224.9L459.9 1224.9L461.9 1225L463.9 1224.6L465.9 1224.5L467.9 1224.6L469.9 1224L471.9 1224.8L473.9 1224.2L475.9 1224.5L477.9 1224.7L479.9 1224.6L481.9 1224.2L483.9 1225L485.9 1224.5L487.9 1224.7L489.9 1224.7L491.9 1224.8L493.9 1224.6L495.9 1225L497.9 1224.5L499.9 1224.8L501.9 1224.8L503.9 1224.3L505.9 1224.6L507.9 1224.5L509.9 1224.5L511.9 1224.7L513.9 1223.9L515.9 1224.3L517.9 1224.6L519.9 1224.6L521.9 1224.4L523.9 1224.8L525.9 1224.3L527.9 1224.4L529.9 1224.5L531.9 1224.5L533.9 1223.9L535.9 1224.7L537.9 1224.4L539.9 1225L541.9 1224.5L543.9 1224.5L545.9 1225.7L547.9 1224.4L549.9 1224.3L551.9 1224.8L553.9 1224L555.9 1224.6L557.9 1224.7L559.9 1224.4L561.9 1224.3L563.9 1224.1L565.9 1224.3L567.9 1224.7L569.9 1223.5L571.9 1224.4L573.9 1224.9L575.9 1224.4L577.9 1224.8L579.9 1223.8L581.9 1224.5L583.9 1225L585.9 1224.2L587.9 1224.1L589.9 1224.2L591.9 1224.7L593.9 1224.9L595.9 1224.3L597.9 1224.1L599.9 1224.6L601.9 1224.4L603.9 1224.1L605.9 1224.6L607.9 1224.6L609.9 1224.3L611.9 1224.8L613.9 1225.2L615.9 1224.2L617.9 1224.6L619.9 1224.5L621.9 1224.3L623.9 1224.8L625.9 1224.5L627.9 1224.5L629.9 1224.8L631.9 1224.8L633.9 1224.4L635.9 1224.6L637.9 1224.3L639.9 1224.4L641.9 1224.4L643.9 1224.8L645.9 1224.8L647.9 1224.6L649.9 1224.5L651.9 1224.7L653.9 1224.7L655.9 1224.3L657.9 1224.2L659.9 1224.6L661.9 1224.1L663.9 1224.9L665.9 1224.6L667.9 1224.1L669.9 1224.9L671.9 1224.3L673.9 1224.6L675.9 1224.3L677.9 1224.6L679.9 1224.3L681.9 1224.9L683.9 1224.3L685.9 1224.7L687.9 1224.3L689.9 1224.2L691.9 1223.9L693.9 1223.3L695.9 1224.6L697.9 1225.4L699.9 1224.6L701.9 1222.8L703.9 1224.9L705.9 1224.6L707.9 1224.5L709.9 1224.7L711.9 1224.7L713.9 1224.5L715.9 1224.5L717.9 1224.5L719.9 1224.5L721.9 1224.5L723.9 1223.8L725.9 1225.9L727.9 1224.7L729.9 1223.9L731.9 1224.3L733.9 1224.3L735.9 1225.4L737.9 1224.7L739.9 1224.3L741.9 1224.3L743.9 1222.9L745.9 1224.7L747.9 1224.9L749.9 1224.5L751.9 1223L753.9 1224.5L755.9 1224.6L757.9 1224.7L759.9 1224.4L761.9 1224.7L763.9 1224.7L765.9 1224.7L767.9 1224.5L769.9 1224.5L771.9 1224.4L773.9 1224.4L775.9 1224.8L777.9 1224.4L779.9 1224L781.5 1224.5" fill="none" stroke="#2020be" stroke-width="7" stroke-linejoin="bevel" /><path d="M453.9 1227.5v1.4M466 1221.5v-1M468.9 1221.6v-2.8M485 1228v2M488.9 1227.7v0.6M491 1221.7v-0.6M497.2 1228v1.4M507.1 1227.6v1M515.2 1226.9v1M521.2 1227.6v1M523 1227.4v2.8M524 1221.8v-2M528.4 1227.4v0.6M530.9 1221.5v-0.6M534.1 1220.9v-0.6M538.7 1221.4v-0.6M541.3 1222v-1M544.5 1227.5v0.6M547.1 1222.7v-2M552.6 1221.8v-0.6M555.9 1221.6v-0.6M558.8 1221.7v-0.6M560.5 1227.4v2M563.3 1227.3v0.6M563.9 1227.1v1M567.3 1227.3v0.6M569.3 1221.7v-1.4M577.4 1227.4v0.6M582.2 1221.5v-1M584.5 1222v-1.4M588.1 1221.1v-2M594.5 1221.9v-2M596.7 1221.3v-2.8M600 1227.6v2.8M605 1227.1v1M606.8 1221.6v-2.8M610.2 1227.3v1M618.2 1227.6v1M620.2 1221.5v-2.8M622.9 1221.3v-2M626.5 1227.5v2.8M631.3 1227.8v1.4M632.5 1227.8v2M639.2 1221.3v-1M641.4 1221.4v-2M646.5 1221.8v-2M652.5 1221.7v-2M654.8 1227.7v0.6M658.3 1221.2v-2M669.3 1227.1v2.8M670.4 1227.9v0.6M674.4 1227.6v1M679 1227.6v0.6M683.2 1221.9v-0.6M690.7 1221.2v-1M692 1220.9v-1M697 1221.6v-2M699.1 1222.4v-1.4M700.3 1227.6v1.4M706.9 1227.6v1M708.4 1227.5v1M710.6 1221.7v-2.8M714.4 1227.5v2.8M716.5 1227.5v2.8M718.9 1221.5v-2M720.6 1227.5v1.4M724.2 1220.8v-1.4M726.1 1222.9v-0.6M730.7 1226.9v1M739.9 1227.3v2M742.3 1227.3v1M746.2 1221.7v-2.8M756.7 1227.6v1.4M758.6 1227.7v2M762.2 1227.7v1.4M764.3 1227.7v1M767.2 1221.7v-1.4M768.4 1227.5v0.6M772.6 1221.4v-1.4M780.7 1221v-1M782.8 1221.5v-1" stroke="#2020be" stroke-width="1.1" fill="none"/><path d="M782.5 1096.1L784.5 1095.8L786.5 1096.8L788.5 1097.3L790.5 1096.2L792.5 1094.7L794.5 1095.9L796.5 1095.6L798.5 1097.8L800.5 1096L802.5 1096.2L804.5 1096.3L806.5 1096L808.5 1096L810.5 1095.4L812.5 1095.6L814.5 1096.7L816.5 1096L818.5 1096L820.5 1095.9L822.5 1096L824.5 1096L826.5 1096.2L828.5 1095.9L830.5 1095.9L832.5 1096.7L834.5 1096L836.5 1096.1L838.5 1095.8L840.5 1096.5L842.5 1096.3L844.5 1095.7L846.5 1096.1L848.5 1096.1L850.5 1095.7L852.5 1095.2L854.5 1096.3L856.5 1095.9L858.5 1096.1L860.5 1097.6L862.5 1096.4L864.5 1096L864.7 1096" fill="none" stroke="#2020be" stroke-width="7" stroke-linejoin="bevel" /><path d="M783.9 1093.1v-1M785.4 1092.8v-0.6M789.4 1094.3v-0.6M801 1093v-1.4M803.9 1093.2v-2M805.4 1093.3v-0.6M821.8 1092.9v-2.8M823.9 1093v-1M827.2 1093.2v-0.6M831.5 1098.9v0.6M837.2 1093.1v-2M848.6 1099.1v1M851.6 1098.7v0.6M855.1 1093.3v-1M859.3 1099.1v1M861.1 1094.6v-2.8" stroke="#2020be" stroke-width="1.1" fill="none"/><path d="M865.7 1224.5L867.7 1224L869.7 1224.6L871.7 1224.4L873.7 1224.5L875.7 1224L877.7 1224.4L879.7 1224.1L881.7 1224.6L883.7 1224.3L885.7 1224.8L887.7 1224.5L889.7 1224.3L891.7 1224.3L893.7 1224.3L895.7 1224.1L897.7 1224.9L899.7 1224.8L901.7 1223.8L903.7 1224.9L905.7 1224.2L907.7 1224L909.7 1224.4L911.7 1224.9L913.7 1224.8L915.7 1224.5L917.7 1224L919.7 1224.3L921.7 1224.5L923.7 1224.9L925.7 1224.4L927.7 1224L929.7 1224.5L931.7 1224.1L933.7 1224.7L935.7 1224.2L937.7 1224.8L939.7 1225.2L941.7 1224.6L943.7 1224.3L945.7 1225.1L947.7 1224.3L949.7 1224.1L951.7 1224.5L953.7 1224.2L955.7 1224.7L957.7 1224.8L959.7 1224.3L961.7 1224.5L963.7 1224.7L965.7 1224.9L967.7 1224.8L969.7 1224.5L971.7 1224L973.7 1224.5L975.7 1224.4L977.7 1224.2L979.7 1225.1L981.7 1225L983.7 1225.1L985.7 1224.3L987.7 1224.7L989.7 1224.8L991.7 1224.7L993.7 1225L995.7 1223.7L997.7 1224L999.7 1226.1L1001.7 1224.4L1003.7 1225.1L1005.7 1224.2L1007.7 1224.1L1009.7 1225.3L1011.7 1224.5L1013.7 1224.3L1015.7 1223.8L1017.7 1225L1019.7 1224.1L1021.7 1224.5L1023.7 1224L1025.7 1224.6L1027.7 1222L1029.7 1224.4L1031.7 1224.8L1033.7 1224.6L1035.7 1224.3L1037.7 1224.6L1039.7 1224.4L1041.7 1224.3L1043.7 1224.3L1045.7 1224.9L1047.7 1223.8L1049.7 1224.4L1051.7 1224.7L1053.7 1224.2L1055.7 1224.7L1057.7 1224.3L1059.7 1224.5L1061.7 1224.7L1063.7 1224.3L1065.7 1224.4L1067.7 1224.8L1069.7 1224.6L1071.7 1224.4L1073.7 1224.3L1075.7 1224.9L1077.7 1224.7L1079.7 1224.5L1081.7 1224.9L1083.7 1224.8L1085.7 1224.8L1087.7 1224.6L1089.7 1224.5L1091.7 1224.7L1093.7 1224.4L1095.7 1224.5L1097.7 1224.3L1099.7 1224.5L1101.7 1224.3L1103.7 1224.3L1105.7 1225L1107.7 1224.6L1109.7 1224.5L1111.7 1224.1L1113.7 1224.8L1115.7 1224.5L1117.7 1223.7L1119.7 1224.4L1121.7 1224.3L1123.7 1224.7L1125.7 1224.5L1127.7 1224.6L1129.7 1224.6L1131.7 1224.7L1133.7 1224.5L1135.7 1224.7L1137.7 1224.6L1139.7 1223.8L1141.7 1224.1L1143.7 1224.1L1145.7 1224.7L1147.7 1224.8L1149.7 1224.5L1151.7 1224.4L1153.7 1224.7L1155.7 1223.2L1157.7 1224.6L1159.7 1223L1161.7 1224.7L1163.7 1224.3L1165.7 1224.3L1167.7 1224.5L1169.7 1224.2L1171.7 1224.3L1173.7 1224.3L1175.7 1224.2L1177.7 1224.7L1179.7 1224.3L1181.7 1224.4L1183.7 1224.5L1185.7 1224.6L1187.7 1222.9L1189.7 1224.5L1191.7 1224.2L1193.3 1224.5" fill="none" stroke="#2020be" stroke-width="7" stroke-linejoin="bevel" /><path d="M870.1 1227.6v0.6M872.5 1221.4v-0.6M875.1 1227.5v2M876 1221v-2.8M877.7 1221.4v-2M884.7 1227.3v2.8M886.4 1221.8v-2.8M888.1 1227.5v1M902.9 1220.8v-2M906.9 1227.2v1.4M909.8 1221.4v-2.8M914.5 1221.8v-1.4M916.6 1221.5v-2M919.8 1227.3v2.8M927 1227.4v2.8M930.3 1221.5v-2M932.8 1227.1v2M939.1 1221.8v-2.8M940.1 1228.2v1.4M942.1 1227.6v0.6M944.7 1221.3v-1.4M948 1221.3v-1M954.6 1221.2v-2M964.7 1221.7v-1M972.6 1221v-1M979 1221.2v-1.4M980.5 1228.1v1.4M983.8 1222.1v-0.6M987.1 1221.3v-2.8M988.1 1227.7v1.4M990.4 1221.8v-1M992.5 1227.7v0.6M997.1 1220.7v-2.8M998.2 1227v2.8M1019.9 1221.1v-1.4M1022.5 1221.5v-1M1024.9 1227v0.6M1032.4 1221.8v-0.6M1038 1221.6v-1M1045.9 1221.9v-1.4M1051.2 1221.4v-0.6M1052.1 1221.7v-1.4M1057 1227.7v1.4M1070.8 1221.6v-2M1075 1227.3v1M1078.8 1221.7v-2M1083.7 1227.8v1M1089 1227.6v2.8M1094.6 1227.4v1.4M1096.3 1227.5v1M1105.7 1222v-1M1108.6 1221.6v-2.8M1110.8 1227.5v2.8M1118.9 1220.7v-1M1128.8 1227.6v1.4M1130.9 1221.6v-1.4M1143.8 1227.1v1M1147.1 1221.7v-2M1147.8 1221.8v-1M1150.2 1221.5v-1M1156.8 1220.2v-1M1161 1220v-0.6M1166.5 1227.3v0.6M1167.8 1221.5v-2.8M1176.1 1221.2v-1M1184.3 1227.5v0.6M1187.2 1227.6v2" stroke="#2020be" stroke-width="1.1" fill="none"/><path d="M1194.3 1094.2L1196.3 1095.5L1198.3 1095.8L1200.3 1096.2L1202.3 1096.5L1204.3 1096.1L1206.3 1096.3L1208.3 1094.7L1210.3 1095.8L1212.3 1095.9L1214.3 1095.3L1216.3 1096.6L1218.3 1095.6L1220.3 1095.7L1222.3 1096.2L1224.3 1096.2L1226.3 1095.2L1228.3 1096.3L1230.3 1096.1L1232.3 1095.7L1234.3 1096.4L1236.3 1096.1L1238.3 1094.3L1240.3 1096.6L1242.3 1095.8L1244.3 1095.5L1246.3 1095.7L1248.3 1095.3L1250.3 1095.8L1252.3 1095.6L1254.3 1095.5L1256.3 1096.3L1258.3 1096.7L1260.3 1095.7L1262.3 1096.2L1264.3 1095.6L1266.3 1096L1268.3 1096.1L1270.3 1095.9L1272.3 1095.8L1274.3 1095.7L1276.3 1095.6L1276.5 1096" fill="none" stroke="#2020be" stroke-width="7" stroke-linejoin="bevel" /><path d="M1199.7 1092.8v-1M1200.8 1099.2v1M1212.5 1092.9v-1.4M1223.7 1093.2v-1.4M1225.5 1093.2v-2M1229.3 1099.3v1M1230.4 1093.1v-2M1232.5 1092.7v-1M1235.5 1099.4v1.4M1248.9 1092.3v-1.4M1252.8 1092.6v-1.4M1255.2 1092.5v-2.8M1261.4 1092.7v-1.4M1263.5 1099.2v1.4M1264.5 1092.6v-2M1267.6 1093v-1.4M1268.9 1093.1v-2M1277.2 1092.6v-2.8M1277.8 1099v1.4" stroke="#2020be" stroke-width="1.1" fill="none"/><path d="M1277.5 1224.4L1279.5 1224.3L1281.5 1224.9L1283.5 1224.6L1285.5 1224.8L1287.5 1224.9L1289.5 1224.4L1291.5 1224.6L1293.5 1224.4L1295.5 1224.5L1297.5 1224.3L1299.5 1223.8L1301.5 1224.3L1303.5 1224L1305.5 1224.5L1307.5 1224.4L1309.5 1224.6L1311.5 1224.6L1313.5 1224.7L1315.5 1224.6L1317.5 1224.6L1319.5 1224.3L1321.5 1224.8L1323.5 1224.4L1325.5 1224.7L1327.5 1224.1L1329.5 1224L1331.5 1222.4L1333.5 1224.2L1335.5 1224.6L1337.5 1224.3L1339.5 1224.6L1341.5 1224.6L1343.5 1224.1L1345.5 1224.5L1347.5 1224.5L1349.5 1224.6L1351.5 1224.8L1353.5 1224.2L1355.5 1223.9L1357.5 1224L1359.5 1224.1L1361.5 1224.8L1363.5 1224.5L1365.5 1224.4L1367.5 1224.9L1369.5 1224.5L1371.5 1224L1373.5 1224.8L1375.5 1224.7L1377.5 1223.9L1379.5 1224.7L1381.5 1224.4L1383.5 1225.3L1385.5 1224.7L1387.5 1224.5L1389.5 1224.1L1391.5 1224.8L1393.5 1224.6L1395.5 1224.6L1397.5 1223.8L1399.5 1226.2L1401.5 1224.5L1403.5 1224.5L1405.5 1224.5L1407.5 1224.5L1409.5 1223.9L1411.5 1224.6L1413.5 1224.3L1415.5 1225.1L1417.5 1224L1419.5 1224.4L1421.5 1224.7L1423.5 1224.8L1425.5 1224.3L1427.5 1224.5L1429.5 1224.3L1431.5 1224.4L1433.5 1224.7L1435.5 1224.1L1437.5 1224.9L1439.5 1224.5L1441.5 1223.7L1443.5 1224.3L1445.5 1224.5L1447.5 1224L1449.5 1224.4L1451.5 1224.9L1453.5 1224.7L1455.5 1224.5L1457.5 1224.1L1459.5 1224.4L1461.5 1223.5L1463.5 1224.3L1465.5 1224.3L1467.5 1224.2L1469.5 1224.6L1471.5 1224.1L1473.5 1224.7L1475.5 1224.5L1477.5 1224.8L1479.5 1224.4L1481.5 1224.3L1483.5 1224.7L1485.5 1226.4L1487.5 1224.4L1489.5 1224.3L1491.5 1224.5L1493.5 1223.9L1495.5 1224.8L1497.5 1224.4L1499.5 1224.7L1501.5 1224.4L1503.5 1224.5L1505.5 1224.4L1507.5 1224.6L1509.5 1224.2L1511.5 1224.3L1513.5 1224.6L1515.5 1224.5L1517.5 1224.5L1519.5 1224.3L1521.5 1224.4L1523.5 1225L1525.5 1224.4L1527.5 1224.8L1529.5 1224.6L1531.5 1224.2L1533.5 1224.7L1535.5 1224.7L1537.5 1224.6L1539.5 1224.6L1541.5 1224.5L1543.5 1224.8L1545.5 1224.6L1547.5 1224.1L1549.5 1225L1551.5 1224.2L1553.5 1224.7L1555.5 1224.5L1557.5 1226.1L1559.5 1225L1561.5 1224.3L1563.5 1224.2L1565.5 1224.2L1567.5 1224.4L1569.5 1224.6L1571.5 1224.9L1573.5 1224.7L1575.5 1224.9L1577.5 1224.9L1579.5 1224.3L1581.5 1224.7L1583.5 1224.3L1585.5 1224.7L1587.5 1224.3L1589.5 1224.7L1591.5 1224.5L1593.5 1223.7L1595.5 1224.9L1597.5 1224.7L1599.5 1224.4L1601.5 1224.2L1603.5 1224.1L1605.1 1224.5" fill="none" stroke="#2020be" stroke-width="7" stroke-linejoin="bevel" /><path d="M1279.7 1221.3v-2M1281.7 1227.9v1.4M1284.2 1221.6v-2M1286.8 1221.8v-0.6M1287.8 1221.9v-2.8M1289.7 1221.4v-0.6M1292 1227.6v2.8M1297.9 1227.3v2.8M1299.9 1226.8v1.4M1306.4 1227.5v2M1307.6 1221.4v-2M1312.4 1221.6v-1M1314.5 1221.7v-0.6M1318.8 1227.6v2M1321 1227.3v1M1328.7 1227.1v1M1336.7 1221.6v-2M1344 1221.1v-1M1345.8 1227.5v2M1352.5 1227.8v0.6M1354.5 1227.2v1M1360.4 1227.1v0.6M1366.9 1227.4v2.8M1368.6 1227.9v0.6M1370.7 1221.5v-2M1372.1 1221v-0.6M1373.8 1227.8v2M1381.9 1221.4v-2.8M1386.3 1227.7v0.6M1392.4 1227.8v2M1394.4 1227.6v2M1395.7 1221.6v-1M1404 1221.5v-1.4M1405.8 1227.5v1.4M1410.3 1220.9v-1.4M1413.8 1221.3v-1.4M1418 1227v1.4M1421.9 1221.7v-1M1434.7 1221.7v-1M1435.8 1227.1v2.8M1438.6 1221.9v-2M1442.4 1220.7v-0.6M1449.9 1227.4v1.4M1452.6 1221.9v-1M1458.2 1221.1v-1M1461.6 1220.5v-2M1464.5 1221.3v-1.4M1466 1221.3v-1.4M1470.3 1227.6v1M1471.9 1221.1v-1M1476.7 1227.5v1M1479.6 1227.4v2M1490.3 1221.3v-2M1496.6 1221.8v-1M1503.5 1227.5v2M1512.6 1221.3v-1.4M1513.6 1221.6v-1.4M1516.2 1221.5v-2M1517.6 1221.5v-1.4M1520.5 1221.3v-1.4M1522.8 1221.4v-0.6M1524.7 1228v0.6M1528.6 1227.8v0.6M1534.8 1227.7v1M1536.7 1221.7v-1M1538.2 1221.6v-1.4M1546.6 1221.6v-0.6M1547.5 1221.1v-2M1551.9 1227.2v2M1555.8 1227.5v1.4M1564.6 1227.2v1M1568.8 1227.4v2.8M1572 1227.9v1M1574.9 1227.7v2.8M1587.7 1221.3v-1.4M1596.4 1227.9v2.8" stroke="#2020be" stroke-width="1.1" fill="none"/><path d="M1606.1 1095.9L1608.1 1096.3L1610.1 1095.7L1612.1 1096.1L1614.1 1096.2L1616.1 1097.4L1618.1 1096.2L1620.1 1096L1622.1 1096L1624.1 1096.1L1626.1 1096.3L1628.1 1095.7L1630.1 1096.3L1632.1 1095.4L1634.1 1096L1636.1 1095.9L1638.1 1095.9L1640.1 1095.1L1642.1 1096.1L1644.1 1095.9L1646.1 1096L1648.1 1096.7L1650.1 1096.4L1652.1 1096L1654.1 1096.2L1656.1 1096.2L1658.1 1096L1660.1 1095.6L1662.1 1096.3L1664.1 1096.3L1666.1 1096.1L1668.1 1095.9L1670.1 1096.2L1672.1 1096L1674.1 1096L1676.1 1096.4L1678.1 1096.1L1680.1 1096.1L1682.1 1096.2L1684.1 1095.7L1686.1 1096.8L1688.1 1095.7L1688.3 1096" fill="none" stroke="#2020be" stroke-width="7" stroke-linejoin="bevel" /><path d="M1607.5 1098.9v2.8M1612.5 1099.1v1.4M1615.4 1093.2v-2M1617.3 1094.4v-1.4M1618.8 1093.2v-0.6M1620.8 1099v1.4M1628.3 1098.7v0.6M1632.8 1098.4v2M1634.5 1093v-1M1651 1093.4v-2.8M1666.4 1099.1v0.6M1673 1093v-2M1675.3 1099v0.6M1676.3 1093.4v-1.4M1679 1093.1v-2.8M1683.6 1099.2v2M1688.4 1099v1" stroke="#2020be" stroke-width="1.1" fill="none"/><path d="M1689.3 1224.4L1691.3 1224.4L1693.3 1224.4L1695.3 1224.3L1697.3 1224.4L1699.3 1224.4L1701.3 1224L1703.3 1224.8L1705.3 1225.1L1707.3 1224.2L1709.3 1224.2L1711.3 1224.4L1713.3 1224L1715.3 1224.8L1717.3 1224.4L1719.3 1224.9L1721.3 1224.4L1723.3 1224.3L1725.3 1224.2L1727.3 1224.6L1729.3 1224.2L1731.3 1224.6L1733.3 1224.5L1735.3 1224.4L1737.3 1224.5L1739.3 1224.9L1741.3 1224.7L1743.3 1224.1L1745.3 1224.8L1747.3 1224.4L1749.3 1224.9L1751.3 1224.4L1753.3 1224L1755.3 1224.7L1757.3 1224.7L1759.3 1223.6L1761.3 1224L1763.3 1224.4L1765.3 1224.6L1767.3 1224.3L1769.3 1224.5L1771.3 1223.8L1773.3 1224.6L1775.3 1224.1L1777.3 1224.5L1779.3 1225L1781.3 1226.6L1783.3 1224.8L1785.3 1224.3L1787.3 1224L1789.3 1224.2L1791.3 1224.6L1793.3 1224.5L1795.3 1224.5L1797.3 1224.5L1799.3 1224.9L1801.3 1225L1803.3 1224.6L1805.3 1224.8L1807.3 1224.6L1809.3 1224.8L1811.3 1224.7L1813.3 1224.8L1815.3 1225L1817.3 1224.3L1819.3 1224.4L1821.3 1224.4L1823.3 1224.4L1825.3 1225L1827.3 1224.7L1829.3 1224.7L1831.3 1224.1L1833.3 1224.3L1835.3 1224.1L1837.3 1224L1839.3 1225.1L1841.3 1225L1843.3 1224.8L1845.3 1223.9L1847.3 1224.6L1849.3 1224.1L1851.3 1225.1L1853.3 1225L1855.3 1224.6L1857.3 1224.4L1859.3 1224.8L1861.3 1224.5L1863.3 1224.7L1865.3 1224.6L1867.3 1224.1L1869.3 1224.7L1871.3 1224.5L1873.3 1224.1L1875.3 1224.5L1877.3 1224.3L1879.3 1224.3L1881.3 1224.6L1883.3 1224.6L1885.3 1224.5L1887.3 1224.6L1889.3 1224.8L1891.3 1224.6L1893.3 1224.9L1895.3 1224.4L1897.3 1224L1899.3 1225.1L1901.3 1223.7L1903.3 1224.7L1905.3 1224.3L1907.3 1225L1909.3 1224.9L1911.3 1224.6L1913.3 1224.1L1915.3 1224.8L1917.3 1222.7L1919.3 1224.7L1921.3 1224.6L1923.3 1224.5L1925.3 1224.8L1927.3 1225L1929.3 1224.8L1931.3 1224.2L1933.3 1224.7L1935.3 1224.6L1937.3 1224.5L1939.3 1224.1L1941.3 1224.8L1943.3 1224.6L1945.3 1224.8L1947.3 1224.3L1949.3 1223.8L1951.3 1224.5L1953.3 1224.7L1955.3 1224.6L1957.3 1224.3L1959.3 1224.2L1961.3 1224.3L1963.3 1224.7L1965.3 1224L1967.3 1224.8L1969.3 1224.8L1971.3 1224.8L1973.3 1224.6L1975.3 1224.2L1977.3 1224.5L1979.3 1225.3L1981.3 1224.5L1983.3 1224.6L1985.3 1224.5L1987.3 1224.6L1989.3 1224.7L1991.3 1224.6L1993.3 1224.3L1995.3 1224.6L1997.3 1225L1999.3 1224.4L2001.3 1223.1L2003.3 1224.3L2005.3 1224.4L2007.3 1224.2L2009.3 1225.2L2011.3 1224.2L2013.3 1224.6L2015.3 1224.5L2016.9 1224.5" fill="none" stroke="#2020be" stroke-width="7" stroke-linejoin="bevel" /><path d="M1696.2 1221.3v-1M1699.7 1227.4v2M1701.3 1221v-2M1704.4 1221.8v-1M1729.9 1221.2v-1.4M1733.7 1227.5v1M1738.3 1227.5v0.6M1740.5 1227.9v0.6M1741.5 1221.7v-0.6M1744.2 1227.1v1.4M1748.2 1221.4v-1M1754.7 1227v2M1764.4 1227.4v1.4M1770.6 1221.5v-1.4M1778.7 1227.5v0.6M1780.7 1222v-1.4M1782.3 1223.6v-2.8M1784.1 1227.8v0.6M1788.5 1227v1M1789.6 1227.2v1M1792.3 1221.6v-2.8M1799.5 1221.9v-1.4M1801.4 1222v-1.4M1803.6 1221.6v-1.4M1808.4 1221.6v-2M1810.4 1227.8v2M1814.1 1221.8v-2.8M1822.3 1227.4v2M1828.3 1227.7v2.8M1830 1227.7v0.6M1834 1221.3v-0.6M1838.4 1227v2.8M1839.6 1228.1v1M1847.5 1221.6v-2M1856.4 1227.6v0.6M1858.1 1221.4v-1M1865.5 1227.6v2.8M1870.2 1227.7v2M1871.9 1221.5v-2M1884.1 1221.6v-2.8M1886.6 1227.5v0.6M1892.1 1227.6v2M1894.4 1221.9v-1.4M1900.1 1228.1v2M1902.6 1220.7v-0.6M1904.8 1227.7v2.8M1905.8 1221.3v-2.8M1908.1 1228v1M1920.2 1221.7v-2M1921.7 1221.6v-0.6M1924.8 1221.5v-0.6M1927.6 1228v2M1929.8 1227.8v1.4M1931.5 1221.2v-0.6M1940.3 1221.1v-2.8M1943.8 1227.6v1.4M1946 1221.8v-1.4M1952.5 1227.5v2.8M1955.3 1227.6v0.6M1963.5 1227.7v1M1968.3 1227.8v2M1970 1221.8v-2.8M1978.5 1227.5v1M1979.9 1222.3v-1M1984.3 1221.6v-0.6M1989.5 1227.7v0.6M1992.1 1221.6v-2.8M2002.7 1226.1v2.8M2006.3 1227.4v2M2008.1 1221.2v-0.6M2012.6 1227.2v2.8M2018.3 1221.5v-0.6" stroke="#2020be" stroke-width="1.1" fill="none"/><path d="M2017.9 1096.5L2019.9 1096.3L2021.9 1096.2L2023.9 1096L2025.9 1095.4L2027.9 1096.2L2029.9 1096.1L2031.9 1096L2033.9 1096L2035.9 1096.1L2037.9 1095.9L2039.9 1096.2L2041.9 1096.2L2043.9 1096L2045.9 1095.9L2047.9 1096.2L2049.9 1094.5L2051.9 1096.5L2053.9 1096.3L2055.9 1094.8L2057.9 1096.1L2059.9 1096.2L2061.9 1095.9L2063.9 1095.8L2065.9 1096.1L2067.9 1096L2069.9 1095.9L2071.9 1095.8L2073.9 1096.2L2075.9 1096.1L2077.9 1096L2079.9 1095.6L2081.9 1095.8L2083.9 1096L2085.9 1096.1L2087.9 1096.3L2089.9 1095.8L2091.9 1095.8L2093.9 1095.7L2095.9 1095.5L2097.9 1096.1L2099.9 1096.1L2100.1 1096" fill="none" stroke="#2020be" stroke-width="7" stroke-linejoin="bevel" /><path d="M2020.5 1093.3v-2M2024.5 1099v0.6M2026.5 1092.4v-2M2033.2 1093v-2M2035.3 1099v2M2037.1 1093.1v-1.4M2052.9 1099.5v1M2056.1 1097.8v1M2058.2 1099.1v2M2061.1 1093.2v-2.8M2063.1 1098.9v2M2064.7 1098.8v2M2067.1 1099.1v2.8M2068 1093v-1M2070.9 1092.9v-0.6M2071.9 1098.8v2M2075 1099.2v2.8M2080.9 1092.6v-0.6M2084.6 1093v-2M2088.8 1093.3v-0.6M2101 1099v1" stroke="#2020be" stroke-width="1.1" fill="none"/><path d="M2101.1 1224.6L2103.1 1224.7L2105.1 1224.6L2107.1 1224.2L2109.1 1224.1L2111.1 1224.2L2113.1 1224L2115.1 1224.4L2117.1 1224.7L2119.1 1224.4L2121.1 1224.1L2123.1 1224.8L2125.1 1224.8L2127.1 1224.4L2129.1 1224.1L2131.1 1224.3L2133.1 1224.7L2135.1 1224L2137.1 1224.4L2139.1 1224.3L2141.1 1224.5L2143.1 1224.7L2145.1 1224.5L2147.1 1224.5L2149.1 1224.5L2151.1 1223.8L2153.1 1224.6L2155.1 1224.3L2157.1 1224.6L2159.1 1224.3L2161.1 1224.3L2163.1 1224.5L2165.1 1224.9L2167.1 1224.1L2169.1 1224.6L2171.1 1223.2L2173.1 1224.7L2175.1 1225L2177.1 1224.5L2179.1 1224.3L2181.1 1224.7L2183.1 1224.6L2185.1 1224.5L2187.1 1224.7L2189.1 1224.7L2191.1 1224.5L2193.1 1224.2L2195.1 1224.4L2197.1 1224.5L2199.1 1224.5L2201.1 1224.2L2203.1 1224.4L2205.1 1224L2207.1 1224.4L2209.1 1224.4L2211.1 1223.7L2213.1 1224.5L2215.1 1224.3L2217.1 1224.5L2219.1 1224.4L2221.1 1224.7L2223.1 1224.5L2225.1 1223.9L2227.1 1223.9L2229.1 1224.5L2231.1 1224.3L2233.1 1224.6L2235.1 1224.5L2237.1 1224.1L2239.1 1224L2241.1 1224.8L2243.1 1224L2245.1 1224.4L2247.1 1224.5L2249.1 1224.5L2251.1 1226.3L2253.1 1224.5L2255.1 1224.2L2257.1 1224.1L2259.1 1224.6L2261.1 1224.6L2263.1 1224.8L2265.1 1224.6L2267.1 1224.8L2269.1 1224.5L2271.1 1224.7L2273.1 1224.8L2275.1 1224.8L2277.1 1224.1L2279.1 1224.5L2281.1 1224.4L2283.1 1224.6L2285.1 1225.3L2287.1 1224.3L2289.1 1224.2L2291.1 1223.9L2293.1 1224.5L2295.1 1224.8L2297.1 1223.8L2299.1 1224.8L2301.1 1224.7L2303.1 1225L2305.1 1224.7L2307.1 1224.9L2309.1 1224L2311.1 1224.2L2313.1 1224.6L2315.1 1224.4L2317.1 1224.6L2319.1 1224.7L2321.1 1224.6L2323.1 1224.5L2325.1 1224.4L2327.1 1224.3L2329.1 1224.5L2331.1 1224.8L2333.1 1224.2L2335.1 1224.9L2337.1 1224.6L2339.1 1224.6L2341.1 1224.5L2343.1 1225L2345.1 1224.5L2347.1 1224.7L2349.1 1224.3L2351.1 1224.6L2353.1 1224.8L2355.1 1224.8L2357.1 1224.7L2359.1 1224.4L2361.1 1225L2363.1 1226L2365.1 1224.5L2367.1 1224.8L2369.1 1224.9L2371.1 1224.2L2373.1 1224.8L2375.1 1224.5L2377.1 1224.6L2379.1 1224.4L2381.1 1224.1L2383.1 1224.3L2385.1 1224.5L2387.1 1224.2L2389.1 1224L2391.1 1224.4L2393.1 1224.7L2395.1 1224.6L2397.1 1224.3L2399.1 1225.1L2401.1 1224.6L2403.1 1223.9L2405.1 1224L2407.1 1225.1L2409.1 1224.9L2411.1 1224.3L2413.1 1224.3L2415.1 1225L2417.1 1223L2419.1 1224.3L2421.1 1224.8L2423.1 1224.7L2425.1 1224.8L2427.1 1224.8L2428.7 1224.5" fill="none" stroke="#2020be" stroke-width="7" stroke-linejoin="bevel" /><path d="M2104.5 1227.7v1.4M2109.9 1227.1v1M2111.7 1227.2v0.6M2123.9 1221.8v-1M2125.6 1221.8v-2M2129.1 1221.1v-2M2133.8 1227.7v0.6M2136.1 1227v0.6M2142.1 1221.5v-2.8M2143.8 1221.7v-0.6M2147.3 1227.5v2.8M2149.6 1227.5v1.4M2162.4 1227.3v0.6M2170 1221.6v-0.6M2183.7 1221.6v-1M2186.4 1227.5v0.6M2189.9 1221.7v-1M2191.5 1221.5v-0.6M2202.2 1221.2v-2M2203.3 1227.4v2M2205.7 1227v2M2209.6 1221.4v-2M2215.9 1227.3v1M2222.3 1221.7v-2.8M2224 1227.5v1M2226.1 1220.9v-1M2236.5 1221.5v-2M2237.5 1227.1v2.8M2243.4 1221v-1M2258.4 1227.1v1M2259.3 1221.6v-0.6M2262 1221.6v-2M2265.8 1221.6v-2M2271.2 1221.7v-0.6M2273.5 1221.8v-1.4M2278.5 1227.1v1M2280 1227.5v0.6M2281.8 1221.4v-1M2284.2 1221.6v-2.8M2287.1 1227.3v2.8M2292.5 1226.9v2M2294.6 1227.5v1M2296.3 1227.8v2M2300.5 1221.8v-1.4M2303.3 1228v2.8M2306.6 1227.7v0.6M2309.3 1227v1.4M2316.5 1221.4v-1.4M2317.2 1221.6v-1M2319.6 1221.7v-1M2336.5 1221.9v-0.6M2346.3 1221.5v-1.4M2353.4 1227.8v1.4M2355.6 1227.8v0.6M2357.8 1227.7v1M2361.5 1222v-2.8M2368.4 1227.8v2.8M2375.4 1227.5v2M2379.4 1221.4v-2.8M2384.5 1221.3v-2M2386.1 1221.5v-0.6M2396.4 1227.6v2M2402.4 1221.6v-0.6M2408.3 1228.1v2M2411.5 1227.3v0.6M2417.2 1226v1M2420.2 1227.3v1M2422.3 1227.8v2M2424.2 1227.7v1.4M2427.8 1227.8v2.8" stroke="#2020be" stroke-width="1.1" fill="none"/><path d="M2429.7 1094.8L2431.7 1096L2433.7 1096.3L2435.7 1096.6L2437.7 1096L2439.7 1096.5L2441.7 1096.4L2443.7 1096.1L2445.7 1097.6L2447.7 1095.8L2449.7 1096L2451.7 1095.5L2453.7 1096.3L2455.7 1095.6L2457.7 1096.5L2459.7 1096.2L2461.7 1096L2463.7 1096.5L2465.7 1096.5L2467.7 1096.1L2469.7 1095.9L2471.7 1095.3L2473.7 1096.2L2474 1096" fill="none" stroke="#2020be" stroke-width="7" stroke-linejoin="bevel" /><path d="M2430.7 1091.8v-0.6M2434.6 1093.3v-0.6M2438.5 1099v1.4M2440.6 1099.5v0.6M2442.8 1093.4v-2M2445.9 1094.6v-1M2455.1 1093.3v-2M2462.5 1093v-0.6M2468.1 1099.1v1.4" stroke="#2020be" stroke-width="1.1" fill="none"/><path d="M370.2 1224.5 V1090" stroke="#2020be" stroke-width="1.5" fill="none"/><path d="M782 1224.5 V1090" stroke="#2020be" stroke-width="1.5" fill="none"/><path d="M1193.8 1224.5 V1090" stroke="#2020be" stroke-width="1.5" fill="none"/><path d="M1605.6 1224.5 V1090" stroke="#2020be" stroke-width="1.5" fill="none"/><path d="M2017.4 1224.5 V1090" stroke="#2020be" stroke-width="1.5" fill="none"/><path d="M2429.2 1224.5 V1090" stroke="#2020be" stroke-width="1.5" fill="none"/><path d="M41.2 1096 V1160 M42 1154 V1224.5" stroke="#2020be" stroke-width="1.5" fill="none"/><path d="M453 1096 V1160 M453.8 1154 V1224.5" stroke="#2020be" stroke-width="1.5" fill="none"/><path d="M864.8 1096 V1160 M865.6 1154 V1224.5" stroke="#2020be" stroke-width="1.5" fill="none"/><path d="M1276.6 1096 V1160 M1277.4 1154 V1224.5" stroke="#2020be" stroke-width="1.5" fill="none"/><path d="M1688.4 1096 V1160 M1689.2 1154 V1224.5" stroke="#2020be" stroke-width="1.5" fill="none"/><path d="M2100.2 1096 V1160 M2101 1154 V1224.5" stroke="#2020be" stroke-width="1.5" fill="none"/><g stroke="#4a4a4a" stroke-width="1.8" fill="none" opacity="0.88"><g stroke-dasharray="6.5 6.53"><path d="M122.9 74 V1266" /><path d="M370.5 74 V1266" /><path d="M617.9 74 V1266" /><path d="M865.2 74 V1266" /><path d="M1111.3 74 V1266" /><path d="M1358.7 74 V1266" /><path d="M1606.1 74 V1266" /><path d="M1853.5 74 V1266" /><path d="M2100.9 74 V1266" /><path d="M2346.9 74 V1266" /></g><g stroke-dasharray="6.5 6.54"><path d="M0 127.1 H2421" /><path d="M0 249.2 H2421" /><path d="M0 371.3 H2421" /><path d="M0 493.4 H2421" /><path d="M0 615.5 H2421" /><path d="M0 737.6 H2421" /><path d="M0 859.7 H2421" /><path d="M0 981.8 H2421" /><path d="M0 1103.9 H2421" /><path d="M0 1226 H2421" /></g></g><path d="M11.3 354.4 H38.2 L54.6 370.7 L38.2 387 H11.3 Q8.3 387 8.3 384 V357.4 Q8.3 354.4 11.3 354.4 Z" fill="#fff8e2" stroke="#f5dc9a" stroke-width="1.6"/><text x="19.2" y="375.5" font-size="16" fill="#1a1a2a" textLength="22.4" lengthAdjust="spacingAndGlyphs" stroke="#1a1a2a" stroke-width="0.3">C 1</text><path d="M11.3 477 H38.2 L54.6 493.3 L38.2 509.6 H11.3 Q8.3 509.6 8.3 506.6 V480 Q8.3 477 11.3 477 Z" fill="#20c4d0" stroke="#1a2a30" stroke-width="1.6"/><text x="19.2" y="498.1" font-size="16" fill="#101820" textLength="22.4" lengthAdjust="spacingAndGlyphs" stroke="#101820" stroke-width="0.3">C 2</text><path d="M11.3 597.7 H38.2 L54.6 614 L38.2 630.3 H11.3 Q8.3 630.3 8.3 627.3 V600.7 Q8.3 597.7 11.3 597.7 Z" fill="#fde9ed" stroke="#e8788e" stroke-width="1.6"/><text x="19.2" y="618.8" font-size="16" fill="#1a1a2a" textLength="22.4" lengthAdjust="spacingAndGlyphs" stroke="#1a1a2a" stroke-width="0.3">C 3</text><path d="M11.3 721 H38.2 L54.6 737.3 L38.2 753.6 H11.3 Q8.3 753.6 8.3 750.6 V724 Q8.3 721 11.3 721 Z" fill="#eef4e2" stroke="#a6c86e" stroke-width="1.6"/><text x="19.2" y="742.1" font-size="16" fill="#1a1a2a" textLength="22.4" lengthAdjust="spacingAndGlyphs" stroke="#1a1a2a" stroke-width="0.3">C 4</text><path d="M11.3 965.2 H38.2 L54.6 981.5 L38.2 997.8 H11.3 Q8.3 997.8 8.3 994.8 V968.2 Q8.3 965.2 11.3 965.2 Z" fill="#fde8de" stroke="#f2a878" stroke-width="1.6"/><text x="19.2" y="986.3" font-size="16" fill="#1a1a2a" textLength="22.4" lengthAdjust="spacingAndGlyphs" stroke="#1a1a2a" stroke-width="0.3">C 5</text><path d="M11.3 1209.1 H38.2 L54.6 1225.4 L38.2 1241.7 H11.3 Q8.3 1241.7 8.3 1238.7 V1212.1 Q8.3 1209.1 11.3 1209.1 Z" fill="#e6e6f6" stroke="#4454c4" stroke-width="1.6"/><text x="19.2" y="1230.2" font-size="16" fill="#1a1a2a" textLength="22.4" lengthAdjust="spacingAndGlyphs" stroke="#1a1a2a" stroke-width="0.3">C 6</text><text x="52.3" y="355.4" font-size="23.3" fill="#262626" textLength="83.5" lengthAdjust="spacingAndGlyphs" opacity="0.7">SUPPLY</text><text x="51.5" y="354.6" font-size="23.3" fill="#b2cc4c" textLength="83.5" lengthAdjust="spacingAndGlyphs" stroke="#b2cc4c" stroke-width="0.1">SUPPLY</text><text x="55.8" y="470.8" font-size="23.3" fill="#262626" textLength="29" lengthAdjust="spacingAndGlyphs" opacity="0.7">EN</text><text x="55" y="470" font-size="23.3" fill="#1ebecc" textLength="29" lengthAdjust="spacingAndGlyphs" stroke="#1ebecc" stroke-width="0.1">EN</text><text x="59.8" y="595.8" font-size="23.3" fill="#262626" textLength="71" lengthAdjust="spacingAndGlyphs" opacity="0.7">PWM1</text><text x="59" y="595" font-size="23.3" fill="#de304e" textLength="71" lengthAdjust="spacingAndGlyphs" stroke="#de304e" stroke-width="0.1">PWM1</text><text x="57.8" y="719.4" font-size="23.3" fill="#262626" textLength="91" lengthAdjust="spacingAndGlyphs" opacity="0.7">DIAGEN</text><text x="57" y="718.6" font-size="23.3" fill="#6cbf1e" textLength="91" lengthAdjust="spacingAndGlyphs" stroke="#6cbf1e" stroke-width="0.1">DIAGEN</text><text x="65.8" y="966.8" font-size="23.3" fill="#262626" textLength="60" lengthAdjust="spacingAndGlyphs" opacity="0.7">OUT1</text><text x="65" y="966" font-size="23.3" fill="#f08a2a" textLength="60" lengthAdjust="spacingAndGlyphs" stroke="#f08a2a" stroke-width="0.1">OUT1</text><text x="68.8" y="1212.3" font-size="23.3" fill="#262626" textLength="99" lengthAdjust="spacingAndGlyphs" opacity="0.7">OUT_Tot</text><text x="68" y="1211.5" font-size="23.3" fill="#1c24b4" textLength="99" lengthAdjust="spacingAndGlyphs" stroke="#1c24b4" stroke-width="0.1">OUT_Tot</text><text x="2470.8" y="134.7" font-size="18.5" fill="#151a1e" textLength="35.3" lengthAdjust="spacingAndGlyphs" text-anchor="end" opacity="0.85">15 V</text><text x="2470" y="133.9" font-size="18.5" fill="#1ec8d6" textLength="35.3" lengthAdjust="spacingAndGlyphs" text-anchor="end" stroke="#1ec8d6" stroke-width="0.2">15 V</text><text x="2470.8" y="256.8" font-size="18.5" fill="#151a1e" textLength="35.3" lengthAdjust="spacingAndGlyphs" text-anchor="end" opacity="0.85">10 V</text><text x="2470" y="256" font-size="18.5" fill="#1ec8d6" textLength="35.3" lengthAdjust="spacingAndGlyphs" text-anchor="end" stroke="#1ec8d6" stroke-width="0.2">10 V</text><text x="2470.8" y="378.9" font-size="18.5" fill="#151a1e" textLength="26" lengthAdjust="spacingAndGlyphs" text-anchor="end" opacity="0.85">5 V</text><text x="2470" y="378.1" font-size="18.5" fill="#1ec8d6" textLength="26" lengthAdjust="spacingAndGlyphs" text-anchor="end" stroke="#1ec8d6" stroke-width="0.2">5 V</text><text x="2470.8" y="501" font-size="18.5" fill="#151a1e" textLength="26" lengthAdjust="spacingAndGlyphs" text-anchor="end" opacity="0.85">0 V</text><text x="2470" y="500.2" font-size="18.5" fill="#1ec8d6" textLength="26" lengthAdjust="spacingAndGlyphs" text-anchor="end" stroke="#1ec8d6" stroke-width="0.2">0 V</text><text x="2470.8" y="623.1" font-size="18.5" fill="#151a1e" textLength="33" lengthAdjust="spacingAndGlyphs" text-anchor="end" opacity="0.85">-5 V</text><text x="2470" y="622.3" font-size="18.5" fill="#1ec8d6" textLength="33" lengthAdjust="spacingAndGlyphs" text-anchor="end" stroke="#1ec8d6" stroke-width="0.2">-5 V</text><text x="2470.8" y="745.2" font-size="18.5" fill="#151a1e" textLength="42" lengthAdjust="spacingAndGlyphs" text-anchor="end" opacity="0.85">-10 V</text><text x="2470" y="744.4" font-size="18.5" fill="#1ec8d6" textLength="42" lengthAdjust="spacingAndGlyphs" text-anchor="end" stroke="#1ec8d6" stroke-width="0.2">-10 V</text><text x="2470.8" y="867.3" font-size="18.5" fill="#151a1e" textLength="42" lengthAdjust="spacingAndGlyphs" text-anchor="end" opacity="0.85">-15 V</text><text x="2470" y="866.5" font-size="18.5" fill="#1ec8d6" textLength="42" lengthAdjust="spacingAndGlyphs" text-anchor="end" stroke="#1ec8d6" stroke-width="0.2">-15 V</text><text x="2470.8" y="989.4" font-size="18.5" fill="#151a1e" textLength="42" lengthAdjust="spacingAndGlyphs" text-anchor="end" opacity="0.85">-20 V</text><text x="2470" y="988.6" font-size="18.5" fill="#1ec8d6" textLength="42" lengthAdjust="spacingAndGlyphs" text-anchor="end" stroke="#1ec8d6" stroke-width="0.2">-20 V</text><text x="2470.8" y="1111.5" font-size="18.5" fill="#151a1e" textLength="42" lengthAdjust="spacingAndGlyphs" text-anchor="end" opacity="0.85">-25 V</text><text x="2470" y="1110.7" font-size="18.5" fill="#1ec8d6" textLength="42" lengthAdjust="spacingAndGlyphs" text-anchor="end" stroke="#1ec8d6" stroke-width="0.2">-25 V</text><text x="2470.8" y="1233.6" font-size="18.5" fill="#151a1e" textLength="42" lengthAdjust="spacingAndGlyphs" text-anchor="end" opacity="0.85">-30 V</text><text x="2470" y="1232.8" font-size="18.5" fill="#1ec8d6" textLength="42" lengthAdjust="spacingAndGlyphs" text-anchor="end" stroke="#1ec8d6" stroke-width="0.2">-30 V</text><text x="122.4" y="1284.8" font-size="18.3" fill="#111" textLength="44.2" lengthAdjust="spacingAndGlyphs" text-anchor="middle" stroke="#111" stroke-width="0.35">-1 ms</text><text x="370.5" y="1284.8" font-size="18.3" fill="#111" textLength="22.3" lengthAdjust="spacingAndGlyphs" text-anchor="middle" stroke="#111" stroke-width="0.35">0 s</text><text x="617.9" y="1284.8" font-size="18.3" fill="#111" textLength="38" lengthAdjust="spacingAndGlyphs" text-anchor="middle" stroke="#111" stroke-width="0.35">1 ms</text><text x="865.2" y="1284.8" font-size="18.3" fill="#111" textLength="38" lengthAdjust="spacingAndGlyphs" text-anchor="middle" stroke="#111" stroke-width="0.35">2 ms</text><text x="1111.3" y="1284.8" font-size="18.3" fill="#111" textLength="38" lengthAdjust="spacingAndGlyphs" text-anchor="middle" stroke="#111" stroke-width="0.35">3 ms</text><text x="1358.7" y="1284.8" font-size="18.3" fill="#111" textLength="38" lengthAdjust="spacingAndGlyphs" text-anchor="middle" stroke="#111" stroke-width="0.35">4 ms</text><text x="1606.1" y="1284.8" font-size="18.3" fill="#111" textLength="38" lengthAdjust="spacingAndGlyphs" text-anchor="middle" stroke="#111" stroke-width="0.35">5 ms</text><text x="1853.5" y="1284.8" font-size="18.3" fill="#111" textLength="38" lengthAdjust="spacingAndGlyphs" text-anchor="middle" stroke="#111" stroke-width="0.35">6 ms</text><text x="2100.9" y="1284.8" font-size="18.3" fill="#111" textLength="38" lengthAdjust="spacingAndGlyphs" text-anchor="middle" stroke="#111" stroke-width="0.35">7 ms</text><text x="2346.9" y="1284.8" font-size="18.3" fill="#111" textLength="38" lengthAdjust="spacingAndGlyphs" text-anchor="middle" stroke="#111" stroke-width="0.35">8 ms</text><path d="M356.5 70 H382.5 L369.5 83 Z" fill="#d87a32"/><path d="M356.5 70 H382.5 L380.5 72.5 H358.5 Z" fill="#f39030"/><path d="M357.5 84.3 H381.5 V109 H374 L369.5 119 L365 109 H357.5 Z" fill="#000" stroke="#f28a22" stroke-width="2.2"/><path d="M364 91 H375 M369.5 91 V104" stroke="#f28a22" stroke-width="2.6" fill="none"/><path d="M2424 78.5 H2464 Q2467 78.5 2467 81.5 V121 Z" fill="#4a4a4a" stroke="#161616" stroke-width="1.6" stroke-linejoin="round"/><circle cx="2457" cy="88" r="4.8" fill="none" stroke="#a8a8a8" stroke-width="1.8"/><path d="M2445 100 L2452.5 92.5" stroke="#a8a8a8" stroke-width="3" stroke-linecap="round"/><path d="M2447.5 561.5 L2461 548.5 L2462 555.5 V559.5 H2475 V564.5 H2462 V568 L2461 575 Z" fill="#050505" stroke="#7a1020" stroke-width="0.6"/>
</g>
<path d="M4 1325 V1300 Q4 1300 7 1300 H118 Q121 1300 121 1303 V1325 Z" fill="#4a4322"/><path d="M4 1325 H121 V1397 Q121 1403 115 1403 H10 Q4 1403 4 1397 Z" fill="#cbcbcb"/><text x="11" y="1318.9" font-size="21" fill="#c6e23e" textLength="38.5" lengthAdjust="spacingAndGlyphs" stroke="#c6e23e" stroke-width="0.35">Ch 1</text><text x="13.7" y="1348.5" font-size="20" fill="#111" textLength="61" lengthAdjust="spacingAndGlyphs" stroke="#111" stroke-width="0.35">5 V/div</text><g transform="translate(14 1356)"><path d="M2.5 10 Q2.5 1.5 10 1.5 Q17 1.5 18 9" fill="none" stroke="#222" stroke-width="1.5"/><circle cx="10" cy="6.5" r="3.4" fill="none" stroke="#222" stroke-width="1.5"/><rect x="0.8" y="9" width="3.4" height="7.5" rx="1.7" fill="#eaeaea" stroke="#222" stroke-width="1.1"/><rect x="15.6" y="9" width="4.4" height="7.5" rx="1.2" fill="#eaeaea" stroke="#222" stroke-width="1.1"/></g><text x="13.7" y="1398.2" font-size="20" fill="#111" textLength="79" lengthAdjust="spacingAndGlyphs" stroke="#111" stroke-width="0.35">250 MHz</text><text x="99.8" y="1390.5" font-size="13.2" fill="#111" font-weight="bold" stroke="#111" stroke-width="0.5">B</text><text x="105.6" y="1394" font-size="11.5" fill="#111" font-weight="bold" stroke="#111" stroke-width="0.4">w</text><path d="M127.5 1325 V1300 Q127.5 1300 130.5 1300 H241.5 Q244.5 1300 244.5 1303 V1325 Z" fill="#22cdd5"/><path d="M127.5 1325 H244.5 V1397 Q244.5 1403 238.5 1403 H133.5 Q127.5 1403 127.5 1397 Z" fill="#cbcbcb"/><rect x="128.5" y="1324.5" width="115" height="1.2" fill="#e8aa98"/><text x="134.5" y="1318.9" font-size="21" fill="#0a0a0a" textLength="38.5" lengthAdjust="spacingAndGlyphs" stroke="#0a0a0a" stroke-width="0.35">Ch 2</text><text x="137.2" y="1348.5" font-size="20" fill="#111" textLength="61" lengthAdjust="spacingAndGlyphs" stroke="#111" stroke-width="0.35">5 V/div</text><g transform="translate(137.5 1356)"><path d="M2.5 10 Q2.5 1.5 10 1.5 Q17 1.5 18 9" fill="none" stroke="#222" stroke-width="1.5"/><circle cx="10" cy="6.5" r="3.4" fill="none" stroke="#222" stroke-width="1.5"/><rect x="0.8" y="9" width="3.4" height="7.5" rx="1.7" fill="#eaeaea" stroke="#222" stroke-width="1.1"/><rect x="15.6" y="9" width="4.4" height="7.5" rx="1.2" fill="#eaeaea" stroke="#222" stroke-width="1.1"/></g><text x="137.2" y="1398.2" font-size="20" fill="#111" textLength="79" lengthAdjust="spacingAndGlyphs" stroke="#111" stroke-width="0.35">250 MHz</text><text x="223.3" y="1390.5" font-size="13.2" fill="#111" font-weight="bold" stroke="#111" stroke-width="0.5">B</text><text x="229.1" y="1394" font-size="11.5" fill="#111" font-weight="bold" stroke="#111" stroke-width="0.4">w</text><path d="M251 1325 V1300 Q251 1300 254 1300 H365 Q368 1300 368 1303 V1325 Z" fill="#47202a"/><path d="M251 1325 H368 V1397 Q368 1403 362 1403 H257 Q251 1403 251 1397 Z" fill="#cbcbcb"/><text x="258" y="1318.9" font-size="21" fill="#e8405a" textLength="38.5" lengthAdjust="spacingAndGlyphs" stroke="#e8405a" stroke-width="0.35">Ch 3</text><text x="260.7" y="1348.5" font-size="20" fill="#111" textLength="61.6" lengthAdjust="spacingAndGlyphs" stroke="#111" stroke-width="0.35">2 V/div</text><g transform="translate(261 1356)"><path d="M2.5 10 Q2.5 1.5 10 1.5 Q17 1.5 18 9" fill="none" stroke="#222" stroke-width="1.5"/><circle cx="10" cy="6.5" r="3.4" fill="none" stroke="#222" stroke-width="1.5"/><rect x="0.8" y="9" width="3.4" height="7.5" rx="1.7" fill="#eaeaea" stroke="#222" stroke-width="1.1"/><rect x="15.6" y="9" width="4.4" height="7.5" rx="1.2" fill="#eaeaea" stroke="#222" stroke-width="1.1"/></g><text x="260.7" y="1398.2" font-size="20" fill="#111" textLength="79" lengthAdjust="spacingAndGlyphs" stroke="#111" stroke-width="0.35">250 MHz</text><text x="346.8" y="1390.5" font-size="13.2" fill="#111" font-weight="bold" stroke="#111" stroke-width="0.5">B</text><text x="352.6" y="1394" font-size="11.5" fill="#111" font-weight="bold" stroke="#111" stroke-width="0.4">w</text><path d="M375 1325 V1300 Q375 1300 378 1300 H489 Q492 1300 492 1303 V1325 Z" fill="#2f3e1c"/><path d="M375 1325 H492 V1397 Q492 1403 486 1403 H381 Q375 1403 375 1397 Z" fill="#cbcbcb"/><text x="382" y="1318.9" font-size="21" fill="#8ccc2e" textLength="38.5" lengthAdjust="spacingAndGlyphs" stroke="#8ccc2e" stroke-width="0.35">Ch 4</text><text x="384.7" y="1348.5" font-size="20" fill="#111" textLength="61.6" lengthAdjust="spacingAndGlyphs" stroke="#111" stroke-width="0.35">2 V/div</text><g transform="translate(385 1356)"><path d="M2.5 10 Q2.5 1.5 10 1.5 Q17 1.5 18 9" fill="none" stroke="#222" stroke-width="1.5"/><circle cx="10" cy="6.5" r="3.4" fill="none" stroke="#222" stroke-width="1.5"/><rect x="0.8" y="9" width="3.4" height="7.5" rx="1.7" fill="#eaeaea" stroke="#222" stroke-width="1.1"/><rect x="15.6" y="9" width="4.4" height="7.5" rx="1.2" fill="#eaeaea" stroke="#222" stroke-width="1.1"/></g><text x="384.7" y="1398.2" font-size="20" fill="#111" textLength="79" lengthAdjust="spacingAndGlyphs" stroke="#111" stroke-width="0.35">250 MHz</text><text x="470.8" y="1390.5" font-size="13.2" fill="#111" font-weight="bold" stroke="#111" stroke-width="0.5">B</text><text x="476.6" y="1394" font-size="11.5" fill="#111" font-weight="bold" stroke="#111" stroke-width="0.4">w</text><path d="M498.5 1325 V1300 Q498.5 1300 501.5 1300 H612.5 Q615.5 1300 615.5 1303 V1325 Z" fill="#5a2e1f"/><path d="M498.5 1325 H615.5 V1397 Q615.5 1403 609.5 1403 H504.5 Q498.5 1403 498.5 1397 Z" fill="#cbcbcb"/><text x="505.5" y="1318.9" font-size="21" fill="#f08a36" textLength="38.5" lengthAdjust="spacingAndGlyphs" stroke="#f08a36" stroke-width="0.35">Ch 5</text><text x="508.2" y="1348.5" font-size="20" fill="#111" textLength="61" lengthAdjust="spacingAndGlyphs" stroke="#111" stroke-width="0.35">5 V/div</text><g transform="translate(508.5 1356)"><path d="M2.5 10 Q2.5 1.5 10 1.5 Q17 1.5 18 9" fill="none" stroke="#222" stroke-width="1.5"/><circle cx="10" cy="6.5" r="3.4" fill="none" stroke="#222" stroke-width="1.5"/><rect x="0.8" y="9" width="3.4" height="7.5" rx="1.7" fill="#eaeaea" stroke="#222" stroke-width="1.1"/><rect x="15.6" y="9" width="4.4" height="7.5" rx="1.2" fill="#eaeaea" stroke="#222" stroke-width="1.1"/></g><text x="508.2" y="1398.2" font-size="20" fill="#111" textLength="69" lengthAdjust="spacingAndGlyphs" stroke="#111" stroke-width="0.35">20 MHz</text><text x="594.3" y="1390.5" font-size="13.2" fill="#111" font-weight="bold" stroke="#111" stroke-width="0.5">B</text><text x="600.1" y="1394" font-size="11.5" fill="#111" font-weight="bold" stroke="#111" stroke-width="0.4">w</text><path d="M622.5 1325 V1300 Q622.5 1300 625.5 1300 H736.5 Q739.5 1300 739.5 1303 V1325 Z" fill="#1f1f3e"/><path d="M622.5 1325 H739.5 V1397 Q739.5 1403 733.5 1403 H628.5 Q622.5 1403 622.5 1397 Z" fill="#cbcbcb"/><text x="629.5" y="1318.9" font-size="21" fill="#2a2ec6" textLength="38.5" lengthAdjust="spacingAndGlyphs" stroke="#2a2ec6" stroke-width="0.35">Ch 6</text><text x="632.2" y="1348.5" font-size="20" fill="#111" textLength="102" lengthAdjust="spacingAndGlyphs" stroke="#111" stroke-width="0.35">100 mA/div</text><text x="632.2" y="1374.2" font-size="20" fill="#111" textLength="55" lengthAdjust="spacingAndGlyphs" stroke="#111" stroke-width="0.35">1 MΩ</text><text x="632.2" y="1398.2" font-size="20" fill="#111" textLength="68.6" lengthAdjust="spacingAndGlyphs" stroke="#111" stroke-width="0.35">20 MHz</text><text x="718.3" y="1390.5" font-size="13.2" fill="#111" font-weight="bold" stroke="#111" stroke-width="0.5">B</text><text x="724.1" y="1394" font-size="11.5" fill="#111" font-weight="bold" stroke="#111" stroke-width="0.4">w</text><rect x="1458" y="1300" width="1.2" height="100" fill="#7a5a40"/><rect x="1654.5" y="1300" width="1.2" height="100" fill="#7a5a40"/><defs><linearGradient id="bg" x1="0" y1="0" x2="0" y2="1"><stop offset="0" stop-color="#343634"/><stop offset="0.75" stop-color="#222"/><stop offset="1" stop-color="#161616"/></linearGradient></defs><rect x="1471" y="1300.5" width="51.5" height="100.5" rx="8" fill="url(#bg)" stroke="#6b5548" stroke-width="1.3"/><rect x="1476.2" y="1309" width="41" height="3.4" rx="1" fill="#e8842e"/><text x="1496.8" y="1339" font-size="20.3" fill="#f4f4f4" textLength="37" lengthAdjust="spacingAndGlyphs" text-anchor="middle" stroke="#f4f4f4" stroke-width="0.12">Add</text><text x="1496.8" y="1360" font-size="20.3" fill="#f4f4f4" textLength="41" lengthAdjust="spacingAndGlyphs" text-anchor="middle" stroke="#f4f4f4" stroke-width="0.12">New</text><text x="1496.8" y="1381" font-size="20.3" fill="#f4f4f4" textLength="47" lengthAdjust="spacingAndGlyphs" text-anchor="middle" stroke="#f4f4f4" stroke-width="0.12">Math</text><rect x="1530" y="1300.5" width="51.5" height="100.5" rx="8" fill="url(#bg)" stroke="#6b5548" stroke-width="1.3"/><rect x="1535.2" y="1309" width="41" height="3.4" rx="1" fill="#b4b0e0"/><text x="1555.8" y="1339" font-size="20.3" fill="#f4f4f4" textLength="37" lengthAdjust="spacingAndGlyphs" text-anchor="middle" stroke="#f4f4f4" stroke-width="0.12">Add</text><text x="1555.8" y="1360" font-size="20.3" fill="#f4f4f4" textLength="40" lengthAdjust="spacingAndGlyphs" text-anchor="middle" stroke="#f4f4f4" stroke-width="0.12">New</text><text x="1555.8" y="1381" font-size="20.3" fill="#f4f4f4" textLength="30" lengthAdjust="spacingAndGlyphs" text-anchor="middle" stroke="#f4f4f4" stroke-width="0.12">Ref</text><rect x="1588.5" y="1300.5" width="51.5" height="100.5" rx="8" fill="url(#bg)" stroke="#6b5548" stroke-width="1.3"/><rect x="1593.7" y="1309" width="41" height="3.4" rx="1" fill="#8c88e8"/><text x="1614.3" y="1339" font-size="20.3" fill="#f4f4f4" textLength="37" lengthAdjust="spacingAndGlyphs" text-anchor="middle" stroke="#f4f4f4" stroke-width="0.12">Add</text><text x="1614.3" y="1360" font-size="20.3" fill="#f4f4f4" textLength="40" lengthAdjust="spacingAndGlyphs" text-anchor="middle" stroke="#f4f4f4" stroke-width="0.12">New</text><text x="1614.3" y="1381" font-size="20.3" fill="#f4f4f4" textLength="32" lengthAdjust="spacingAndGlyphs" text-anchor="middle" stroke="#f4f4f4" stroke-width="0.12">Bus</text><path d="M1667.5 1324 V1306 Q1667.5 1300.5 1672.5 1300.5 H1923 Q1928 1300.5 1928 1306 V1324 Z" fill="#59595d"/><path d="M1667.5 1324 H1928 V1396 Q1928 1401.5 1923 1401.5 H1672.5 Q1667.5 1401.5 1667.5 1396 Z" fill="#c9c9c9"/><rect x="1667.5" y="1324" width="260.5" height="2" fill="#a4a4a4"/><text x="1675" y="1317" font-size="20.3" fill="#e8e8e8" textLength="95" lengthAdjust="spacingAndGlyphs" stroke="#e8e8e8" stroke-width="0.12">Horizontal</text><text x="1678" y="1347.5" font-size="20.3" fill="#111" textLength="72" lengthAdjust="spacingAndGlyphs" stroke="#111" stroke-width="0.35">1 ms/div</text><text x="1816" y="1347.5" font-size="20.3" fill="#111" textLength="51" lengthAdjust="spacingAndGlyphs" stroke="#111" stroke-width="0.35">10 ms</text><text x="1678" y="1372" font-size="20.3" fill="#111" textLength="110" lengthAdjust="spacingAndGlyphs" stroke="#111" stroke-width="0.35">SR: 125 MS/s</text><text x="1815" y="1372" font-size="20.3" fill="#111" textLength="60" lengthAdjust="spacingAndGlyphs" stroke="#111" stroke-width="0.35">8 ns/pt</text><text x="1678" y="1397" font-size="20.3" fill="#111" textLength="120" lengthAdjust="spacingAndGlyphs" stroke="#111" stroke-width="0.35">RL: 1.25 Mpts</text><text x="1835" y="1397" font-size="20.3" fill="#111" textLength="54" lengthAdjust="spacingAndGlyphs" stroke="#111" stroke-width="0.35">14.8%</text><path d="M1815.8 1381.8 H1826.6 V1392.5 H1823 L1821.2 1396 L1819.4 1392.5 H1815.8 Z" fill="#111" stroke="#e8822a" stroke-width="1.6"/><path d="M1818.6 1384.6 H1823.8 M1821.2 1384.6 V1390.5" stroke="#e8e8e8" stroke-width="1.5"/><path d="M1940.5 1324 V1306 Q1940.5 1300.5 1945.5 1300.5 H2144.5 Q2149.5 1300.5 2149.5 1306 V1324 Z" fill="#59595d"/><path d="M1940.5 1324 H2149.5 V1396 Q2149.5 1401.5 2144.5 1401.5 H1945.5 Q1940.5 1401.5 1940.5 1396 Z" fill="#c9c9c9"/><rect x="1940.5" y="1324" width="209" height="2" fill="#a4a4a4"/><text x="1948" y="1317" font-size="20.3" fill="#e8e8e8" textLength="61.6" lengthAdjust="spacingAndGlyphs" stroke="#e8e8e8" stroke-width="0.12">Trigger</text><rect x="1951" y="1331.5" width="38.5" height="20" rx="6" fill="#e8506c" stroke="#2a1a1e" stroke-width="1.5"/><text x="1970.2" y="1347" font-size="19" fill="#111" text-anchor="middle" stroke="#111" stroke-width="0.35">3</text><path d="M2003 1348 H2007 L2017.5 1335 H2023.5" fill="none" stroke="#2a30b0" stroke-width="1.6"/><text x="2036.8" y="1347" font-size="20.3" fill="#111" textLength="67" lengthAdjust="spacingAndGlyphs" stroke="#111" stroke-width="0.35">880 mV</text><path d="M2162 1324 V1306 Q2162 1300.5 2167 1300.5 H2352.5 Q2357.5 1300.5 2357.5 1306 V1324 Z" fill="#59595d"/><path d="M2162 1324 H2357.5 V1396 Q2357.5 1401.5 2352.5 1401.5 H2167 Q2162 1401.5 2162 1396 Z" fill="#c9c9c9"/><rect x="2162" y="1324" width="195.5" height="2" fill="#a4a4a4"/><text x="2169.5" y="1317" font-size="20.3" fill="#e8e8e8" textLength="100.5" lengthAdjust="spacingAndGlyphs" stroke="#e8e8e8" stroke-width="0.12">Acquisition</text><text x="2172.5" y="1347" font-size="20.3" fill="#111" textLength="48.6" lengthAdjust="spacingAndGlyphs" stroke="#111" stroke-width="0.35">Auto,</text><text x="2249" y="1347" font-size="20.3" fill="#111" textLength="71.4" lengthAdjust="spacingAndGlyphs" stroke="#111" stroke-width="0.35">Analyze</text><text x="2172.5" y="1372.2" font-size="20.3" fill="#111" textLength="135.4" lengthAdjust="spacingAndGlyphs" stroke="#111" stroke-width="0.35">Sample: 12 bits</text><text x="2173" y="1397.3" font-size="20.3" fill="#111" textLength="67.5" lengthAdjust="spacingAndGlyphs" stroke="#111" stroke-width="0.35">12 Acqs</text><rect x="2372.5" y="1301" width="114" height="44" rx="7" fill="#fe1f1f" stroke="#4a2a2a" stroke-width="1.2"/><text x="2428.3" y="1327.7" font-size="19.5" fill="#ffffff" textLength="67.4" lengthAdjust="spacingAndGlyphs" text-anchor="middle" font-weight="bold" stroke="#ffffff" stroke-width="0.12">Stopped</text>
</svg>
</body></html>
